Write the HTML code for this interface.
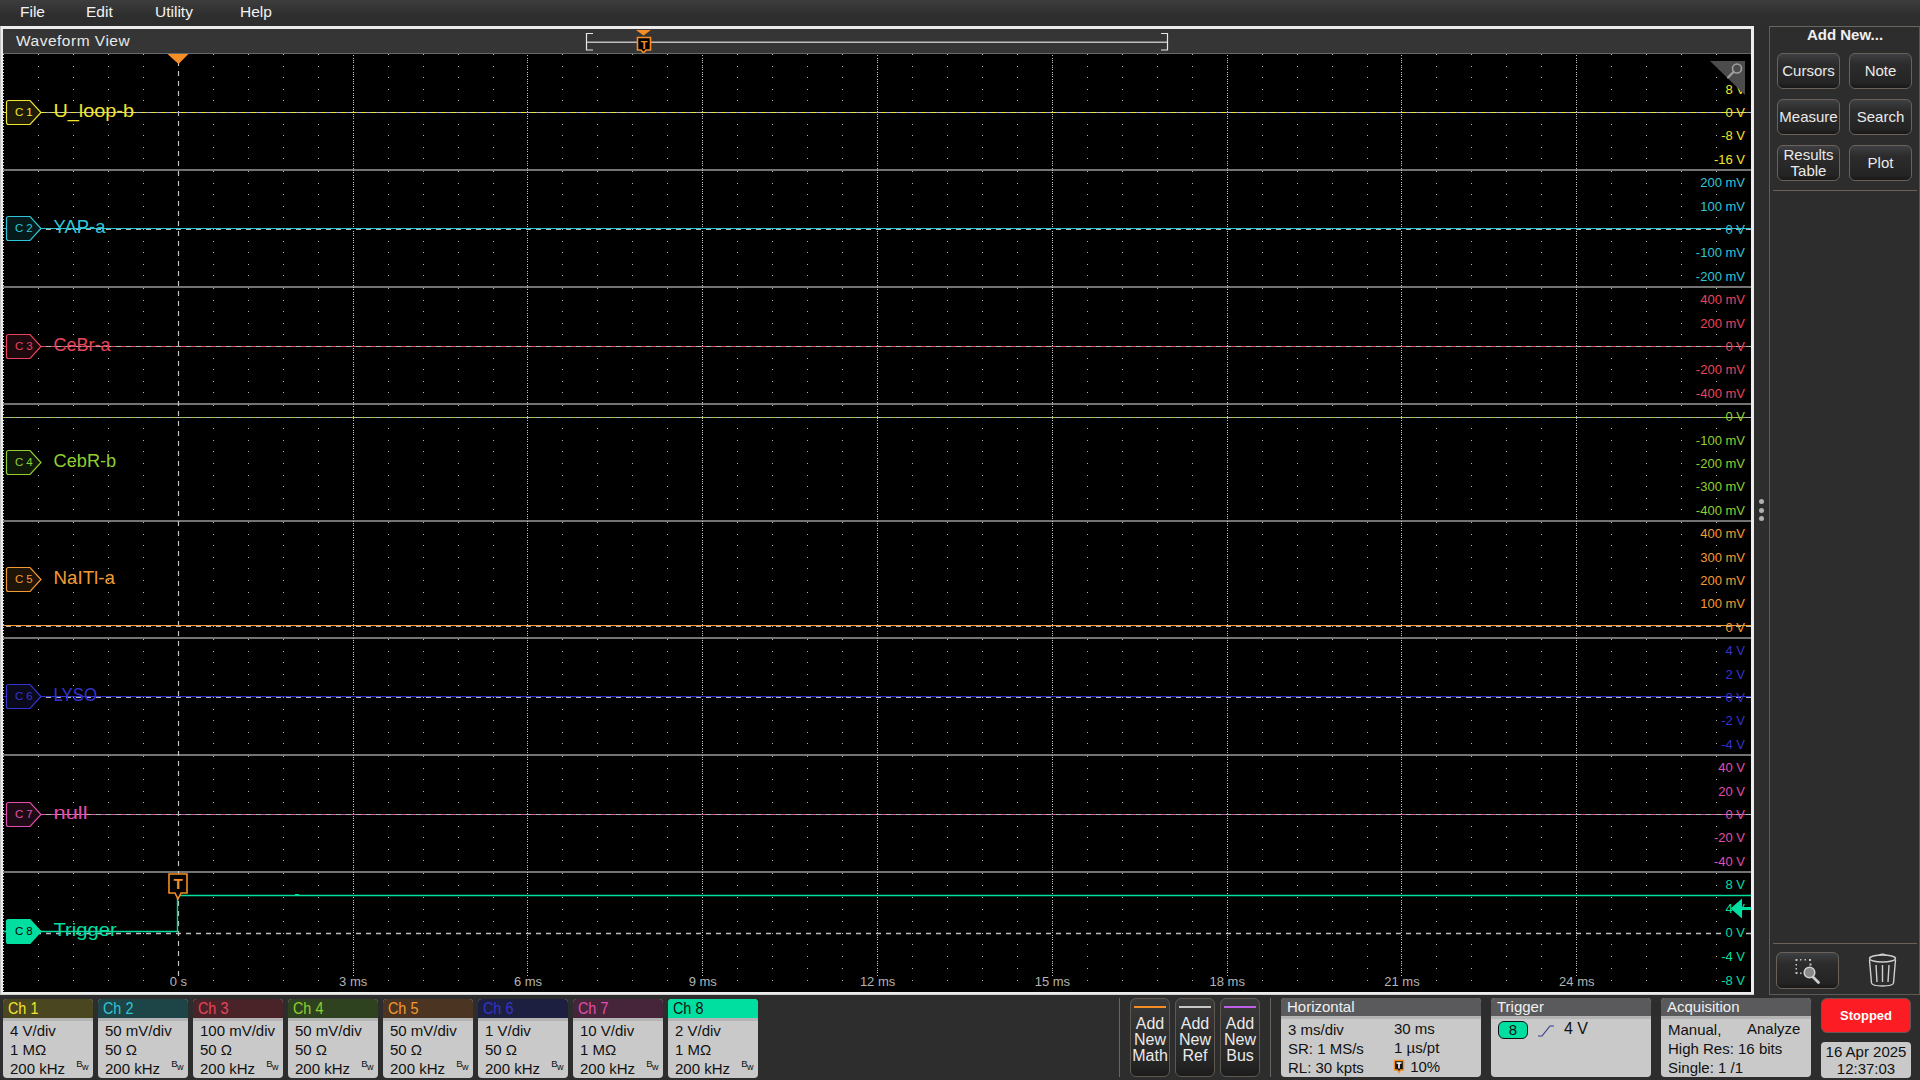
<!DOCTYPE html>
<html><head><meta charset="utf-8">
<style>
*{margin:0;padding:0;box-sizing:border-box}
html,body{width:1920px;height:1080px;overflow:hidden;background:#2d2d2d;font-family:"Liberation Sans", sans-serif;}
.abs{position:absolute}
#menubar{left:0;top:0;width:1920px;height:26px;background:linear-gradient(#3d3d3d,#2e2e2e 60%,#2d2d2d);}
.menu{position:absolute;top:3px;font-size:15.5px;color:#f2f2f2;}
#frame{left:0;top:26px;width:1754px;height:969px;background:#ececec;border-left:1.5px solid #c2c4c6;border-bottom:1px solid #d0d0d0;}
#wvhead{left:3px;top:29px;width:1748px;height:24px;background:#353535;}
#wvtitle{left:16px;top:32px;font-size:15.5px;letter-spacing:0.5px;color:#e8e8e8;}
svg text{font-family:"Liberation Sans", sans-serif;}
#rpanel{left:1769px;top:26px;width:151px;height:969px;border:1px solid #5e5a56;border-top-color:#6c6660;border-left-color:#5a5e62;border-right-color:#55585a;background:#2d2d2d;}
.btn{position:absolute;width:63px;height:36px;border:1px solid #6a625a;border-radius:6px;background:linear-gradient(#3e3f42 0%,#2c2c2c 30%,#242424 85%,#181818 100%);color:#eaeaea;font-size:15px;text-align:center;display:flex;align-items:center;justify-content:center;line-height:16px;}
.badge{position:absolute;top:999px;width:90px;height:79px;border-radius:4px;overflow:hidden;background:#c9c9c9;}
.badge .hd{height:19px;font-size:16px;line-height:19px;padding-left:5px;}
.badge .hd span{display:inline-block;transform:scaleX(0.9);transform-origin:0 0;letter-spacing:-0.3px;word-spacing:1px}
.badge .bd{border-top:3px solid #b4b4b4;font-size:15px;color:#111;padding-left:7px;padding-top:0px;line-height:19px;position:relative;}
.bw{position:absolute;right:5px;bottom:6px;font-size:9.5px;line-height:9px;color:#111;letter-spacing:-0.5px}
.addbtn{position:absolute;top:998px;width:40px;height:79px;border:1px solid #5e5850;border-radius:6px;background:linear-gradient(#3a3a3a,#262626 80%,#1c1c1c);color:#eaeaea;font-size:16px;line-height:16px;text-align:center;padding-top:17px;}
.addbtn .ln{position:absolute;left:3px;right:3px;top:7px;height:2px;}
.panel{position:absolute;top:998px;height:79px;border-radius:4px;overflow:hidden;background:#c9c9c9;}
.panel .hd{height:18px;background:#5a5a5c;color:#f0f0f0;font-size:15px;line-height:17px;padding-left:6px;}
.panel .bd{border-top:3px solid #b4b4b4;font-size:15px;color:#111;line-height:19px;padding-left:7px;padding-top:1px;position:relative;}
.vsep{position:absolute;top:998px;width:1px;height:79px;background:#6a645e;}
</style></head><body>
<div id="menubar" class="abs">
 <div class="menu" style="left:20px">File</div>
 <div class="menu" style="left:86px">Edit</div>
 <div class="menu" style="left:155px">Utility</div>
 <div class="menu" style="left:240px">Help</div>
</div>
<div id="frame" class="abs"></div>
<div id="wvhead" class="abs"></div>
<div id="wvtitle" class="abs">Waveform View</div>
<svg class="abs" style="left:0;top:0" width="1920" height="1080" viewBox="0 0 1920 1080">
 <g>
  <path d="M593 33.5H586.5V50H593" fill="none" stroke="#e6e6e6" stroke-width="1.2"/>
  <path d="M1161 33.5H1167.5V50H1161" fill="none" stroke="#e6e6e6" stroke-width="1.2"/>
  <rect x="587" y="41.5" width="580" height="1.5" fill="#bdbdbd"/>
  <path d="M636 30H651L643.5 35.5Z" fill="#f68e26"/>
  <path d="M637.5 37.5H650.5V50H646L643.5 53L641 50H637.5Z" fill="#000" stroke="#f68e26" stroke-width="1.6"/>
  <text x="644" y="48.5" text-anchor="middle" fill="#f68e26" font-size="11" font-weight="bold">T</text>
 </g>
<rect x="3" y="54" width="1748" height="938" fill="#000"/>
<line x1="3.5" y1="54" x2="3.5" y2="992" stroke="#d8d8d8" stroke-width="1" stroke-dasharray="1 2"/>
<path d="M38 54h1v1h-1zM73 54h1v1h-1zM108 54h1v1h-1zM143 54h1v1h-1zM213 54h1v1h-1zM248 54h1v1h-1zM283 54h1v1h-1zM318 54h1v1h-1zM388 54h1v1h-1zM423 54h1v1h-1zM458 54h1v1h-1zM493 54h1v1h-1zM562 54h1v1h-1zM597 54h1v1h-1zM632 54h1v1h-1zM667 54h1v1h-1zM737 54h1v1h-1zM772 54h1v1h-1zM807 54h1v1h-1zM842 54h1v1h-1zM912 54h1v1h-1zM947 54h1v1h-1zM982 54h1v1h-1zM1017 54h1v1h-1zM1087 54h1v1h-1zM1122 54h1v1h-1zM1157 54h1v1h-1zM1192 54h1v1h-1zM1262 54h1v1h-1zM1297 54h1v1h-1zM1332 54h1v1h-1zM1367 54h1v1h-1zM1436 54h1v1h-1zM1471 54h1v1h-1zM1506 54h1v1h-1zM1541 54h1v1h-1zM1611 54h1v1h-1zM1646 54h1v1h-1zM1681 54h1v1h-1zM1716 54h1v1h-1zM38 66h1v1h-1zM73 66h1v1h-1zM108 66h1v1h-1zM143 66h1v1h-1zM213 66h1v1h-1zM248 66h1v1h-1zM283 66h1v1h-1zM318 66h1v1h-1zM388 66h1v1h-1zM423 66h1v1h-1zM458 66h1v1h-1zM493 66h1v1h-1zM562 66h1v1h-1zM597 66h1v1h-1zM632 66h1v1h-1zM667 66h1v1h-1zM737 66h1v1h-1zM772 66h1v1h-1zM807 66h1v1h-1zM842 66h1v1h-1zM912 66h1v1h-1zM947 66h1v1h-1zM982 66h1v1h-1zM1017 66h1v1h-1zM1087 66h1v1h-1zM1122 66h1v1h-1zM1157 66h1v1h-1zM1192 66h1v1h-1zM1262 66h1v1h-1zM1297 66h1v1h-1zM1332 66h1v1h-1zM1367 66h1v1h-1zM1436 66h1v1h-1zM1471 66h1v1h-1zM1506 66h1v1h-1zM1541 66h1v1h-1zM1611 66h1v1h-1zM1646 66h1v1h-1zM1681 66h1v1h-1zM1716 66h1v1h-1zM38 77h1v1h-1zM73 77h1v1h-1zM108 77h1v1h-1zM143 77h1v1h-1zM213 77h1v1h-1zM248 77h1v1h-1zM283 77h1v1h-1zM318 77h1v1h-1zM388 77h1v1h-1zM423 77h1v1h-1zM458 77h1v1h-1zM493 77h1v1h-1zM562 77h1v1h-1zM597 77h1v1h-1zM632 77h1v1h-1zM667 77h1v1h-1zM737 77h1v1h-1zM772 77h1v1h-1zM807 77h1v1h-1zM842 77h1v1h-1zM912 77h1v1h-1zM947 77h1v1h-1zM982 77h1v1h-1zM1017 77h1v1h-1zM1087 77h1v1h-1zM1122 77h1v1h-1zM1157 77h1v1h-1zM1192 77h1v1h-1zM1262 77h1v1h-1zM1297 77h1v1h-1zM1332 77h1v1h-1zM1367 77h1v1h-1zM1436 77h1v1h-1zM1471 77h1v1h-1zM1506 77h1v1h-1zM1541 77h1v1h-1zM1611 77h1v1h-1zM1646 77h1v1h-1zM1681 77h1v1h-1zM1716 77h1v1h-1zM38 89h1v1h-1zM73 89h1v1h-1zM108 89h1v1h-1zM143 89h1v1h-1zM213 89h1v1h-1zM248 89h1v1h-1zM283 89h1v1h-1zM318 89h1v1h-1zM388 89h1v1h-1zM423 89h1v1h-1zM458 89h1v1h-1zM493 89h1v1h-1zM562 89h1v1h-1zM597 89h1v1h-1zM632 89h1v1h-1zM667 89h1v1h-1zM737 89h1v1h-1zM772 89h1v1h-1zM807 89h1v1h-1zM842 89h1v1h-1zM912 89h1v1h-1zM947 89h1v1h-1zM982 89h1v1h-1zM1017 89h1v1h-1zM1087 89h1v1h-1zM1122 89h1v1h-1zM1157 89h1v1h-1zM1192 89h1v1h-1zM1262 89h1v1h-1zM1297 89h1v1h-1zM1332 89h1v1h-1zM1367 89h1v1h-1zM1436 89h1v1h-1zM1471 89h1v1h-1zM1506 89h1v1h-1zM1541 89h1v1h-1zM1611 89h1v1h-1zM1646 89h1v1h-1zM1681 89h1v1h-1zM1716 89h1v1h-1zM38 100h1v1h-1zM73 100h1v1h-1zM108 100h1v1h-1zM143 100h1v1h-1zM213 100h1v1h-1zM248 100h1v1h-1zM283 100h1v1h-1zM318 100h1v1h-1zM388 100h1v1h-1zM423 100h1v1h-1zM458 100h1v1h-1zM493 100h1v1h-1zM562 100h1v1h-1zM597 100h1v1h-1zM632 100h1v1h-1zM667 100h1v1h-1zM737 100h1v1h-1zM772 100h1v1h-1zM807 100h1v1h-1zM842 100h1v1h-1zM912 100h1v1h-1zM947 100h1v1h-1zM982 100h1v1h-1zM1017 100h1v1h-1zM1087 100h1v1h-1zM1122 100h1v1h-1zM1157 100h1v1h-1zM1192 100h1v1h-1zM1262 100h1v1h-1zM1297 100h1v1h-1zM1332 100h1v1h-1zM1367 100h1v1h-1zM1436 100h1v1h-1zM1471 100h1v1h-1zM1506 100h1v1h-1zM1541 100h1v1h-1zM1611 100h1v1h-1zM1646 100h1v1h-1zM1681 100h1v1h-1zM1716 100h1v1h-1zM38 112h1v1h-1zM73 112h1v1h-1zM108 112h1v1h-1zM143 112h1v1h-1zM213 112h1v1h-1zM248 112h1v1h-1zM283 112h1v1h-1zM318 112h1v1h-1zM388 112h1v1h-1zM423 112h1v1h-1zM458 112h1v1h-1zM493 112h1v1h-1zM562 112h1v1h-1zM597 112h1v1h-1zM632 112h1v1h-1zM667 112h1v1h-1zM737 112h1v1h-1zM772 112h1v1h-1zM807 112h1v1h-1zM842 112h1v1h-1zM912 112h1v1h-1zM947 112h1v1h-1zM982 112h1v1h-1zM1017 112h1v1h-1zM1087 112h1v1h-1zM1122 112h1v1h-1zM1157 112h1v1h-1zM1192 112h1v1h-1zM1262 112h1v1h-1zM1297 112h1v1h-1zM1332 112h1v1h-1zM1367 112h1v1h-1zM1436 112h1v1h-1zM1471 112h1v1h-1zM1506 112h1v1h-1zM1541 112h1v1h-1zM1611 112h1v1h-1zM1646 112h1v1h-1zM1681 112h1v1h-1zM1716 112h1v1h-1zM38 124h1v1h-1zM73 124h1v1h-1zM108 124h1v1h-1zM143 124h1v1h-1zM213 124h1v1h-1zM248 124h1v1h-1zM283 124h1v1h-1zM318 124h1v1h-1zM388 124h1v1h-1zM423 124h1v1h-1zM458 124h1v1h-1zM493 124h1v1h-1zM562 124h1v1h-1zM597 124h1v1h-1zM632 124h1v1h-1zM667 124h1v1h-1zM737 124h1v1h-1zM772 124h1v1h-1zM807 124h1v1h-1zM842 124h1v1h-1zM912 124h1v1h-1zM947 124h1v1h-1zM982 124h1v1h-1zM1017 124h1v1h-1zM1087 124h1v1h-1zM1122 124h1v1h-1zM1157 124h1v1h-1zM1192 124h1v1h-1zM1262 124h1v1h-1zM1297 124h1v1h-1zM1332 124h1v1h-1zM1367 124h1v1h-1zM1436 124h1v1h-1zM1471 124h1v1h-1zM1506 124h1v1h-1zM1541 124h1v1h-1zM1611 124h1v1h-1zM1646 124h1v1h-1zM1681 124h1v1h-1zM1716 124h1v1h-1zM38 135h1v1h-1zM73 135h1v1h-1zM108 135h1v1h-1zM143 135h1v1h-1zM213 135h1v1h-1zM248 135h1v1h-1zM283 135h1v1h-1zM318 135h1v1h-1zM388 135h1v1h-1zM423 135h1v1h-1zM458 135h1v1h-1zM493 135h1v1h-1zM562 135h1v1h-1zM597 135h1v1h-1zM632 135h1v1h-1zM667 135h1v1h-1zM737 135h1v1h-1zM772 135h1v1h-1zM807 135h1v1h-1zM842 135h1v1h-1zM912 135h1v1h-1zM947 135h1v1h-1zM982 135h1v1h-1zM1017 135h1v1h-1zM1087 135h1v1h-1zM1122 135h1v1h-1zM1157 135h1v1h-1zM1192 135h1v1h-1zM1262 135h1v1h-1zM1297 135h1v1h-1zM1332 135h1v1h-1zM1367 135h1v1h-1zM1436 135h1v1h-1zM1471 135h1v1h-1zM1506 135h1v1h-1zM1541 135h1v1h-1zM1611 135h1v1h-1zM1646 135h1v1h-1zM1681 135h1v1h-1zM1716 135h1v1h-1zM38 147h1v1h-1zM73 147h1v1h-1zM108 147h1v1h-1zM143 147h1v1h-1zM213 147h1v1h-1zM248 147h1v1h-1zM283 147h1v1h-1zM318 147h1v1h-1zM388 147h1v1h-1zM423 147h1v1h-1zM458 147h1v1h-1zM493 147h1v1h-1zM562 147h1v1h-1zM597 147h1v1h-1zM632 147h1v1h-1zM667 147h1v1h-1zM737 147h1v1h-1zM772 147h1v1h-1zM807 147h1v1h-1zM842 147h1v1h-1zM912 147h1v1h-1zM947 147h1v1h-1zM982 147h1v1h-1zM1017 147h1v1h-1zM1087 147h1v1h-1zM1122 147h1v1h-1zM1157 147h1v1h-1zM1192 147h1v1h-1zM1262 147h1v1h-1zM1297 147h1v1h-1zM1332 147h1v1h-1zM1367 147h1v1h-1zM1436 147h1v1h-1zM1471 147h1v1h-1zM1506 147h1v1h-1zM1541 147h1v1h-1zM1611 147h1v1h-1zM1646 147h1v1h-1zM1681 147h1v1h-1zM1716 147h1v1h-1zM38 158h1v1h-1zM73 158h1v1h-1zM108 158h1v1h-1zM143 158h1v1h-1zM213 158h1v1h-1zM248 158h1v1h-1zM283 158h1v1h-1zM318 158h1v1h-1zM388 158h1v1h-1zM423 158h1v1h-1zM458 158h1v1h-1zM493 158h1v1h-1zM562 158h1v1h-1zM597 158h1v1h-1zM632 158h1v1h-1zM667 158h1v1h-1zM737 158h1v1h-1zM772 158h1v1h-1zM807 158h1v1h-1zM842 158h1v1h-1zM912 158h1v1h-1zM947 158h1v1h-1zM982 158h1v1h-1zM1017 158h1v1h-1zM1087 158h1v1h-1zM1122 158h1v1h-1zM1157 158h1v1h-1zM1192 158h1v1h-1zM1262 158h1v1h-1zM1297 158h1v1h-1zM1332 158h1v1h-1zM1367 158h1v1h-1zM1436 158h1v1h-1zM1471 158h1v1h-1zM1506 158h1v1h-1zM1541 158h1v1h-1zM1611 158h1v1h-1zM1646 158h1v1h-1zM1681 158h1v1h-1zM1716 158h1v1h-1zM38 171h1v1h-1zM73 171h1v1h-1zM108 171h1v1h-1zM143 171h1v1h-1zM213 171h1v1h-1zM248 171h1v1h-1zM283 171h1v1h-1zM318 171h1v1h-1zM388 171h1v1h-1zM423 171h1v1h-1zM458 171h1v1h-1zM493 171h1v1h-1zM562 171h1v1h-1zM597 171h1v1h-1zM632 171h1v1h-1zM667 171h1v1h-1zM737 171h1v1h-1zM772 171h1v1h-1zM807 171h1v1h-1zM842 171h1v1h-1zM912 171h1v1h-1zM947 171h1v1h-1zM982 171h1v1h-1zM1017 171h1v1h-1zM1087 171h1v1h-1zM1122 171h1v1h-1zM1157 171h1v1h-1zM1192 171h1v1h-1zM1262 171h1v1h-1zM1297 171h1v1h-1zM1332 171h1v1h-1zM1367 171h1v1h-1zM1436 171h1v1h-1zM1471 171h1v1h-1zM1506 171h1v1h-1zM1541 171h1v1h-1zM1611 171h1v1h-1zM1646 171h1v1h-1zM1681 171h1v1h-1zM1716 171h1v1h-1zM38 183h1v1h-1zM73 183h1v1h-1zM108 183h1v1h-1zM143 183h1v1h-1zM213 183h1v1h-1zM248 183h1v1h-1zM283 183h1v1h-1zM318 183h1v1h-1zM388 183h1v1h-1zM423 183h1v1h-1zM458 183h1v1h-1zM493 183h1v1h-1zM562 183h1v1h-1zM597 183h1v1h-1zM632 183h1v1h-1zM667 183h1v1h-1zM737 183h1v1h-1zM772 183h1v1h-1zM807 183h1v1h-1zM842 183h1v1h-1zM912 183h1v1h-1zM947 183h1v1h-1zM982 183h1v1h-1zM1017 183h1v1h-1zM1087 183h1v1h-1zM1122 183h1v1h-1zM1157 183h1v1h-1zM1192 183h1v1h-1zM1262 183h1v1h-1zM1297 183h1v1h-1zM1332 183h1v1h-1zM1367 183h1v1h-1zM1436 183h1v1h-1zM1471 183h1v1h-1zM1506 183h1v1h-1zM1541 183h1v1h-1zM1611 183h1v1h-1zM1646 183h1v1h-1zM1681 183h1v1h-1zM1716 183h1v1h-1zM38 194h1v1h-1zM73 194h1v1h-1zM108 194h1v1h-1zM143 194h1v1h-1zM213 194h1v1h-1zM248 194h1v1h-1zM283 194h1v1h-1zM318 194h1v1h-1zM388 194h1v1h-1zM423 194h1v1h-1zM458 194h1v1h-1zM493 194h1v1h-1zM562 194h1v1h-1zM597 194h1v1h-1zM632 194h1v1h-1zM667 194h1v1h-1zM737 194h1v1h-1zM772 194h1v1h-1zM807 194h1v1h-1zM842 194h1v1h-1zM912 194h1v1h-1zM947 194h1v1h-1zM982 194h1v1h-1zM1017 194h1v1h-1zM1087 194h1v1h-1zM1122 194h1v1h-1zM1157 194h1v1h-1zM1192 194h1v1h-1zM1262 194h1v1h-1zM1297 194h1v1h-1zM1332 194h1v1h-1zM1367 194h1v1h-1zM1436 194h1v1h-1zM1471 194h1v1h-1zM1506 194h1v1h-1zM1541 194h1v1h-1zM1611 194h1v1h-1zM1646 194h1v1h-1zM1681 194h1v1h-1zM1716 194h1v1h-1zM38 206h1v1h-1zM73 206h1v1h-1zM108 206h1v1h-1zM143 206h1v1h-1zM213 206h1v1h-1zM248 206h1v1h-1zM283 206h1v1h-1zM318 206h1v1h-1zM388 206h1v1h-1zM423 206h1v1h-1zM458 206h1v1h-1zM493 206h1v1h-1zM562 206h1v1h-1zM597 206h1v1h-1zM632 206h1v1h-1zM667 206h1v1h-1zM737 206h1v1h-1zM772 206h1v1h-1zM807 206h1v1h-1zM842 206h1v1h-1zM912 206h1v1h-1zM947 206h1v1h-1zM982 206h1v1h-1zM1017 206h1v1h-1zM1087 206h1v1h-1zM1122 206h1v1h-1zM1157 206h1v1h-1zM1192 206h1v1h-1zM1262 206h1v1h-1zM1297 206h1v1h-1zM1332 206h1v1h-1zM1367 206h1v1h-1zM1436 206h1v1h-1zM1471 206h1v1h-1zM1506 206h1v1h-1zM1541 206h1v1h-1zM1611 206h1v1h-1zM1646 206h1v1h-1zM1681 206h1v1h-1zM1716 206h1v1h-1zM38 217h1v1h-1zM73 217h1v1h-1zM108 217h1v1h-1zM143 217h1v1h-1zM213 217h1v1h-1zM248 217h1v1h-1zM283 217h1v1h-1zM318 217h1v1h-1zM388 217h1v1h-1zM423 217h1v1h-1zM458 217h1v1h-1zM493 217h1v1h-1zM562 217h1v1h-1zM597 217h1v1h-1zM632 217h1v1h-1zM667 217h1v1h-1zM737 217h1v1h-1zM772 217h1v1h-1zM807 217h1v1h-1zM842 217h1v1h-1zM912 217h1v1h-1zM947 217h1v1h-1zM982 217h1v1h-1zM1017 217h1v1h-1zM1087 217h1v1h-1zM1122 217h1v1h-1zM1157 217h1v1h-1zM1192 217h1v1h-1zM1262 217h1v1h-1zM1297 217h1v1h-1zM1332 217h1v1h-1zM1367 217h1v1h-1zM1436 217h1v1h-1zM1471 217h1v1h-1zM1506 217h1v1h-1zM1541 217h1v1h-1zM1611 217h1v1h-1zM1646 217h1v1h-1zM1681 217h1v1h-1zM1716 217h1v1h-1zM38 229h1v1h-1zM73 229h1v1h-1zM108 229h1v1h-1zM143 229h1v1h-1zM213 229h1v1h-1zM248 229h1v1h-1zM283 229h1v1h-1zM318 229h1v1h-1zM388 229h1v1h-1zM423 229h1v1h-1zM458 229h1v1h-1zM493 229h1v1h-1zM562 229h1v1h-1zM597 229h1v1h-1zM632 229h1v1h-1zM667 229h1v1h-1zM737 229h1v1h-1zM772 229h1v1h-1zM807 229h1v1h-1zM842 229h1v1h-1zM912 229h1v1h-1zM947 229h1v1h-1zM982 229h1v1h-1zM1017 229h1v1h-1zM1087 229h1v1h-1zM1122 229h1v1h-1zM1157 229h1v1h-1zM1192 229h1v1h-1zM1262 229h1v1h-1zM1297 229h1v1h-1zM1332 229h1v1h-1zM1367 229h1v1h-1zM1436 229h1v1h-1zM1471 229h1v1h-1zM1506 229h1v1h-1zM1541 229h1v1h-1zM1611 229h1v1h-1zM1646 229h1v1h-1zM1681 229h1v1h-1zM1716 229h1v1h-1zM38 241h1v1h-1zM73 241h1v1h-1zM108 241h1v1h-1zM143 241h1v1h-1zM213 241h1v1h-1zM248 241h1v1h-1zM283 241h1v1h-1zM318 241h1v1h-1zM388 241h1v1h-1zM423 241h1v1h-1zM458 241h1v1h-1zM493 241h1v1h-1zM562 241h1v1h-1zM597 241h1v1h-1zM632 241h1v1h-1zM667 241h1v1h-1zM737 241h1v1h-1zM772 241h1v1h-1zM807 241h1v1h-1zM842 241h1v1h-1zM912 241h1v1h-1zM947 241h1v1h-1zM982 241h1v1h-1zM1017 241h1v1h-1zM1087 241h1v1h-1zM1122 241h1v1h-1zM1157 241h1v1h-1zM1192 241h1v1h-1zM1262 241h1v1h-1zM1297 241h1v1h-1zM1332 241h1v1h-1zM1367 241h1v1h-1zM1436 241h1v1h-1zM1471 241h1v1h-1zM1506 241h1v1h-1zM1541 241h1v1h-1zM1611 241h1v1h-1zM1646 241h1v1h-1zM1681 241h1v1h-1zM1716 241h1v1h-1zM38 252h1v1h-1zM73 252h1v1h-1zM108 252h1v1h-1zM143 252h1v1h-1zM213 252h1v1h-1zM248 252h1v1h-1zM283 252h1v1h-1zM318 252h1v1h-1zM388 252h1v1h-1zM423 252h1v1h-1zM458 252h1v1h-1zM493 252h1v1h-1zM562 252h1v1h-1zM597 252h1v1h-1zM632 252h1v1h-1zM667 252h1v1h-1zM737 252h1v1h-1zM772 252h1v1h-1zM807 252h1v1h-1zM842 252h1v1h-1zM912 252h1v1h-1zM947 252h1v1h-1zM982 252h1v1h-1zM1017 252h1v1h-1zM1087 252h1v1h-1zM1122 252h1v1h-1zM1157 252h1v1h-1zM1192 252h1v1h-1zM1262 252h1v1h-1zM1297 252h1v1h-1zM1332 252h1v1h-1zM1367 252h1v1h-1zM1436 252h1v1h-1zM1471 252h1v1h-1zM1506 252h1v1h-1zM1541 252h1v1h-1zM1611 252h1v1h-1zM1646 252h1v1h-1zM1681 252h1v1h-1zM1716 252h1v1h-1zM38 264h1v1h-1zM73 264h1v1h-1zM108 264h1v1h-1zM143 264h1v1h-1zM213 264h1v1h-1zM248 264h1v1h-1zM283 264h1v1h-1zM318 264h1v1h-1zM388 264h1v1h-1zM423 264h1v1h-1zM458 264h1v1h-1zM493 264h1v1h-1zM562 264h1v1h-1zM597 264h1v1h-1zM632 264h1v1h-1zM667 264h1v1h-1zM737 264h1v1h-1zM772 264h1v1h-1zM807 264h1v1h-1zM842 264h1v1h-1zM912 264h1v1h-1zM947 264h1v1h-1zM982 264h1v1h-1zM1017 264h1v1h-1zM1087 264h1v1h-1zM1122 264h1v1h-1zM1157 264h1v1h-1zM1192 264h1v1h-1zM1262 264h1v1h-1zM1297 264h1v1h-1zM1332 264h1v1h-1zM1367 264h1v1h-1zM1436 264h1v1h-1zM1471 264h1v1h-1zM1506 264h1v1h-1zM1541 264h1v1h-1zM1611 264h1v1h-1zM1646 264h1v1h-1zM1681 264h1v1h-1zM1716 264h1v1h-1zM38 275h1v1h-1zM73 275h1v1h-1zM108 275h1v1h-1zM143 275h1v1h-1zM213 275h1v1h-1zM248 275h1v1h-1zM283 275h1v1h-1zM318 275h1v1h-1zM388 275h1v1h-1zM423 275h1v1h-1zM458 275h1v1h-1zM493 275h1v1h-1zM562 275h1v1h-1zM597 275h1v1h-1zM632 275h1v1h-1zM667 275h1v1h-1zM737 275h1v1h-1zM772 275h1v1h-1zM807 275h1v1h-1zM842 275h1v1h-1zM912 275h1v1h-1zM947 275h1v1h-1zM982 275h1v1h-1zM1017 275h1v1h-1zM1087 275h1v1h-1zM1122 275h1v1h-1zM1157 275h1v1h-1zM1192 275h1v1h-1zM1262 275h1v1h-1zM1297 275h1v1h-1zM1332 275h1v1h-1zM1367 275h1v1h-1zM1436 275h1v1h-1zM1471 275h1v1h-1zM1506 275h1v1h-1zM1541 275h1v1h-1zM1611 275h1v1h-1zM1646 275h1v1h-1zM1681 275h1v1h-1zM1716 275h1v1h-1zM38 288h1v1h-1zM73 288h1v1h-1zM108 288h1v1h-1zM143 288h1v1h-1zM213 288h1v1h-1zM248 288h1v1h-1zM283 288h1v1h-1zM318 288h1v1h-1zM388 288h1v1h-1zM423 288h1v1h-1zM458 288h1v1h-1zM493 288h1v1h-1zM562 288h1v1h-1zM597 288h1v1h-1zM632 288h1v1h-1zM667 288h1v1h-1zM737 288h1v1h-1zM772 288h1v1h-1zM807 288h1v1h-1zM842 288h1v1h-1zM912 288h1v1h-1zM947 288h1v1h-1zM982 288h1v1h-1zM1017 288h1v1h-1zM1087 288h1v1h-1zM1122 288h1v1h-1zM1157 288h1v1h-1zM1192 288h1v1h-1zM1262 288h1v1h-1zM1297 288h1v1h-1zM1332 288h1v1h-1zM1367 288h1v1h-1zM1436 288h1v1h-1zM1471 288h1v1h-1zM1506 288h1v1h-1zM1541 288h1v1h-1zM1611 288h1v1h-1zM1646 288h1v1h-1zM1681 288h1v1h-1zM1716 288h1v1h-1zM38 300h1v1h-1zM73 300h1v1h-1zM108 300h1v1h-1zM143 300h1v1h-1zM213 300h1v1h-1zM248 300h1v1h-1zM283 300h1v1h-1zM318 300h1v1h-1zM388 300h1v1h-1zM423 300h1v1h-1zM458 300h1v1h-1zM493 300h1v1h-1zM562 300h1v1h-1zM597 300h1v1h-1zM632 300h1v1h-1zM667 300h1v1h-1zM737 300h1v1h-1zM772 300h1v1h-1zM807 300h1v1h-1zM842 300h1v1h-1zM912 300h1v1h-1zM947 300h1v1h-1zM982 300h1v1h-1zM1017 300h1v1h-1zM1087 300h1v1h-1zM1122 300h1v1h-1zM1157 300h1v1h-1zM1192 300h1v1h-1zM1262 300h1v1h-1zM1297 300h1v1h-1zM1332 300h1v1h-1zM1367 300h1v1h-1zM1436 300h1v1h-1zM1471 300h1v1h-1zM1506 300h1v1h-1zM1541 300h1v1h-1zM1611 300h1v1h-1zM1646 300h1v1h-1zM1681 300h1v1h-1zM1716 300h1v1h-1zM38 311h1v1h-1zM73 311h1v1h-1zM108 311h1v1h-1zM143 311h1v1h-1zM213 311h1v1h-1zM248 311h1v1h-1zM283 311h1v1h-1zM318 311h1v1h-1zM388 311h1v1h-1zM423 311h1v1h-1zM458 311h1v1h-1zM493 311h1v1h-1zM562 311h1v1h-1zM597 311h1v1h-1zM632 311h1v1h-1zM667 311h1v1h-1zM737 311h1v1h-1zM772 311h1v1h-1zM807 311h1v1h-1zM842 311h1v1h-1zM912 311h1v1h-1zM947 311h1v1h-1zM982 311h1v1h-1zM1017 311h1v1h-1zM1087 311h1v1h-1zM1122 311h1v1h-1zM1157 311h1v1h-1zM1192 311h1v1h-1zM1262 311h1v1h-1zM1297 311h1v1h-1zM1332 311h1v1h-1zM1367 311h1v1h-1zM1436 311h1v1h-1zM1471 311h1v1h-1zM1506 311h1v1h-1zM1541 311h1v1h-1zM1611 311h1v1h-1zM1646 311h1v1h-1zM1681 311h1v1h-1zM1716 311h1v1h-1zM38 323h1v1h-1zM73 323h1v1h-1zM108 323h1v1h-1zM143 323h1v1h-1zM213 323h1v1h-1zM248 323h1v1h-1zM283 323h1v1h-1zM318 323h1v1h-1zM388 323h1v1h-1zM423 323h1v1h-1zM458 323h1v1h-1zM493 323h1v1h-1zM562 323h1v1h-1zM597 323h1v1h-1zM632 323h1v1h-1zM667 323h1v1h-1zM737 323h1v1h-1zM772 323h1v1h-1zM807 323h1v1h-1zM842 323h1v1h-1zM912 323h1v1h-1zM947 323h1v1h-1zM982 323h1v1h-1zM1017 323h1v1h-1zM1087 323h1v1h-1zM1122 323h1v1h-1zM1157 323h1v1h-1zM1192 323h1v1h-1zM1262 323h1v1h-1zM1297 323h1v1h-1zM1332 323h1v1h-1zM1367 323h1v1h-1zM1436 323h1v1h-1zM1471 323h1v1h-1zM1506 323h1v1h-1zM1541 323h1v1h-1zM1611 323h1v1h-1zM1646 323h1v1h-1zM1681 323h1v1h-1zM1716 323h1v1h-1zM38 334h1v1h-1zM73 334h1v1h-1zM108 334h1v1h-1zM143 334h1v1h-1zM213 334h1v1h-1zM248 334h1v1h-1zM283 334h1v1h-1zM318 334h1v1h-1zM388 334h1v1h-1zM423 334h1v1h-1zM458 334h1v1h-1zM493 334h1v1h-1zM562 334h1v1h-1zM597 334h1v1h-1zM632 334h1v1h-1zM667 334h1v1h-1zM737 334h1v1h-1zM772 334h1v1h-1zM807 334h1v1h-1zM842 334h1v1h-1zM912 334h1v1h-1zM947 334h1v1h-1zM982 334h1v1h-1zM1017 334h1v1h-1zM1087 334h1v1h-1zM1122 334h1v1h-1zM1157 334h1v1h-1zM1192 334h1v1h-1zM1262 334h1v1h-1zM1297 334h1v1h-1zM1332 334h1v1h-1zM1367 334h1v1h-1zM1436 334h1v1h-1zM1471 334h1v1h-1zM1506 334h1v1h-1zM1541 334h1v1h-1zM1611 334h1v1h-1zM1646 334h1v1h-1zM1681 334h1v1h-1zM1716 334h1v1h-1zM38 346h1v1h-1zM73 346h1v1h-1zM108 346h1v1h-1zM143 346h1v1h-1zM213 346h1v1h-1zM248 346h1v1h-1zM283 346h1v1h-1zM318 346h1v1h-1zM388 346h1v1h-1zM423 346h1v1h-1zM458 346h1v1h-1zM493 346h1v1h-1zM562 346h1v1h-1zM597 346h1v1h-1zM632 346h1v1h-1zM667 346h1v1h-1zM737 346h1v1h-1zM772 346h1v1h-1zM807 346h1v1h-1zM842 346h1v1h-1zM912 346h1v1h-1zM947 346h1v1h-1zM982 346h1v1h-1zM1017 346h1v1h-1zM1087 346h1v1h-1zM1122 346h1v1h-1zM1157 346h1v1h-1zM1192 346h1v1h-1zM1262 346h1v1h-1zM1297 346h1v1h-1zM1332 346h1v1h-1zM1367 346h1v1h-1zM1436 346h1v1h-1zM1471 346h1v1h-1zM1506 346h1v1h-1zM1541 346h1v1h-1zM1611 346h1v1h-1zM1646 346h1v1h-1zM1681 346h1v1h-1zM1716 346h1v1h-1zM38 358h1v1h-1zM73 358h1v1h-1zM108 358h1v1h-1zM143 358h1v1h-1zM213 358h1v1h-1zM248 358h1v1h-1zM283 358h1v1h-1zM318 358h1v1h-1zM388 358h1v1h-1zM423 358h1v1h-1zM458 358h1v1h-1zM493 358h1v1h-1zM562 358h1v1h-1zM597 358h1v1h-1zM632 358h1v1h-1zM667 358h1v1h-1zM737 358h1v1h-1zM772 358h1v1h-1zM807 358h1v1h-1zM842 358h1v1h-1zM912 358h1v1h-1zM947 358h1v1h-1zM982 358h1v1h-1zM1017 358h1v1h-1zM1087 358h1v1h-1zM1122 358h1v1h-1zM1157 358h1v1h-1zM1192 358h1v1h-1zM1262 358h1v1h-1zM1297 358h1v1h-1zM1332 358h1v1h-1zM1367 358h1v1h-1zM1436 358h1v1h-1zM1471 358h1v1h-1zM1506 358h1v1h-1zM1541 358h1v1h-1zM1611 358h1v1h-1zM1646 358h1v1h-1zM1681 358h1v1h-1zM1716 358h1v1h-1zM38 369h1v1h-1zM73 369h1v1h-1zM108 369h1v1h-1zM143 369h1v1h-1zM213 369h1v1h-1zM248 369h1v1h-1zM283 369h1v1h-1zM318 369h1v1h-1zM388 369h1v1h-1zM423 369h1v1h-1zM458 369h1v1h-1zM493 369h1v1h-1zM562 369h1v1h-1zM597 369h1v1h-1zM632 369h1v1h-1zM667 369h1v1h-1zM737 369h1v1h-1zM772 369h1v1h-1zM807 369h1v1h-1zM842 369h1v1h-1zM912 369h1v1h-1zM947 369h1v1h-1zM982 369h1v1h-1zM1017 369h1v1h-1zM1087 369h1v1h-1zM1122 369h1v1h-1zM1157 369h1v1h-1zM1192 369h1v1h-1zM1262 369h1v1h-1zM1297 369h1v1h-1zM1332 369h1v1h-1zM1367 369h1v1h-1zM1436 369h1v1h-1zM1471 369h1v1h-1zM1506 369h1v1h-1zM1541 369h1v1h-1zM1611 369h1v1h-1zM1646 369h1v1h-1zM1681 369h1v1h-1zM1716 369h1v1h-1zM38 381h1v1h-1zM73 381h1v1h-1zM108 381h1v1h-1zM143 381h1v1h-1zM213 381h1v1h-1zM248 381h1v1h-1zM283 381h1v1h-1zM318 381h1v1h-1zM388 381h1v1h-1zM423 381h1v1h-1zM458 381h1v1h-1zM493 381h1v1h-1zM562 381h1v1h-1zM597 381h1v1h-1zM632 381h1v1h-1zM667 381h1v1h-1zM737 381h1v1h-1zM772 381h1v1h-1zM807 381h1v1h-1zM842 381h1v1h-1zM912 381h1v1h-1zM947 381h1v1h-1zM982 381h1v1h-1zM1017 381h1v1h-1zM1087 381h1v1h-1zM1122 381h1v1h-1zM1157 381h1v1h-1zM1192 381h1v1h-1zM1262 381h1v1h-1zM1297 381h1v1h-1zM1332 381h1v1h-1zM1367 381h1v1h-1zM1436 381h1v1h-1zM1471 381h1v1h-1zM1506 381h1v1h-1zM1541 381h1v1h-1zM1611 381h1v1h-1zM1646 381h1v1h-1zM1681 381h1v1h-1zM1716 381h1v1h-1zM38 392h1v1h-1zM73 392h1v1h-1zM108 392h1v1h-1zM143 392h1v1h-1zM213 392h1v1h-1zM248 392h1v1h-1zM283 392h1v1h-1zM318 392h1v1h-1zM388 392h1v1h-1zM423 392h1v1h-1zM458 392h1v1h-1zM493 392h1v1h-1zM562 392h1v1h-1zM597 392h1v1h-1zM632 392h1v1h-1zM667 392h1v1h-1zM737 392h1v1h-1zM772 392h1v1h-1zM807 392h1v1h-1zM842 392h1v1h-1zM912 392h1v1h-1zM947 392h1v1h-1zM982 392h1v1h-1zM1017 392h1v1h-1zM1087 392h1v1h-1zM1122 392h1v1h-1zM1157 392h1v1h-1zM1192 392h1v1h-1zM1262 392h1v1h-1zM1297 392h1v1h-1zM1332 392h1v1h-1zM1367 392h1v1h-1zM1436 392h1v1h-1zM1471 392h1v1h-1zM1506 392h1v1h-1zM1541 392h1v1h-1zM1611 392h1v1h-1zM1646 392h1v1h-1zM1681 392h1v1h-1zM1716 392h1v1h-1zM38 405h1v1h-1zM73 405h1v1h-1zM108 405h1v1h-1zM143 405h1v1h-1zM213 405h1v1h-1zM248 405h1v1h-1zM283 405h1v1h-1zM318 405h1v1h-1zM388 405h1v1h-1zM423 405h1v1h-1zM458 405h1v1h-1zM493 405h1v1h-1zM562 405h1v1h-1zM597 405h1v1h-1zM632 405h1v1h-1zM667 405h1v1h-1zM737 405h1v1h-1zM772 405h1v1h-1zM807 405h1v1h-1zM842 405h1v1h-1zM912 405h1v1h-1zM947 405h1v1h-1zM982 405h1v1h-1zM1017 405h1v1h-1zM1087 405h1v1h-1zM1122 405h1v1h-1zM1157 405h1v1h-1zM1192 405h1v1h-1zM1262 405h1v1h-1zM1297 405h1v1h-1zM1332 405h1v1h-1zM1367 405h1v1h-1zM1436 405h1v1h-1zM1471 405h1v1h-1zM1506 405h1v1h-1zM1541 405h1v1h-1zM1611 405h1v1h-1zM1646 405h1v1h-1zM1681 405h1v1h-1zM1716 405h1v1h-1zM38 417h1v1h-1zM73 417h1v1h-1zM108 417h1v1h-1zM143 417h1v1h-1zM213 417h1v1h-1zM248 417h1v1h-1zM283 417h1v1h-1zM318 417h1v1h-1zM388 417h1v1h-1zM423 417h1v1h-1zM458 417h1v1h-1zM493 417h1v1h-1zM562 417h1v1h-1zM597 417h1v1h-1zM632 417h1v1h-1zM667 417h1v1h-1zM737 417h1v1h-1zM772 417h1v1h-1zM807 417h1v1h-1zM842 417h1v1h-1zM912 417h1v1h-1zM947 417h1v1h-1zM982 417h1v1h-1zM1017 417h1v1h-1zM1087 417h1v1h-1zM1122 417h1v1h-1zM1157 417h1v1h-1zM1192 417h1v1h-1zM1262 417h1v1h-1zM1297 417h1v1h-1zM1332 417h1v1h-1zM1367 417h1v1h-1zM1436 417h1v1h-1zM1471 417h1v1h-1zM1506 417h1v1h-1zM1541 417h1v1h-1zM1611 417h1v1h-1zM1646 417h1v1h-1zM1681 417h1v1h-1zM1716 417h1v1h-1zM38 428h1v1h-1zM73 428h1v1h-1zM108 428h1v1h-1zM143 428h1v1h-1zM213 428h1v1h-1zM248 428h1v1h-1zM283 428h1v1h-1zM318 428h1v1h-1zM388 428h1v1h-1zM423 428h1v1h-1zM458 428h1v1h-1zM493 428h1v1h-1zM562 428h1v1h-1zM597 428h1v1h-1zM632 428h1v1h-1zM667 428h1v1h-1zM737 428h1v1h-1zM772 428h1v1h-1zM807 428h1v1h-1zM842 428h1v1h-1zM912 428h1v1h-1zM947 428h1v1h-1zM982 428h1v1h-1zM1017 428h1v1h-1zM1087 428h1v1h-1zM1122 428h1v1h-1zM1157 428h1v1h-1zM1192 428h1v1h-1zM1262 428h1v1h-1zM1297 428h1v1h-1zM1332 428h1v1h-1zM1367 428h1v1h-1zM1436 428h1v1h-1zM1471 428h1v1h-1zM1506 428h1v1h-1zM1541 428h1v1h-1zM1611 428h1v1h-1zM1646 428h1v1h-1zM1681 428h1v1h-1zM1716 428h1v1h-1zM38 440h1v1h-1zM73 440h1v1h-1zM108 440h1v1h-1zM143 440h1v1h-1zM213 440h1v1h-1zM248 440h1v1h-1zM283 440h1v1h-1zM318 440h1v1h-1zM388 440h1v1h-1zM423 440h1v1h-1zM458 440h1v1h-1zM493 440h1v1h-1zM562 440h1v1h-1zM597 440h1v1h-1zM632 440h1v1h-1zM667 440h1v1h-1zM737 440h1v1h-1zM772 440h1v1h-1zM807 440h1v1h-1zM842 440h1v1h-1zM912 440h1v1h-1zM947 440h1v1h-1zM982 440h1v1h-1zM1017 440h1v1h-1zM1087 440h1v1h-1zM1122 440h1v1h-1zM1157 440h1v1h-1zM1192 440h1v1h-1zM1262 440h1v1h-1zM1297 440h1v1h-1zM1332 440h1v1h-1zM1367 440h1v1h-1zM1436 440h1v1h-1zM1471 440h1v1h-1zM1506 440h1v1h-1zM1541 440h1v1h-1zM1611 440h1v1h-1zM1646 440h1v1h-1zM1681 440h1v1h-1zM1716 440h1v1h-1zM38 451h1v1h-1zM73 451h1v1h-1zM108 451h1v1h-1zM143 451h1v1h-1zM213 451h1v1h-1zM248 451h1v1h-1zM283 451h1v1h-1zM318 451h1v1h-1zM388 451h1v1h-1zM423 451h1v1h-1zM458 451h1v1h-1zM493 451h1v1h-1zM562 451h1v1h-1zM597 451h1v1h-1zM632 451h1v1h-1zM667 451h1v1h-1zM737 451h1v1h-1zM772 451h1v1h-1zM807 451h1v1h-1zM842 451h1v1h-1zM912 451h1v1h-1zM947 451h1v1h-1zM982 451h1v1h-1zM1017 451h1v1h-1zM1087 451h1v1h-1zM1122 451h1v1h-1zM1157 451h1v1h-1zM1192 451h1v1h-1zM1262 451h1v1h-1zM1297 451h1v1h-1zM1332 451h1v1h-1zM1367 451h1v1h-1zM1436 451h1v1h-1zM1471 451h1v1h-1zM1506 451h1v1h-1zM1541 451h1v1h-1zM1611 451h1v1h-1zM1646 451h1v1h-1zM1681 451h1v1h-1zM1716 451h1v1h-1zM38 463h1v1h-1zM73 463h1v1h-1zM108 463h1v1h-1zM143 463h1v1h-1zM213 463h1v1h-1zM248 463h1v1h-1zM283 463h1v1h-1zM318 463h1v1h-1zM388 463h1v1h-1zM423 463h1v1h-1zM458 463h1v1h-1zM493 463h1v1h-1zM562 463h1v1h-1zM597 463h1v1h-1zM632 463h1v1h-1zM667 463h1v1h-1zM737 463h1v1h-1zM772 463h1v1h-1zM807 463h1v1h-1zM842 463h1v1h-1zM912 463h1v1h-1zM947 463h1v1h-1zM982 463h1v1h-1zM1017 463h1v1h-1zM1087 463h1v1h-1zM1122 463h1v1h-1zM1157 463h1v1h-1zM1192 463h1v1h-1zM1262 463h1v1h-1zM1297 463h1v1h-1zM1332 463h1v1h-1zM1367 463h1v1h-1zM1436 463h1v1h-1zM1471 463h1v1h-1zM1506 463h1v1h-1zM1541 463h1v1h-1zM1611 463h1v1h-1zM1646 463h1v1h-1zM1681 463h1v1h-1zM1716 463h1v1h-1zM38 475h1v1h-1zM73 475h1v1h-1zM108 475h1v1h-1zM143 475h1v1h-1zM213 475h1v1h-1zM248 475h1v1h-1zM283 475h1v1h-1zM318 475h1v1h-1zM388 475h1v1h-1zM423 475h1v1h-1zM458 475h1v1h-1zM493 475h1v1h-1zM562 475h1v1h-1zM597 475h1v1h-1zM632 475h1v1h-1zM667 475h1v1h-1zM737 475h1v1h-1zM772 475h1v1h-1zM807 475h1v1h-1zM842 475h1v1h-1zM912 475h1v1h-1zM947 475h1v1h-1zM982 475h1v1h-1zM1017 475h1v1h-1zM1087 475h1v1h-1zM1122 475h1v1h-1zM1157 475h1v1h-1zM1192 475h1v1h-1zM1262 475h1v1h-1zM1297 475h1v1h-1zM1332 475h1v1h-1zM1367 475h1v1h-1zM1436 475h1v1h-1zM1471 475h1v1h-1zM1506 475h1v1h-1zM1541 475h1v1h-1zM1611 475h1v1h-1zM1646 475h1v1h-1zM1681 475h1v1h-1zM1716 475h1v1h-1zM38 486h1v1h-1zM73 486h1v1h-1zM108 486h1v1h-1zM143 486h1v1h-1zM213 486h1v1h-1zM248 486h1v1h-1zM283 486h1v1h-1zM318 486h1v1h-1zM388 486h1v1h-1zM423 486h1v1h-1zM458 486h1v1h-1zM493 486h1v1h-1zM562 486h1v1h-1zM597 486h1v1h-1zM632 486h1v1h-1zM667 486h1v1h-1zM737 486h1v1h-1zM772 486h1v1h-1zM807 486h1v1h-1zM842 486h1v1h-1zM912 486h1v1h-1zM947 486h1v1h-1zM982 486h1v1h-1zM1017 486h1v1h-1zM1087 486h1v1h-1zM1122 486h1v1h-1zM1157 486h1v1h-1zM1192 486h1v1h-1zM1262 486h1v1h-1zM1297 486h1v1h-1zM1332 486h1v1h-1zM1367 486h1v1h-1zM1436 486h1v1h-1zM1471 486h1v1h-1zM1506 486h1v1h-1zM1541 486h1v1h-1zM1611 486h1v1h-1zM1646 486h1v1h-1zM1681 486h1v1h-1zM1716 486h1v1h-1zM38 498h1v1h-1zM73 498h1v1h-1zM108 498h1v1h-1zM143 498h1v1h-1zM213 498h1v1h-1zM248 498h1v1h-1zM283 498h1v1h-1zM318 498h1v1h-1zM388 498h1v1h-1zM423 498h1v1h-1zM458 498h1v1h-1zM493 498h1v1h-1zM562 498h1v1h-1zM597 498h1v1h-1zM632 498h1v1h-1zM667 498h1v1h-1zM737 498h1v1h-1zM772 498h1v1h-1zM807 498h1v1h-1zM842 498h1v1h-1zM912 498h1v1h-1zM947 498h1v1h-1zM982 498h1v1h-1zM1017 498h1v1h-1zM1087 498h1v1h-1zM1122 498h1v1h-1zM1157 498h1v1h-1zM1192 498h1v1h-1zM1262 498h1v1h-1zM1297 498h1v1h-1zM1332 498h1v1h-1zM1367 498h1v1h-1zM1436 498h1v1h-1zM1471 498h1v1h-1zM1506 498h1v1h-1zM1541 498h1v1h-1zM1611 498h1v1h-1zM1646 498h1v1h-1zM1681 498h1v1h-1zM1716 498h1v1h-1zM38 509h1v1h-1zM73 509h1v1h-1zM108 509h1v1h-1zM143 509h1v1h-1zM213 509h1v1h-1zM248 509h1v1h-1zM283 509h1v1h-1zM318 509h1v1h-1zM388 509h1v1h-1zM423 509h1v1h-1zM458 509h1v1h-1zM493 509h1v1h-1zM562 509h1v1h-1zM597 509h1v1h-1zM632 509h1v1h-1zM667 509h1v1h-1zM737 509h1v1h-1zM772 509h1v1h-1zM807 509h1v1h-1zM842 509h1v1h-1zM912 509h1v1h-1zM947 509h1v1h-1zM982 509h1v1h-1zM1017 509h1v1h-1zM1087 509h1v1h-1zM1122 509h1v1h-1zM1157 509h1v1h-1zM1192 509h1v1h-1zM1262 509h1v1h-1zM1297 509h1v1h-1zM1332 509h1v1h-1zM1367 509h1v1h-1zM1436 509h1v1h-1zM1471 509h1v1h-1zM1506 509h1v1h-1zM1541 509h1v1h-1zM1611 509h1v1h-1zM1646 509h1v1h-1zM1681 509h1v1h-1zM1716 509h1v1h-1zM38 522h1v1h-1zM73 522h1v1h-1zM108 522h1v1h-1zM143 522h1v1h-1zM213 522h1v1h-1zM248 522h1v1h-1zM283 522h1v1h-1zM318 522h1v1h-1zM388 522h1v1h-1zM423 522h1v1h-1zM458 522h1v1h-1zM493 522h1v1h-1zM562 522h1v1h-1zM597 522h1v1h-1zM632 522h1v1h-1zM667 522h1v1h-1zM737 522h1v1h-1zM772 522h1v1h-1zM807 522h1v1h-1zM842 522h1v1h-1zM912 522h1v1h-1zM947 522h1v1h-1zM982 522h1v1h-1zM1017 522h1v1h-1zM1087 522h1v1h-1zM1122 522h1v1h-1zM1157 522h1v1h-1zM1192 522h1v1h-1zM1262 522h1v1h-1zM1297 522h1v1h-1zM1332 522h1v1h-1zM1367 522h1v1h-1zM1436 522h1v1h-1zM1471 522h1v1h-1zM1506 522h1v1h-1zM1541 522h1v1h-1zM1611 522h1v1h-1zM1646 522h1v1h-1zM1681 522h1v1h-1zM1716 522h1v1h-1zM38 534h1v1h-1zM73 534h1v1h-1zM108 534h1v1h-1zM143 534h1v1h-1zM213 534h1v1h-1zM248 534h1v1h-1zM283 534h1v1h-1zM318 534h1v1h-1zM388 534h1v1h-1zM423 534h1v1h-1zM458 534h1v1h-1zM493 534h1v1h-1zM562 534h1v1h-1zM597 534h1v1h-1zM632 534h1v1h-1zM667 534h1v1h-1zM737 534h1v1h-1zM772 534h1v1h-1zM807 534h1v1h-1zM842 534h1v1h-1zM912 534h1v1h-1zM947 534h1v1h-1zM982 534h1v1h-1zM1017 534h1v1h-1zM1087 534h1v1h-1zM1122 534h1v1h-1zM1157 534h1v1h-1zM1192 534h1v1h-1zM1262 534h1v1h-1zM1297 534h1v1h-1zM1332 534h1v1h-1zM1367 534h1v1h-1zM1436 534h1v1h-1zM1471 534h1v1h-1zM1506 534h1v1h-1zM1541 534h1v1h-1zM1611 534h1v1h-1zM1646 534h1v1h-1zM1681 534h1v1h-1zM1716 534h1v1h-1zM38 545h1v1h-1zM73 545h1v1h-1zM108 545h1v1h-1zM143 545h1v1h-1zM213 545h1v1h-1zM248 545h1v1h-1zM283 545h1v1h-1zM318 545h1v1h-1zM388 545h1v1h-1zM423 545h1v1h-1zM458 545h1v1h-1zM493 545h1v1h-1zM562 545h1v1h-1zM597 545h1v1h-1zM632 545h1v1h-1zM667 545h1v1h-1zM737 545h1v1h-1zM772 545h1v1h-1zM807 545h1v1h-1zM842 545h1v1h-1zM912 545h1v1h-1zM947 545h1v1h-1zM982 545h1v1h-1zM1017 545h1v1h-1zM1087 545h1v1h-1zM1122 545h1v1h-1zM1157 545h1v1h-1zM1192 545h1v1h-1zM1262 545h1v1h-1zM1297 545h1v1h-1zM1332 545h1v1h-1zM1367 545h1v1h-1zM1436 545h1v1h-1zM1471 545h1v1h-1zM1506 545h1v1h-1zM1541 545h1v1h-1zM1611 545h1v1h-1zM1646 545h1v1h-1zM1681 545h1v1h-1zM1716 545h1v1h-1zM38 557h1v1h-1zM73 557h1v1h-1zM108 557h1v1h-1zM143 557h1v1h-1zM213 557h1v1h-1zM248 557h1v1h-1zM283 557h1v1h-1zM318 557h1v1h-1zM388 557h1v1h-1zM423 557h1v1h-1zM458 557h1v1h-1zM493 557h1v1h-1zM562 557h1v1h-1zM597 557h1v1h-1zM632 557h1v1h-1zM667 557h1v1h-1zM737 557h1v1h-1zM772 557h1v1h-1zM807 557h1v1h-1zM842 557h1v1h-1zM912 557h1v1h-1zM947 557h1v1h-1zM982 557h1v1h-1zM1017 557h1v1h-1zM1087 557h1v1h-1zM1122 557h1v1h-1zM1157 557h1v1h-1zM1192 557h1v1h-1zM1262 557h1v1h-1zM1297 557h1v1h-1zM1332 557h1v1h-1zM1367 557h1v1h-1zM1436 557h1v1h-1zM1471 557h1v1h-1zM1506 557h1v1h-1zM1541 557h1v1h-1zM1611 557h1v1h-1zM1646 557h1v1h-1zM1681 557h1v1h-1zM1716 557h1v1h-1zM38 568h1v1h-1zM73 568h1v1h-1zM108 568h1v1h-1zM143 568h1v1h-1zM213 568h1v1h-1zM248 568h1v1h-1zM283 568h1v1h-1zM318 568h1v1h-1zM388 568h1v1h-1zM423 568h1v1h-1zM458 568h1v1h-1zM493 568h1v1h-1zM562 568h1v1h-1zM597 568h1v1h-1zM632 568h1v1h-1zM667 568h1v1h-1zM737 568h1v1h-1zM772 568h1v1h-1zM807 568h1v1h-1zM842 568h1v1h-1zM912 568h1v1h-1zM947 568h1v1h-1zM982 568h1v1h-1zM1017 568h1v1h-1zM1087 568h1v1h-1zM1122 568h1v1h-1zM1157 568h1v1h-1zM1192 568h1v1h-1zM1262 568h1v1h-1zM1297 568h1v1h-1zM1332 568h1v1h-1zM1367 568h1v1h-1zM1436 568h1v1h-1zM1471 568h1v1h-1zM1506 568h1v1h-1zM1541 568h1v1h-1zM1611 568h1v1h-1zM1646 568h1v1h-1zM1681 568h1v1h-1zM1716 568h1v1h-1zM38 580h1v1h-1zM73 580h1v1h-1zM108 580h1v1h-1zM143 580h1v1h-1zM213 580h1v1h-1zM248 580h1v1h-1zM283 580h1v1h-1zM318 580h1v1h-1zM388 580h1v1h-1zM423 580h1v1h-1zM458 580h1v1h-1zM493 580h1v1h-1zM562 580h1v1h-1zM597 580h1v1h-1zM632 580h1v1h-1zM667 580h1v1h-1zM737 580h1v1h-1zM772 580h1v1h-1zM807 580h1v1h-1zM842 580h1v1h-1zM912 580h1v1h-1zM947 580h1v1h-1zM982 580h1v1h-1zM1017 580h1v1h-1zM1087 580h1v1h-1zM1122 580h1v1h-1zM1157 580h1v1h-1zM1192 580h1v1h-1zM1262 580h1v1h-1zM1297 580h1v1h-1zM1332 580h1v1h-1zM1367 580h1v1h-1zM1436 580h1v1h-1zM1471 580h1v1h-1zM1506 580h1v1h-1zM1541 580h1v1h-1zM1611 580h1v1h-1zM1646 580h1v1h-1zM1681 580h1v1h-1zM1716 580h1v1h-1zM38 592h1v1h-1zM73 592h1v1h-1zM108 592h1v1h-1zM143 592h1v1h-1zM213 592h1v1h-1zM248 592h1v1h-1zM283 592h1v1h-1zM318 592h1v1h-1zM388 592h1v1h-1zM423 592h1v1h-1zM458 592h1v1h-1zM493 592h1v1h-1zM562 592h1v1h-1zM597 592h1v1h-1zM632 592h1v1h-1zM667 592h1v1h-1zM737 592h1v1h-1zM772 592h1v1h-1zM807 592h1v1h-1zM842 592h1v1h-1zM912 592h1v1h-1zM947 592h1v1h-1zM982 592h1v1h-1zM1017 592h1v1h-1zM1087 592h1v1h-1zM1122 592h1v1h-1zM1157 592h1v1h-1zM1192 592h1v1h-1zM1262 592h1v1h-1zM1297 592h1v1h-1zM1332 592h1v1h-1zM1367 592h1v1h-1zM1436 592h1v1h-1zM1471 592h1v1h-1zM1506 592h1v1h-1zM1541 592h1v1h-1zM1611 592h1v1h-1zM1646 592h1v1h-1zM1681 592h1v1h-1zM1716 592h1v1h-1zM38 603h1v1h-1zM73 603h1v1h-1zM108 603h1v1h-1zM143 603h1v1h-1zM213 603h1v1h-1zM248 603h1v1h-1zM283 603h1v1h-1zM318 603h1v1h-1zM388 603h1v1h-1zM423 603h1v1h-1zM458 603h1v1h-1zM493 603h1v1h-1zM562 603h1v1h-1zM597 603h1v1h-1zM632 603h1v1h-1zM667 603h1v1h-1zM737 603h1v1h-1zM772 603h1v1h-1zM807 603h1v1h-1zM842 603h1v1h-1zM912 603h1v1h-1zM947 603h1v1h-1zM982 603h1v1h-1zM1017 603h1v1h-1zM1087 603h1v1h-1zM1122 603h1v1h-1zM1157 603h1v1h-1zM1192 603h1v1h-1zM1262 603h1v1h-1zM1297 603h1v1h-1zM1332 603h1v1h-1zM1367 603h1v1h-1zM1436 603h1v1h-1zM1471 603h1v1h-1zM1506 603h1v1h-1zM1541 603h1v1h-1zM1611 603h1v1h-1zM1646 603h1v1h-1zM1681 603h1v1h-1zM1716 603h1v1h-1zM38 615h1v1h-1zM73 615h1v1h-1zM108 615h1v1h-1zM143 615h1v1h-1zM213 615h1v1h-1zM248 615h1v1h-1zM283 615h1v1h-1zM318 615h1v1h-1zM388 615h1v1h-1zM423 615h1v1h-1zM458 615h1v1h-1zM493 615h1v1h-1zM562 615h1v1h-1zM597 615h1v1h-1zM632 615h1v1h-1zM667 615h1v1h-1zM737 615h1v1h-1zM772 615h1v1h-1zM807 615h1v1h-1zM842 615h1v1h-1zM912 615h1v1h-1zM947 615h1v1h-1zM982 615h1v1h-1zM1017 615h1v1h-1zM1087 615h1v1h-1zM1122 615h1v1h-1zM1157 615h1v1h-1zM1192 615h1v1h-1zM1262 615h1v1h-1zM1297 615h1v1h-1zM1332 615h1v1h-1zM1367 615h1v1h-1zM1436 615h1v1h-1zM1471 615h1v1h-1zM1506 615h1v1h-1zM1541 615h1v1h-1zM1611 615h1v1h-1zM1646 615h1v1h-1zM1681 615h1v1h-1zM1716 615h1v1h-1zM38 626h1v1h-1zM73 626h1v1h-1zM108 626h1v1h-1zM143 626h1v1h-1zM213 626h1v1h-1zM248 626h1v1h-1zM283 626h1v1h-1zM318 626h1v1h-1zM388 626h1v1h-1zM423 626h1v1h-1zM458 626h1v1h-1zM493 626h1v1h-1zM562 626h1v1h-1zM597 626h1v1h-1zM632 626h1v1h-1zM667 626h1v1h-1zM737 626h1v1h-1zM772 626h1v1h-1zM807 626h1v1h-1zM842 626h1v1h-1zM912 626h1v1h-1zM947 626h1v1h-1zM982 626h1v1h-1zM1017 626h1v1h-1zM1087 626h1v1h-1zM1122 626h1v1h-1zM1157 626h1v1h-1zM1192 626h1v1h-1zM1262 626h1v1h-1zM1297 626h1v1h-1zM1332 626h1v1h-1zM1367 626h1v1h-1zM1436 626h1v1h-1zM1471 626h1v1h-1zM1506 626h1v1h-1zM1541 626h1v1h-1zM1611 626h1v1h-1zM1646 626h1v1h-1zM1681 626h1v1h-1zM1716 626h1v1h-1zM38 639h1v1h-1zM73 639h1v1h-1zM108 639h1v1h-1zM143 639h1v1h-1zM213 639h1v1h-1zM248 639h1v1h-1zM283 639h1v1h-1zM318 639h1v1h-1zM388 639h1v1h-1zM423 639h1v1h-1zM458 639h1v1h-1zM493 639h1v1h-1zM562 639h1v1h-1zM597 639h1v1h-1zM632 639h1v1h-1zM667 639h1v1h-1zM737 639h1v1h-1zM772 639h1v1h-1zM807 639h1v1h-1zM842 639h1v1h-1zM912 639h1v1h-1zM947 639h1v1h-1zM982 639h1v1h-1zM1017 639h1v1h-1zM1087 639h1v1h-1zM1122 639h1v1h-1zM1157 639h1v1h-1zM1192 639h1v1h-1zM1262 639h1v1h-1zM1297 639h1v1h-1zM1332 639h1v1h-1zM1367 639h1v1h-1zM1436 639h1v1h-1zM1471 639h1v1h-1zM1506 639h1v1h-1zM1541 639h1v1h-1zM1611 639h1v1h-1zM1646 639h1v1h-1zM1681 639h1v1h-1zM1716 639h1v1h-1zM38 651h1v1h-1zM73 651h1v1h-1zM108 651h1v1h-1zM143 651h1v1h-1zM213 651h1v1h-1zM248 651h1v1h-1zM283 651h1v1h-1zM318 651h1v1h-1zM388 651h1v1h-1zM423 651h1v1h-1zM458 651h1v1h-1zM493 651h1v1h-1zM562 651h1v1h-1zM597 651h1v1h-1zM632 651h1v1h-1zM667 651h1v1h-1zM737 651h1v1h-1zM772 651h1v1h-1zM807 651h1v1h-1zM842 651h1v1h-1zM912 651h1v1h-1zM947 651h1v1h-1zM982 651h1v1h-1zM1017 651h1v1h-1zM1087 651h1v1h-1zM1122 651h1v1h-1zM1157 651h1v1h-1zM1192 651h1v1h-1zM1262 651h1v1h-1zM1297 651h1v1h-1zM1332 651h1v1h-1zM1367 651h1v1h-1zM1436 651h1v1h-1zM1471 651h1v1h-1zM1506 651h1v1h-1zM1541 651h1v1h-1zM1611 651h1v1h-1zM1646 651h1v1h-1zM1681 651h1v1h-1zM1716 651h1v1h-1zM38 662h1v1h-1zM73 662h1v1h-1zM108 662h1v1h-1zM143 662h1v1h-1zM213 662h1v1h-1zM248 662h1v1h-1zM283 662h1v1h-1zM318 662h1v1h-1zM388 662h1v1h-1zM423 662h1v1h-1zM458 662h1v1h-1zM493 662h1v1h-1zM562 662h1v1h-1zM597 662h1v1h-1zM632 662h1v1h-1zM667 662h1v1h-1zM737 662h1v1h-1zM772 662h1v1h-1zM807 662h1v1h-1zM842 662h1v1h-1zM912 662h1v1h-1zM947 662h1v1h-1zM982 662h1v1h-1zM1017 662h1v1h-1zM1087 662h1v1h-1zM1122 662h1v1h-1zM1157 662h1v1h-1zM1192 662h1v1h-1zM1262 662h1v1h-1zM1297 662h1v1h-1zM1332 662h1v1h-1zM1367 662h1v1h-1zM1436 662h1v1h-1zM1471 662h1v1h-1zM1506 662h1v1h-1zM1541 662h1v1h-1zM1611 662h1v1h-1zM1646 662h1v1h-1zM1681 662h1v1h-1zM1716 662h1v1h-1zM38 674h1v1h-1zM73 674h1v1h-1zM108 674h1v1h-1zM143 674h1v1h-1zM213 674h1v1h-1zM248 674h1v1h-1zM283 674h1v1h-1zM318 674h1v1h-1zM388 674h1v1h-1zM423 674h1v1h-1zM458 674h1v1h-1zM493 674h1v1h-1zM562 674h1v1h-1zM597 674h1v1h-1zM632 674h1v1h-1zM667 674h1v1h-1zM737 674h1v1h-1zM772 674h1v1h-1zM807 674h1v1h-1zM842 674h1v1h-1zM912 674h1v1h-1zM947 674h1v1h-1zM982 674h1v1h-1zM1017 674h1v1h-1zM1087 674h1v1h-1zM1122 674h1v1h-1zM1157 674h1v1h-1zM1192 674h1v1h-1zM1262 674h1v1h-1zM1297 674h1v1h-1zM1332 674h1v1h-1zM1367 674h1v1h-1zM1436 674h1v1h-1zM1471 674h1v1h-1zM1506 674h1v1h-1zM1541 674h1v1h-1zM1611 674h1v1h-1zM1646 674h1v1h-1zM1681 674h1v1h-1zM1716 674h1v1h-1zM38 685h1v1h-1zM73 685h1v1h-1zM108 685h1v1h-1zM143 685h1v1h-1zM213 685h1v1h-1zM248 685h1v1h-1zM283 685h1v1h-1zM318 685h1v1h-1zM388 685h1v1h-1zM423 685h1v1h-1zM458 685h1v1h-1zM493 685h1v1h-1zM562 685h1v1h-1zM597 685h1v1h-1zM632 685h1v1h-1zM667 685h1v1h-1zM737 685h1v1h-1zM772 685h1v1h-1zM807 685h1v1h-1zM842 685h1v1h-1zM912 685h1v1h-1zM947 685h1v1h-1zM982 685h1v1h-1zM1017 685h1v1h-1zM1087 685h1v1h-1zM1122 685h1v1h-1zM1157 685h1v1h-1zM1192 685h1v1h-1zM1262 685h1v1h-1zM1297 685h1v1h-1zM1332 685h1v1h-1zM1367 685h1v1h-1zM1436 685h1v1h-1zM1471 685h1v1h-1zM1506 685h1v1h-1zM1541 685h1v1h-1zM1611 685h1v1h-1zM1646 685h1v1h-1zM1681 685h1v1h-1zM1716 685h1v1h-1zM38 697h1v1h-1zM73 697h1v1h-1zM108 697h1v1h-1zM143 697h1v1h-1zM213 697h1v1h-1zM248 697h1v1h-1zM283 697h1v1h-1zM318 697h1v1h-1zM388 697h1v1h-1zM423 697h1v1h-1zM458 697h1v1h-1zM493 697h1v1h-1zM562 697h1v1h-1zM597 697h1v1h-1zM632 697h1v1h-1zM667 697h1v1h-1zM737 697h1v1h-1zM772 697h1v1h-1zM807 697h1v1h-1zM842 697h1v1h-1zM912 697h1v1h-1zM947 697h1v1h-1zM982 697h1v1h-1zM1017 697h1v1h-1zM1087 697h1v1h-1zM1122 697h1v1h-1zM1157 697h1v1h-1zM1192 697h1v1h-1zM1262 697h1v1h-1zM1297 697h1v1h-1zM1332 697h1v1h-1zM1367 697h1v1h-1zM1436 697h1v1h-1zM1471 697h1v1h-1zM1506 697h1v1h-1zM1541 697h1v1h-1zM1611 697h1v1h-1zM1646 697h1v1h-1zM1681 697h1v1h-1zM1716 697h1v1h-1zM38 709h1v1h-1zM73 709h1v1h-1zM108 709h1v1h-1zM143 709h1v1h-1zM213 709h1v1h-1zM248 709h1v1h-1zM283 709h1v1h-1zM318 709h1v1h-1zM388 709h1v1h-1zM423 709h1v1h-1zM458 709h1v1h-1zM493 709h1v1h-1zM562 709h1v1h-1zM597 709h1v1h-1zM632 709h1v1h-1zM667 709h1v1h-1zM737 709h1v1h-1zM772 709h1v1h-1zM807 709h1v1h-1zM842 709h1v1h-1zM912 709h1v1h-1zM947 709h1v1h-1zM982 709h1v1h-1zM1017 709h1v1h-1zM1087 709h1v1h-1zM1122 709h1v1h-1zM1157 709h1v1h-1zM1192 709h1v1h-1zM1262 709h1v1h-1zM1297 709h1v1h-1zM1332 709h1v1h-1zM1367 709h1v1h-1zM1436 709h1v1h-1zM1471 709h1v1h-1zM1506 709h1v1h-1zM1541 709h1v1h-1zM1611 709h1v1h-1zM1646 709h1v1h-1zM1681 709h1v1h-1zM1716 709h1v1h-1zM38 720h1v1h-1zM73 720h1v1h-1zM108 720h1v1h-1zM143 720h1v1h-1zM213 720h1v1h-1zM248 720h1v1h-1zM283 720h1v1h-1zM318 720h1v1h-1zM388 720h1v1h-1zM423 720h1v1h-1zM458 720h1v1h-1zM493 720h1v1h-1zM562 720h1v1h-1zM597 720h1v1h-1zM632 720h1v1h-1zM667 720h1v1h-1zM737 720h1v1h-1zM772 720h1v1h-1zM807 720h1v1h-1zM842 720h1v1h-1zM912 720h1v1h-1zM947 720h1v1h-1zM982 720h1v1h-1zM1017 720h1v1h-1zM1087 720h1v1h-1zM1122 720h1v1h-1zM1157 720h1v1h-1zM1192 720h1v1h-1zM1262 720h1v1h-1zM1297 720h1v1h-1zM1332 720h1v1h-1zM1367 720h1v1h-1zM1436 720h1v1h-1zM1471 720h1v1h-1zM1506 720h1v1h-1zM1541 720h1v1h-1zM1611 720h1v1h-1zM1646 720h1v1h-1zM1681 720h1v1h-1zM1716 720h1v1h-1zM38 732h1v1h-1zM73 732h1v1h-1zM108 732h1v1h-1zM143 732h1v1h-1zM213 732h1v1h-1zM248 732h1v1h-1zM283 732h1v1h-1zM318 732h1v1h-1zM388 732h1v1h-1zM423 732h1v1h-1zM458 732h1v1h-1zM493 732h1v1h-1zM562 732h1v1h-1zM597 732h1v1h-1zM632 732h1v1h-1zM667 732h1v1h-1zM737 732h1v1h-1zM772 732h1v1h-1zM807 732h1v1h-1zM842 732h1v1h-1zM912 732h1v1h-1zM947 732h1v1h-1zM982 732h1v1h-1zM1017 732h1v1h-1zM1087 732h1v1h-1zM1122 732h1v1h-1zM1157 732h1v1h-1zM1192 732h1v1h-1zM1262 732h1v1h-1zM1297 732h1v1h-1zM1332 732h1v1h-1zM1367 732h1v1h-1zM1436 732h1v1h-1zM1471 732h1v1h-1zM1506 732h1v1h-1zM1541 732h1v1h-1zM1611 732h1v1h-1zM1646 732h1v1h-1zM1681 732h1v1h-1zM1716 732h1v1h-1zM38 743h1v1h-1zM73 743h1v1h-1zM108 743h1v1h-1zM143 743h1v1h-1zM213 743h1v1h-1zM248 743h1v1h-1zM283 743h1v1h-1zM318 743h1v1h-1zM388 743h1v1h-1zM423 743h1v1h-1zM458 743h1v1h-1zM493 743h1v1h-1zM562 743h1v1h-1zM597 743h1v1h-1zM632 743h1v1h-1zM667 743h1v1h-1zM737 743h1v1h-1zM772 743h1v1h-1zM807 743h1v1h-1zM842 743h1v1h-1zM912 743h1v1h-1zM947 743h1v1h-1zM982 743h1v1h-1zM1017 743h1v1h-1zM1087 743h1v1h-1zM1122 743h1v1h-1zM1157 743h1v1h-1zM1192 743h1v1h-1zM1262 743h1v1h-1zM1297 743h1v1h-1zM1332 743h1v1h-1zM1367 743h1v1h-1zM1436 743h1v1h-1zM1471 743h1v1h-1zM1506 743h1v1h-1zM1541 743h1v1h-1zM1611 743h1v1h-1zM1646 743h1v1h-1zM1681 743h1v1h-1zM1716 743h1v1h-1zM38 756h1v1h-1zM73 756h1v1h-1zM108 756h1v1h-1zM143 756h1v1h-1zM213 756h1v1h-1zM248 756h1v1h-1zM283 756h1v1h-1zM318 756h1v1h-1zM388 756h1v1h-1zM423 756h1v1h-1zM458 756h1v1h-1zM493 756h1v1h-1zM562 756h1v1h-1zM597 756h1v1h-1zM632 756h1v1h-1zM667 756h1v1h-1zM737 756h1v1h-1zM772 756h1v1h-1zM807 756h1v1h-1zM842 756h1v1h-1zM912 756h1v1h-1zM947 756h1v1h-1zM982 756h1v1h-1zM1017 756h1v1h-1zM1087 756h1v1h-1zM1122 756h1v1h-1zM1157 756h1v1h-1zM1192 756h1v1h-1zM1262 756h1v1h-1zM1297 756h1v1h-1zM1332 756h1v1h-1zM1367 756h1v1h-1zM1436 756h1v1h-1zM1471 756h1v1h-1zM1506 756h1v1h-1zM1541 756h1v1h-1zM1611 756h1v1h-1zM1646 756h1v1h-1zM1681 756h1v1h-1zM1716 756h1v1h-1zM38 768h1v1h-1zM73 768h1v1h-1zM108 768h1v1h-1zM143 768h1v1h-1zM213 768h1v1h-1zM248 768h1v1h-1zM283 768h1v1h-1zM318 768h1v1h-1zM388 768h1v1h-1zM423 768h1v1h-1zM458 768h1v1h-1zM493 768h1v1h-1zM562 768h1v1h-1zM597 768h1v1h-1zM632 768h1v1h-1zM667 768h1v1h-1zM737 768h1v1h-1zM772 768h1v1h-1zM807 768h1v1h-1zM842 768h1v1h-1zM912 768h1v1h-1zM947 768h1v1h-1zM982 768h1v1h-1zM1017 768h1v1h-1zM1087 768h1v1h-1zM1122 768h1v1h-1zM1157 768h1v1h-1zM1192 768h1v1h-1zM1262 768h1v1h-1zM1297 768h1v1h-1zM1332 768h1v1h-1zM1367 768h1v1h-1zM1436 768h1v1h-1zM1471 768h1v1h-1zM1506 768h1v1h-1zM1541 768h1v1h-1zM1611 768h1v1h-1zM1646 768h1v1h-1zM1681 768h1v1h-1zM1716 768h1v1h-1zM38 779h1v1h-1zM73 779h1v1h-1zM108 779h1v1h-1zM143 779h1v1h-1zM213 779h1v1h-1zM248 779h1v1h-1zM283 779h1v1h-1zM318 779h1v1h-1zM388 779h1v1h-1zM423 779h1v1h-1zM458 779h1v1h-1zM493 779h1v1h-1zM562 779h1v1h-1zM597 779h1v1h-1zM632 779h1v1h-1zM667 779h1v1h-1zM737 779h1v1h-1zM772 779h1v1h-1zM807 779h1v1h-1zM842 779h1v1h-1zM912 779h1v1h-1zM947 779h1v1h-1zM982 779h1v1h-1zM1017 779h1v1h-1zM1087 779h1v1h-1zM1122 779h1v1h-1zM1157 779h1v1h-1zM1192 779h1v1h-1zM1262 779h1v1h-1zM1297 779h1v1h-1zM1332 779h1v1h-1zM1367 779h1v1h-1zM1436 779h1v1h-1zM1471 779h1v1h-1zM1506 779h1v1h-1zM1541 779h1v1h-1zM1611 779h1v1h-1zM1646 779h1v1h-1zM1681 779h1v1h-1zM1716 779h1v1h-1zM38 791h1v1h-1zM73 791h1v1h-1zM108 791h1v1h-1zM143 791h1v1h-1zM213 791h1v1h-1zM248 791h1v1h-1zM283 791h1v1h-1zM318 791h1v1h-1zM388 791h1v1h-1zM423 791h1v1h-1zM458 791h1v1h-1zM493 791h1v1h-1zM562 791h1v1h-1zM597 791h1v1h-1zM632 791h1v1h-1zM667 791h1v1h-1zM737 791h1v1h-1zM772 791h1v1h-1zM807 791h1v1h-1zM842 791h1v1h-1zM912 791h1v1h-1zM947 791h1v1h-1zM982 791h1v1h-1zM1017 791h1v1h-1zM1087 791h1v1h-1zM1122 791h1v1h-1zM1157 791h1v1h-1zM1192 791h1v1h-1zM1262 791h1v1h-1zM1297 791h1v1h-1zM1332 791h1v1h-1zM1367 791h1v1h-1zM1436 791h1v1h-1zM1471 791h1v1h-1zM1506 791h1v1h-1zM1541 791h1v1h-1zM1611 791h1v1h-1zM1646 791h1v1h-1zM1681 791h1v1h-1zM1716 791h1v1h-1zM38 802h1v1h-1zM73 802h1v1h-1zM108 802h1v1h-1zM143 802h1v1h-1zM213 802h1v1h-1zM248 802h1v1h-1zM283 802h1v1h-1zM318 802h1v1h-1zM388 802h1v1h-1zM423 802h1v1h-1zM458 802h1v1h-1zM493 802h1v1h-1zM562 802h1v1h-1zM597 802h1v1h-1zM632 802h1v1h-1zM667 802h1v1h-1zM737 802h1v1h-1zM772 802h1v1h-1zM807 802h1v1h-1zM842 802h1v1h-1zM912 802h1v1h-1zM947 802h1v1h-1zM982 802h1v1h-1zM1017 802h1v1h-1zM1087 802h1v1h-1zM1122 802h1v1h-1zM1157 802h1v1h-1zM1192 802h1v1h-1zM1262 802h1v1h-1zM1297 802h1v1h-1zM1332 802h1v1h-1zM1367 802h1v1h-1zM1436 802h1v1h-1zM1471 802h1v1h-1zM1506 802h1v1h-1zM1541 802h1v1h-1zM1611 802h1v1h-1zM1646 802h1v1h-1zM1681 802h1v1h-1zM1716 802h1v1h-1zM38 814h1v1h-1zM73 814h1v1h-1zM108 814h1v1h-1zM143 814h1v1h-1zM213 814h1v1h-1zM248 814h1v1h-1zM283 814h1v1h-1zM318 814h1v1h-1zM388 814h1v1h-1zM423 814h1v1h-1zM458 814h1v1h-1zM493 814h1v1h-1zM562 814h1v1h-1zM597 814h1v1h-1zM632 814h1v1h-1zM667 814h1v1h-1zM737 814h1v1h-1zM772 814h1v1h-1zM807 814h1v1h-1zM842 814h1v1h-1zM912 814h1v1h-1zM947 814h1v1h-1zM982 814h1v1h-1zM1017 814h1v1h-1zM1087 814h1v1h-1zM1122 814h1v1h-1zM1157 814h1v1h-1zM1192 814h1v1h-1zM1262 814h1v1h-1zM1297 814h1v1h-1zM1332 814h1v1h-1zM1367 814h1v1h-1zM1436 814h1v1h-1zM1471 814h1v1h-1zM1506 814h1v1h-1zM1541 814h1v1h-1zM1611 814h1v1h-1zM1646 814h1v1h-1zM1681 814h1v1h-1zM1716 814h1v1h-1zM38 826h1v1h-1zM73 826h1v1h-1zM108 826h1v1h-1zM143 826h1v1h-1zM213 826h1v1h-1zM248 826h1v1h-1zM283 826h1v1h-1zM318 826h1v1h-1zM388 826h1v1h-1zM423 826h1v1h-1zM458 826h1v1h-1zM493 826h1v1h-1zM562 826h1v1h-1zM597 826h1v1h-1zM632 826h1v1h-1zM667 826h1v1h-1zM737 826h1v1h-1zM772 826h1v1h-1zM807 826h1v1h-1zM842 826h1v1h-1zM912 826h1v1h-1zM947 826h1v1h-1zM982 826h1v1h-1zM1017 826h1v1h-1zM1087 826h1v1h-1zM1122 826h1v1h-1zM1157 826h1v1h-1zM1192 826h1v1h-1zM1262 826h1v1h-1zM1297 826h1v1h-1zM1332 826h1v1h-1zM1367 826h1v1h-1zM1436 826h1v1h-1zM1471 826h1v1h-1zM1506 826h1v1h-1zM1541 826h1v1h-1zM1611 826h1v1h-1zM1646 826h1v1h-1zM1681 826h1v1h-1zM1716 826h1v1h-1zM38 837h1v1h-1zM73 837h1v1h-1zM108 837h1v1h-1zM143 837h1v1h-1zM213 837h1v1h-1zM248 837h1v1h-1zM283 837h1v1h-1zM318 837h1v1h-1zM388 837h1v1h-1zM423 837h1v1h-1zM458 837h1v1h-1zM493 837h1v1h-1zM562 837h1v1h-1zM597 837h1v1h-1zM632 837h1v1h-1zM667 837h1v1h-1zM737 837h1v1h-1zM772 837h1v1h-1zM807 837h1v1h-1zM842 837h1v1h-1zM912 837h1v1h-1zM947 837h1v1h-1zM982 837h1v1h-1zM1017 837h1v1h-1zM1087 837h1v1h-1zM1122 837h1v1h-1zM1157 837h1v1h-1zM1192 837h1v1h-1zM1262 837h1v1h-1zM1297 837h1v1h-1zM1332 837h1v1h-1zM1367 837h1v1h-1zM1436 837h1v1h-1zM1471 837h1v1h-1zM1506 837h1v1h-1zM1541 837h1v1h-1zM1611 837h1v1h-1zM1646 837h1v1h-1zM1681 837h1v1h-1zM1716 837h1v1h-1zM38 849h1v1h-1zM73 849h1v1h-1zM108 849h1v1h-1zM143 849h1v1h-1zM213 849h1v1h-1zM248 849h1v1h-1zM283 849h1v1h-1zM318 849h1v1h-1zM388 849h1v1h-1zM423 849h1v1h-1zM458 849h1v1h-1zM493 849h1v1h-1zM562 849h1v1h-1zM597 849h1v1h-1zM632 849h1v1h-1zM667 849h1v1h-1zM737 849h1v1h-1zM772 849h1v1h-1zM807 849h1v1h-1zM842 849h1v1h-1zM912 849h1v1h-1zM947 849h1v1h-1zM982 849h1v1h-1zM1017 849h1v1h-1zM1087 849h1v1h-1zM1122 849h1v1h-1zM1157 849h1v1h-1zM1192 849h1v1h-1zM1262 849h1v1h-1zM1297 849h1v1h-1zM1332 849h1v1h-1zM1367 849h1v1h-1zM1436 849h1v1h-1zM1471 849h1v1h-1zM1506 849h1v1h-1zM1541 849h1v1h-1zM1611 849h1v1h-1zM1646 849h1v1h-1zM1681 849h1v1h-1zM1716 849h1v1h-1zM38 860h1v1h-1zM73 860h1v1h-1zM108 860h1v1h-1zM143 860h1v1h-1zM213 860h1v1h-1zM248 860h1v1h-1zM283 860h1v1h-1zM318 860h1v1h-1zM388 860h1v1h-1zM423 860h1v1h-1zM458 860h1v1h-1zM493 860h1v1h-1zM562 860h1v1h-1zM597 860h1v1h-1zM632 860h1v1h-1zM667 860h1v1h-1zM737 860h1v1h-1zM772 860h1v1h-1zM807 860h1v1h-1zM842 860h1v1h-1zM912 860h1v1h-1zM947 860h1v1h-1zM982 860h1v1h-1zM1017 860h1v1h-1zM1087 860h1v1h-1zM1122 860h1v1h-1zM1157 860h1v1h-1zM1192 860h1v1h-1zM1262 860h1v1h-1zM1297 860h1v1h-1zM1332 860h1v1h-1zM1367 860h1v1h-1zM1436 860h1v1h-1zM1471 860h1v1h-1zM1506 860h1v1h-1zM1541 860h1v1h-1zM1611 860h1v1h-1zM1646 860h1v1h-1zM1681 860h1v1h-1zM1716 860h1v1h-1zM38 873h1v1h-1zM73 873h1v1h-1zM108 873h1v1h-1zM143 873h1v1h-1zM213 873h1v1h-1zM248 873h1v1h-1zM283 873h1v1h-1zM318 873h1v1h-1zM388 873h1v1h-1zM423 873h1v1h-1zM458 873h1v1h-1zM493 873h1v1h-1zM562 873h1v1h-1zM597 873h1v1h-1zM632 873h1v1h-1zM667 873h1v1h-1zM737 873h1v1h-1zM772 873h1v1h-1zM807 873h1v1h-1zM842 873h1v1h-1zM912 873h1v1h-1zM947 873h1v1h-1zM982 873h1v1h-1zM1017 873h1v1h-1zM1087 873h1v1h-1zM1122 873h1v1h-1zM1157 873h1v1h-1zM1192 873h1v1h-1zM1262 873h1v1h-1zM1297 873h1v1h-1zM1332 873h1v1h-1zM1367 873h1v1h-1zM1436 873h1v1h-1zM1471 873h1v1h-1zM1506 873h1v1h-1zM1541 873h1v1h-1zM1611 873h1v1h-1zM1646 873h1v1h-1zM1681 873h1v1h-1zM1716 873h1v1h-1zM38 885h1v1h-1zM73 885h1v1h-1zM108 885h1v1h-1zM143 885h1v1h-1zM213 885h1v1h-1zM248 885h1v1h-1zM283 885h1v1h-1zM318 885h1v1h-1zM388 885h1v1h-1zM423 885h1v1h-1zM458 885h1v1h-1zM493 885h1v1h-1zM562 885h1v1h-1zM597 885h1v1h-1zM632 885h1v1h-1zM667 885h1v1h-1zM737 885h1v1h-1zM772 885h1v1h-1zM807 885h1v1h-1zM842 885h1v1h-1zM912 885h1v1h-1zM947 885h1v1h-1zM982 885h1v1h-1zM1017 885h1v1h-1zM1087 885h1v1h-1zM1122 885h1v1h-1zM1157 885h1v1h-1zM1192 885h1v1h-1zM1262 885h1v1h-1zM1297 885h1v1h-1zM1332 885h1v1h-1zM1367 885h1v1h-1zM1436 885h1v1h-1zM1471 885h1v1h-1zM1506 885h1v1h-1zM1541 885h1v1h-1zM1611 885h1v1h-1zM1646 885h1v1h-1zM1681 885h1v1h-1zM1716 885h1v1h-1zM38 897h1v1h-1zM73 897h1v1h-1zM108 897h1v1h-1zM143 897h1v1h-1zM213 897h1v1h-1zM248 897h1v1h-1zM283 897h1v1h-1zM318 897h1v1h-1zM388 897h1v1h-1zM423 897h1v1h-1zM458 897h1v1h-1zM493 897h1v1h-1zM562 897h1v1h-1zM597 897h1v1h-1zM632 897h1v1h-1zM667 897h1v1h-1zM737 897h1v1h-1zM772 897h1v1h-1zM807 897h1v1h-1zM842 897h1v1h-1zM912 897h1v1h-1zM947 897h1v1h-1zM982 897h1v1h-1zM1017 897h1v1h-1zM1087 897h1v1h-1zM1122 897h1v1h-1zM1157 897h1v1h-1zM1192 897h1v1h-1zM1262 897h1v1h-1zM1297 897h1v1h-1zM1332 897h1v1h-1zM1367 897h1v1h-1zM1436 897h1v1h-1zM1471 897h1v1h-1zM1506 897h1v1h-1zM1541 897h1v1h-1zM1611 897h1v1h-1zM1646 897h1v1h-1zM1681 897h1v1h-1zM1716 897h1v1h-1zM38 909h1v1h-1zM73 909h1v1h-1zM108 909h1v1h-1zM143 909h1v1h-1zM213 909h1v1h-1zM248 909h1v1h-1zM283 909h1v1h-1zM318 909h1v1h-1zM388 909h1v1h-1zM423 909h1v1h-1zM458 909h1v1h-1zM493 909h1v1h-1zM562 909h1v1h-1zM597 909h1v1h-1zM632 909h1v1h-1zM667 909h1v1h-1zM737 909h1v1h-1zM772 909h1v1h-1zM807 909h1v1h-1zM842 909h1v1h-1zM912 909h1v1h-1zM947 909h1v1h-1zM982 909h1v1h-1zM1017 909h1v1h-1zM1087 909h1v1h-1zM1122 909h1v1h-1zM1157 909h1v1h-1zM1192 909h1v1h-1zM1262 909h1v1h-1zM1297 909h1v1h-1zM1332 909h1v1h-1zM1367 909h1v1h-1zM1436 909h1v1h-1zM1471 909h1v1h-1zM1506 909h1v1h-1zM1541 909h1v1h-1zM1611 909h1v1h-1zM1646 909h1v1h-1zM1681 909h1v1h-1zM1716 909h1v1h-1zM38 921h1v1h-1zM73 921h1v1h-1zM108 921h1v1h-1zM143 921h1v1h-1zM213 921h1v1h-1zM248 921h1v1h-1zM283 921h1v1h-1zM318 921h1v1h-1zM388 921h1v1h-1zM423 921h1v1h-1zM458 921h1v1h-1zM493 921h1v1h-1zM562 921h1v1h-1zM597 921h1v1h-1zM632 921h1v1h-1zM667 921h1v1h-1zM737 921h1v1h-1zM772 921h1v1h-1zM807 921h1v1h-1zM842 921h1v1h-1zM912 921h1v1h-1zM947 921h1v1h-1zM982 921h1v1h-1zM1017 921h1v1h-1zM1087 921h1v1h-1zM1122 921h1v1h-1zM1157 921h1v1h-1zM1192 921h1v1h-1zM1262 921h1v1h-1zM1297 921h1v1h-1zM1332 921h1v1h-1zM1367 921h1v1h-1zM1436 921h1v1h-1zM1471 921h1v1h-1zM1506 921h1v1h-1zM1541 921h1v1h-1zM1611 921h1v1h-1zM1646 921h1v1h-1zM1681 921h1v1h-1zM1716 921h1v1h-1zM38 933h1v1h-1zM73 933h1v1h-1zM108 933h1v1h-1zM143 933h1v1h-1zM213 933h1v1h-1zM248 933h1v1h-1zM283 933h1v1h-1zM318 933h1v1h-1zM388 933h1v1h-1zM423 933h1v1h-1zM458 933h1v1h-1zM493 933h1v1h-1zM562 933h1v1h-1zM597 933h1v1h-1zM632 933h1v1h-1zM667 933h1v1h-1zM737 933h1v1h-1zM772 933h1v1h-1zM807 933h1v1h-1zM842 933h1v1h-1zM912 933h1v1h-1zM947 933h1v1h-1zM982 933h1v1h-1zM1017 933h1v1h-1zM1087 933h1v1h-1zM1122 933h1v1h-1zM1157 933h1v1h-1zM1192 933h1v1h-1zM1262 933h1v1h-1zM1297 933h1v1h-1zM1332 933h1v1h-1zM1367 933h1v1h-1zM1436 933h1v1h-1zM1471 933h1v1h-1zM1506 933h1v1h-1zM1541 933h1v1h-1zM1611 933h1v1h-1zM1646 933h1v1h-1zM1681 933h1v1h-1zM1716 933h1v1h-1zM38 944h1v1h-1zM73 944h1v1h-1zM108 944h1v1h-1zM143 944h1v1h-1zM213 944h1v1h-1zM248 944h1v1h-1zM283 944h1v1h-1zM318 944h1v1h-1zM388 944h1v1h-1zM423 944h1v1h-1zM458 944h1v1h-1zM493 944h1v1h-1zM562 944h1v1h-1zM597 944h1v1h-1zM632 944h1v1h-1zM667 944h1v1h-1zM737 944h1v1h-1zM772 944h1v1h-1zM807 944h1v1h-1zM842 944h1v1h-1zM912 944h1v1h-1zM947 944h1v1h-1zM982 944h1v1h-1zM1017 944h1v1h-1zM1087 944h1v1h-1zM1122 944h1v1h-1zM1157 944h1v1h-1zM1192 944h1v1h-1zM1262 944h1v1h-1zM1297 944h1v1h-1zM1332 944h1v1h-1zM1367 944h1v1h-1zM1436 944h1v1h-1zM1471 944h1v1h-1zM1506 944h1v1h-1zM1541 944h1v1h-1zM1611 944h1v1h-1zM1646 944h1v1h-1zM1681 944h1v1h-1zM1716 944h1v1h-1zM38 956h1v1h-1zM73 956h1v1h-1zM108 956h1v1h-1zM143 956h1v1h-1zM213 956h1v1h-1zM248 956h1v1h-1zM283 956h1v1h-1zM318 956h1v1h-1zM388 956h1v1h-1zM423 956h1v1h-1zM458 956h1v1h-1zM493 956h1v1h-1zM562 956h1v1h-1zM597 956h1v1h-1zM632 956h1v1h-1zM667 956h1v1h-1zM737 956h1v1h-1zM772 956h1v1h-1zM807 956h1v1h-1zM842 956h1v1h-1zM912 956h1v1h-1zM947 956h1v1h-1zM982 956h1v1h-1zM1017 956h1v1h-1zM1087 956h1v1h-1zM1122 956h1v1h-1zM1157 956h1v1h-1zM1192 956h1v1h-1zM1262 956h1v1h-1zM1297 956h1v1h-1zM1332 956h1v1h-1zM1367 956h1v1h-1zM1436 956h1v1h-1zM1471 956h1v1h-1zM1506 956h1v1h-1zM1541 956h1v1h-1zM1611 956h1v1h-1zM1646 956h1v1h-1zM1681 956h1v1h-1zM1716 956h1v1h-1zM38 968h1v1h-1zM73 968h1v1h-1zM108 968h1v1h-1zM143 968h1v1h-1zM213 968h1v1h-1zM248 968h1v1h-1zM283 968h1v1h-1zM318 968h1v1h-1zM388 968h1v1h-1zM423 968h1v1h-1zM458 968h1v1h-1zM493 968h1v1h-1zM562 968h1v1h-1zM597 968h1v1h-1zM632 968h1v1h-1zM667 968h1v1h-1zM737 968h1v1h-1zM772 968h1v1h-1zM807 968h1v1h-1zM842 968h1v1h-1zM912 968h1v1h-1zM947 968h1v1h-1zM982 968h1v1h-1zM1017 968h1v1h-1zM1087 968h1v1h-1zM1122 968h1v1h-1zM1157 968h1v1h-1zM1192 968h1v1h-1zM1262 968h1v1h-1zM1297 968h1v1h-1zM1332 968h1v1h-1zM1367 968h1v1h-1zM1436 968h1v1h-1zM1471 968h1v1h-1zM1506 968h1v1h-1zM1541 968h1v1h-1zM1611 968h1v1h-1zM1646 968h1v1h-1zM1681 968h1v1h-1zM1716 968h1v1h-1zM38 980h1v1h-1zM73 980h1v1h-1zM108 980h1v1h-1zM143 980h1v1h-1zM213 980h1v1h-1zM248 980h1v1h-1zM283 980h1v1h-1zM318 980h1v1h-1zM388 980h1v1h-1zM423 980h1v1h-1zM458 980h1v1h-1zM493 980h1v1h-1zM562 980h1v1h-1zM597 980h1v1h-1zM632 980h1v1h-1zM667 980h1v1h-1zM737 980h1v1h-1zM772 980h1v1h-1zM807 980h1v1h-1zM842 980h1v1h-1zM912 980h1v1h-1zM947 980h1v1h-1zM982 980h1v1h-1zM1017 980h1v1h-1zM1087 980h1v1h-1zM1122 980h1v1h-1zM1157 980h1v1h-1zM1192 980h1v1h-1zM1262 980h1v1h-1zM1297 980h1v1h-1zM1332 980h1v1h-1zM1367 980h1v1h-1zM1436 980h1v1h-1zM1471 980h1v1h-1zM1506 980h1v1h-1zM1541 980h1v1h-1zM1611 980h1v1h-1zM1646 980h1v1h-1zM1681 980h1v1h-1zM1716 980h1v1h-1z" fill="#b4b4b4"/>
<rect x="3" y="169" width="1748" height="2" fill="#737373"/>
<rect x="3" y="286" width="1748" height="2" fill="#737373"/>
<rect x="3" y="403" width="1748" height="2" fill="#737373"/>
<rect x="3" y="520" width="1748" height="2" fill="#737373"/>
<rect x="3" y="637" width="1748" height="2" fill="#737373"/>
<rect x="3" y="754" width="1748" height="2" fill="#737373"/>
<rect x="3" y="871" width="1748" height="2" fill="#737373"/>
<rect x="3" y="53" width="1748" height="1" fill="#66686a"/>
<path d="M353 55h1v1h-1zM353 58h1v1h-1zM353 60h1v1h-1zM353 62h1v1h-1zM353 65h1v1h-1zM353 67h1v1h-1zM353 69h1v1h-1zM353 72h1v1h-1zM353 74h1v1h-1zM353 76h1v1h-1zM353 79h1v1h-1zM353 81h1v1h-1zM353 83h1v1h-1zM353 86h1v1h-1zM353 88h1v1h-1zM353 90h1v1h-1zM353 93h1v1h-1zM353 95h1v1h-1zM353 97h1v1h-1zM353 100h1v1h-1zM353 102h1v1h-1zM353 104h1v1h-1zM353 107h1v1h-1zM353 109h1v1h-1zM353 111h1v1h-1zM353 114h1v1h-1zM353 116h1v1h-1zM353 118h1v1h-1zM353 121h1v1h-1zM353 123h1v1h-1zM353 126h1v1h-1zM353 128h1v1h-1zM353 130h1v1h-1zM353 133h1v1h-1zM353 135h1v1h-1zM353 137h1v1h-1zM353 140h1v1h-1zM353 142h1v1h-1zM353 144h1v1h-1zM353 147h1v1h-1zM353 149h1v1h-1zM353 151h1v1h-1zM353 154h1v1h-1zM353 156h1v1h-1zM353 158h1v1h-1zM353 161h1v1h-1zM353 163h1v1h-1zM353 165h1v1h-1zM353 168h1v1h-1zM353 170h1v1h-1zM353 172h1v1h-1zM353 175h1v1h-1zM353 177h1v1h-1zM353 179h1v1h-1zM353 182h1v1h-1zM353 184h1v1h-1zM353 186h1v1h-1zM353 189h1v1h-1zM353 191h1v1h-1zM353 193h1v1h-1zM353 196h1v1h-1zM353 198h1v1h-1zM353 200h1v1h-1zM353 203h1v1h-1zM353 205h1v1h-1zM353 207h1v1h-1zM353 210h1v1h-1zM353 212h1v1h-1zM353 214h1v1h-1zM353 217h1v1h-1zM353 219h1v1h-1zM353 221h1v1h-1zM353 224h1v1h-1zM353 226h1v1h-1zM353 228h1v1h-1zM353 231h1v1h-1zM353 233h1v1h-1zM353 235h1v1h-1zM353 238h1v1h-1zM353 240h1v1h-1zM353 242h1v1h-1zM353 245h1v1h-1zM353 247h1v1h-1zM353 249h1v1h-1zM353 252h1v1h-1zM353 254h1v1h-1zM353 257h1v1h-1zM353 259h1v1h-1zM353 261h1v1h-1zM353 264h1v1h-1zM353 266h1v1h-1zM353 268h1v1h-1zM353 271h1v1h-1zM353 273h1v1h-1zM353 275h1v1h-1zM353 278h1v1h-1zM353 280h1v1h-1zM353 282h1v1h-1zM353 285h1v1h-1zM353 287h1v1h-1zM353 289h1v1h-1zM353 292h1v1h-1zM353 294h1v1h-1zM353 296h1v1h-1zM353 299h1v1h-1zM353 301h1v1h-1zM353 303h1v1h-1zM353 306h1v1h-1zM353 308h1v1h-1zM353 310h1v1h-1zM353 313h1v1h-1zM353 315h1v1h-1zM353 317h1v1h-1zM353 320h1v1h-1zM353 322h1v1h-1zM353 324h1v1h-1zM353 327h1v1h-1zM353 329h1v1h-1zM353 331h1v1h-1zM353 334h1v1h-1zM353 336h1v1h-1zM353 338h1v1h-1zM353 341h1v1h-1zM353 343h1v1h-1zM353 345h1v1h-1zM353 348h1v1h-1zM353 350h1v1h-1zM353 352h1v1h-1zM353 355h1v1h-1zM353 357h1v1h-1zM353 359h1v1h-1zM353 362h1v1h-1zM353 364h1v1h-1zM353 366h1v1h-1zM353 369h1v1h-1zM353 371h1v1h-1zM353 373h1v1h-1zM353 376h1v1h-1zM353 378h1v1h-1zM353 380h1v1h-1zM353 383h1v1h-1zM353 385h1v1h-1zM353 387h1v1h-1zM353 390h1v1h-1zM353 392h1v1h-1zM353 395h1v1h-1zM353 397h1v1h-1zM353 399h1v1h-1zM353 402h1v1h-1zM353 404h1v1h-1zM353 406h1v1h-1zM353 409h1v1h-1zM353 411h1v1h-1zM353 413h1v1h-1zM353 416h1v1h-1zM353 418h1v1h-1zM353 420h1v1h-1zM353 423h1v1h-1zM353 425h1v1h-1zM353 427h1v1h-1zM353 430h1v1h-1zM353 432h1v1h-1zM353 434h1v1h-1zM353 437h1v1h-1zM353 439h1v1h-1zM353 441h1v1h-1zM353 444h1v1h-1zM353 446h1v1h-1zM353 448h1v1h-1zM353 451h1v1h-1zM353 453h1v1h-1zM353 455h1v1h-1zM353 458h1v1h-1zM353 460h1v1h-1zM353 462h1v1h-1zM353 465h1v1h-1zM353 467h1v1h-1zM353 469h1v1h-1zM353 472h1v1h-1zM353 474h1v1h-1zM353 476h1v1h-1zM353 479h1v1h-1zM353 481h1v1h-1zM353 483h1v1h-1zM353 486h1v1h-1zM353 488h1v1h-1zM353 490h1v1h-1zM353 493h1v1h-1zM353 495h1v1h-1zM353 497h1v1h-1zM353 500h1v1h-1zM353 502h1v1h-1zM353 504h1v1h-1zM353 507h1v1h-1zM353 509h1v1h-1zM353 511h1v1h-1zM353 514h1v1h-1zM353 516h1v1h-1zM353 518h1v1h-1zM353 521h1v1h-1zM353 523h1v1h-1zM353 525h1v1h-1zM353 528h1v1h-1zM353 530h1v1h-1zM353 533h1v1h-1zM353 535h1v1h-1zM353 537h1v1h-1zM353 540h1v1h-1zM353 542h1v1h-1zM353 544h1v1h-1zM353 547h1v1h-1zM353 549h1v1h-1zM353 551h1v1h-1zM353 554h1v1h-1zM353 556h1v1h-1zM353 558h1v1h-1zM353 561h1v1h-1zM353 563h1v1h-1zM353 565h1v1h-1zM353 568h1v1h-1zM353 570h1v1h-1zM353 572h1v1h-1zM353 575h1v1h-1zM353 577h1v1h-1zM353 579h1v1h-1zM353 582h1v1h-1zM353 584h1v1h-1zM353 586h1v1h-1zM353 589h1v1h-1zM353 591h1v1h-1zM353 593h1v1h-1zM353 596h1v1h-1zM353 598h1v1h-1zM353 600h1v1h-1zM353 603h1v1h-1zM353 605h1v1h-1zM353 607h1v1h-1zM353 610h1v1h-1zM353 612h1v1h-1zM353 614h1v1h-1zM353 617h1v1h-1zM353 619h1v1h-1zM353 621h1v1h-1zM353 624h1v1h-1zM353 626h1v1h-1zM353 628h1v1h-1zM353 631h1v1h-1zM353 633h1v1h-1zM353 635h1v1h-1zM353 638h1v1h-1zM353 640h1v1h-1zM353 642h1v1h-1zM353 645h1v1h-1zM353 647h1v1h-1zM353 649h1v1h-1zM353 652h1v1h-1zM353 654h1v1h-1zM353 656h1v1h-1zM353 659h1v1h-1zM353 661h1v1h-1zM353 663h1v1h-1zM353 666h1v1h-1zM353 668h1v1h-1zM353 671h1v1h-1zM353 673h1v1h-1zM353 675h1v1h-1zM353 678h1v1h-1zM353 680h1v1h-1zM353 682h1v1h-1zM353 685h1v1h-1zM353 687h1v1h-1zM353 689h1v1h-1zM353 692h1v1h-1zM353 694h1v1h-1zM353 696h1v1h-1zM353 699h1v1h-1zM353 701h1v1h-1zM353 703h1v1h-1zM353 706h1v1h-1zM353 708h1v1h-1zM353 710h1v1h-1zM353 713h1v1h-1zM353 715h1v1h-1zM353 717h1v1h-1zM353 720h1v1h-1zM353 722h1v1h-1zM353 724h1v1h-1zM353 727h1v1h-1zM353 729h1v1h-1zM353 731h1v1h-1zM353 734h1v1h-1zM353 736h1v1h-1zM353 738h1v1h-1zM353 741h1v1h-1zM353 743h1v1h-1zM353 745h1v1h-1zM353 748h1v1h-1zM353 750h1v1h-1zM353 752h1v1h-1zM353 755h1v1h-1zM353 757h1v1h-1zM353 759h1v1h-1zM353 762h1v1h-1zM353 764h1v1h-1zM353 766h1v1h-1zM353 769h1v1h-1zM353 771h1v1h-1zM353 773h1v1h-1zM353 776h1v1h-1zM353 778h1v1h-1zM353 780h1v1h-1zM353 783h1v1h-1zM353 785h1v1h-1zM353 787h1v1h-1zM353 790h1v1h-1zM353 792h1v1h-1zM353 794h1v1h-1zM353 797h1v1h-1zM353 799h1v1h-1zM353 801h1v1h-1zM353 804h1v1h-1zM353 806h1v1h-1zM353 809h1v1h-1zM353 811h1v1h-1zM353 813h1v1h-1zM353 816h1v1h-1zM353 818h1v1h-1zM353 820h1v1h-1zM353 823h1v1h-1zM353 825h1v1h-1zM353 827h1v1h-1zM353 830h1v1h-1zM353 832h1v1h-1zM353 834h1v1h-1zM353 837h1v1h-1zM353 839h1v1h-1zM353 841h1v1h-1zM353 844h1v1h-1zM353 846h1v1h-1zM353 848h1v1h-1zM353 851h1v1h-1zM353 853h1v1h-1zM353 855h1v1h-1zM353 858h1v1h-1zM353 860h1v1h-1zM353 862h1v1h-1zM353 865h1v1h-1zM353 867h1v1h-1zM353 869h1v1h-1zM353 872h1v1h-1zM353 874h1v1h-1zM353 876h1v1h-1zM353 879h1v1h-1zM353 881h1v1h-1zM353 883h1v1h-1zM353 886h1v1h-1zM353 888h1v1h-1zM353 890h1v1h-1zM353 893h1v1h-1zM353 895h1v1h-1zM353 897h1v1h-1zM353 900h1v1h-1zM353 902h1v1h-1zM353 904h1v1h-1zM353 907h1v1h-1zM353 909h1v1h-1zM353 911h1v1h-1zM353 914h1v1h-1zM353 916h1v1h-1zM353 918h1v1h-1zM353 921h1v1h-1zM353 923h1v1h-1zM353 925h1v1h-1zM353 928h1v1h-1zM353 930h1v1h-1zM353 932h1v1h-1zM353 935h1v1h-1zM353 937h1v1h-1zM353 939h1v1h-1zM353 942h1v1h-1zM353 944h1v1h-1zM353 947h1v1h-1zM353 949h1v1h-1zM353 951h1v1h-1zM353 954h1v1h-1zM353 956h1v1h-1zM353 958h1v1h-1zM353 961h1v1h-1zM353 963h1v1h-1zM353 965h1v1h-1zM353 968h1v1h-1zM353 970h1v1h-1zM353 972h1v1h-1zM353 975h1v1h-1z" fill="#c4c4c4"/>
<path d="M527 55h1v1h-1zM527 58h1v1h-1zM527 60h1v1h-1zM527 62h1v1h-1zM527 65h1v1h-1zM527 67h1v1h-1zM527 69h1v1h-1zM527 72h1v1h-1zM527 74h1v1h-1zM527 76h1v1h-1zM527 79h1v1h-1zM527 81h1v1h-1zM527 83h1v1h-1zM527 86h1v1h-1zM527 88h1v1h-1zM527 90h1v1h-1zM527 93h1v1h-1zM527 95h1v1h-1zM527 97h1v1h-1zM527 100h1v1h-1zM527 102h1v1h-1zM527 104h1v1h-1zM527 107h1v1h-1zM527 109h1v1h-1zM527 111h1v1h-1zM527 114h1v1h-1zM527 116h1v1h-1zM527 118h1v1h-1zM527 121h1v1h-1zM527 123h1v1h-1zM527 126h1v1h-1zM527 128h1v1h-1zM527 130h1v1h-1zM527 133h1v1h-1zM527 135h1v1h-1zM527 137h1v1h-1zM527 140h1v1h-1zM527 142h1v1h-1zM527 144h1v1h-1zM527 147h1v1h-1zM527 149h1v1h-1zM527 151h1v1h-1zM527 154h1v1h-1zM527 156h1v1h-1zM527 158h1v1h-1zM527 161h1v1h-1zM527 163h1v1h-1zM527 165h1v1h-1zM527 168h1v1h-1zM527 170h1v1h-1zM527 172h1v1h-1zM527 175h1v1h-1zM527 177h1v1h-1zM527 179h1v1h-1zM527 182h1v1h-1zM527 184h1v1h-1zM527 186h1v1h-1zM527 189h1v1h-1zM527 191h1v1h-1zM527 193h1v1h-1zM527 196h1v1h-1zM527 198h1v1h-1zM527 200h1v1h-1zM527 203h1v1h-1zM527 205h1v1h-1zM527 207h1v1h-1zM527 210h1v1h-1zM527 212h1v1h-1zM527 214h1v1h-1zM527 217h1v1h-1zM527 219h1v1h-1zM527 221h1v1h-1zM527 224h1v1h-1zM527 226h1v1h-1zM527 228h1v1h-1zM527 231h1v1h-1zM527 233h1v1h-1zM527 235h1v1h-1zM527 238h1v1h-1zM527 240h1v1h-1zM527 242h1v1h-1zM527 245h1v1h-1zM527 247h1v1h-1zM527 249h1v1h-1zM527 252h1v1h-1zM527 254h1v1h-1zM527 257h1v1h-1zM527 259h1v1h-1zM527 261h1v1h-1zM527 264h1v1h-1zM527 266h1v1h-1zM527 268h1v1h-1zM527 271h1v1h-1zM527 273h1v1h-1zM527 275h1v1h-1zM527 278h1v1h-1zM527 280h1v1h-1zM527 282h1v1h-1zM527 285h1v1h-1zM527 287h1v1h-1zM527 289h1v1h-1zM527 292h1v1h-1zM527 294h1v1h-1zM527 296h1v1h-1zM527 299h1v1h-1zM527 301h1v1h-1zM527 303h1v1h-1zM527 306h1v1h-1zM527 308h1v1h-1zM527 310h1v1h-1zM527 313h1v1h-1zM527 315h1v1h-1zM527 317h1v1h-1zM527 320h1v1h-1zM527 322h1v1h-1zM527 324h1v1h-1zM527 327h1v1h-1zM527 329h1v1h-1zM527 331h1v1h-1zM527 334h1v1h-1zM527 336h1v1h-1zM527 338h1v1h-1zM527 341h1v1h-1zM527 343h1v1h-1zM527 345h1v1h-1zM527 348h1v1h-1zM527 350h1v1h-1zM527 352h1v1h-1zM527 355h1v1h-1zM527 357h1v1h-1zM527 359h1v1h-1zM527 362h1v1h-1zM527 364h1v1h-1zM527 366h1v1h-1zM527 369h1v1h-1zM527 371h1v1h-1zM527 373h1v1h-1zM527 376h1v1h-1zM527 378h1v1h-1zM527 380h1v1h-1zM527 383h1v1h-1zM527 385h1v1h-1zM527 387h1v1h-1zM527 390h1v1h-1zM527 392h1v1h-1zM527 395h1v1h-1zM527 397h1v1h-1zM527 399h1v1h-1zM527 402h1v1h-1zM527 404h1v1h-1zM527 406h1v1h-1zM527 409h1v1h-1zM527 411h1v1h-1zM527 413h1v1h-1zM527 416h1v1h-1zM527 418h1v1h-1zM527 420h1v1h-1zM527 423h1v1h-1zM527 425h1v1h-1zM527 427h1v1h-1zM527 430h1v1h-1zM527 432h1v1h-1zM527 434h1v1h-1zM527 437h1v1h-1zM527 439h1v1h-1zM527 441h1v1h-1zM527 444h1v1h-1zM527 446h1v1h-1zM527 448h1v1h-1zM527 451h1v1h-1zM527 453h1v1h-1zM527 455h1v1h-1zM527 458h1v1h-1zM527 460h1v1h-1zM527 462h1v1h-1zM527 465h1v1h-1zM527 467h1v1h-1zM527 469h1v1h-1zM527 472h1v1h-1zM527 474h1v1h-1zM527 476h1v1h-1zM527 479h1v1h-1zM527 481h1v1h-1zM527 483h1v1h-1zM527 486h1v1h-1zM527 488h1v1h-1zM527 490h1v1h-1zM527 493h1v1h-1zM527 495h1v1h-1zM527 497h1v1h-1zM527 500h1v1h-1zM527 502h1v1h-1zM527 504h1v1h-1zM527 507h1v1h-1zM527 509h1v1h-1zM527 511h1v1h-1zM527 514h1v1h-1zM527 516h1v1h-1zM527 518h1v1h-1zM527 521h1v1h-1zM527 523h1v1h-1zM527 525h1v1h-1zM527 528h1v1h-1zM527 530h1v1h-1zM527 533h1v1h-1zM527 535h1v1h-1zM527 537h1v1h-1zM527 540h1v1h-1zM527 542h1v1h-1zM527 544h1v1h-1zM527 547h1v1h-1zM527 549h1v1h-1zM527 551h1v1h-1zM527 554h1v1h-1zM527 556h1v1h-1zM527 558h1v1h-1zM527 561h1v1h-1zM527 563h1v1h-1zM527 565h1v1h-1zM527 568h1v1h-1zM527 570h1v1h-1zM527 572h1v1h-1zM527 575h1v1h-1zM527 577h1v1h-1zM527 579h1v1h-1zM527 582h1v1h-1zM527 584h1v1h-1zM527 586h1v1h-1zM527 589h1v1h-1zM527 591h1v1h-1zM527 593h1v1h-1zM527 596h1v1h-1zM527 598h1v1h-1zM527 600h1v1h-1zM527 603h1v1h-1zM527 605h1v1h-1zM527 607h1v1h-1zM527 610h1v1h-1zM527 612h1v1h-1zM527 614h1v1h-1zM527 617h1v1h-1zM527 619h1v1h-1zM527 621h1v1h-1zM527 624h1v1h-1zM527 626h1v1h-1zM527 628h1v1h-1zM527 631h1v1h-1zM527 633h1v1h-1zM527 635h1v1h-1zM527 638h1v1h-1zM527 640h1v1h-1zM527 642h1v1h-1zM527 645h1v1h-1zM527 647h1v1h-1zM527 649h1v1h-1zM527 652h1v1h-1zM527 654h1v1h-1zM527 656h1v1h-1zM527 659h1v1h-1zM527 661h1v1h-1zM527 663h1v1h-1zM527 666h1v1h-1zM527 668h1v1h-1zM527 671h1v1h-1zM527 673h1v1h-1zM527 675h1v1h-1zM527 678h1v1h-1zM527 680h1v1h-1zM527 682h1v1h-1zM527 685h1v1h-1zM527 687h1v1h-1zM527 689h1v1h-1zM527 692h1v1h-1zM527 694h1v1h-1zM527 696h1v1h-1zM527 699h1v1h-1zM527 701h1v1h-1zM527 703h1v1h-1zM527 706h1v1h-1zM527 708h1v1h-1zM527 710h1v1h-1zM527 713h1v1h-1zM527 715h1v1h-1zM527 717h1v1h-1zM527 720h1v1h-1zM527 722h1v1h-1zM527 724h1v1h-1zM527 727h1v1h-1zM527 729h1v1h-1zM527 731h1v1h-1zM527 734h1v1h-1zM527 736h1v1h-1zM527 738h1v1h-1zM527 741h1v1h-1zM527 743h1v1h-1zM527 745h1v1h-1zM527 748h1v1h-1zM527 750h1v1h-1zM527 752h1v1h-1zM527 755h1v1h-1zM527 757h1v1h-1zM527 759h1v1h-1zM527 762h1v1h-1zM527 764h1v1h-1zM527 766h1v1h-1zM527 769h1v1h-1zM527 771h1v1h-1zM527 773h1v1h-1zM527 776h1v1h-1zM527 778h1v1h-1zM527 780h1v1h-1zM527 783h1v1h-1zM527 785h1v1h-1zM527 787h1v1h-1zM527 790h1v1h-1zM527 792h1v1h-1zM527 794h1v1h-1zM527 797h1v1h-1zM527 799h1v1h-1zM527 801h1v1h-1zM527 804h1v1h-1zM527 806h1v1h-1zM527 809h1v1h-1zM527 811h1v1h-1zM527 813h1v1h-1zM527 816h1v1h-1zM527 818h1v1h-1zM527 820h1v1h-1zM527 823h1v1h-1zM527 825h1v1h-1zM527 827h1v1h-1zM527 830h1v1h-1zM527 832h1v1h-1zM527 834h1v1h-1zM527 837h1v1h-1zM527 839h1v1h-1zM527 841h1v1h-1zM527 844h1v1h-1zM527 846h1v1h-1zM527 848h1v1h-1zM527 851h1v1h-1zM527 853h1v1h-1zM527 855h1v1h-1zM527 858h1v1h-1zM527 860h1v1h-1zM527 862h1v1h-1zM527 865h1v1h-1zM527 867h1v1h-1zM527 869h1v1h-1zM527 872h1v1h-1zM527 874h1v1h-1zM527 876h1v1h-1zM527 879h1v1h-1zM527 881h1v1h-1zM527 883h1v1h-1zM527 886h1v1h-1zM527 888h1v1h-1zM527 890h1v1h-1zM527 893h1v1h-1zM527 895h1v1h-1zM527 897h1v1h-1zM527 900h1v1h-1zM527 902h1v1h-1zM527 904h1v1h-1zM527 907h1v1h-1zM527 909h1v1h-1zM527 911h1v1h-1zM527 914h1v1h-1zM527 916h1v1h-1zM527 918h1v1h-1zM527 921h1v1h-1zM527 923h1v1h-1zM527 925h1v1h-1zM527 928h1v1h-1zM527 930h1v1h-1zM527 932h1v1h-1zM527 935h1v1h-1zM527 937h1v1h-1zM527 939h1v1h-1zM527 942h1v1h-1zM527 944h1v1h-1zM527 947h1v1h-1zM527 949h1v1h-1zM527 951h1v1h-1zM527 954h1v1h-1zM527 956h1v1h-1zM527 958h1v1h-1zM527 961h1v1h-1zM527 963h1v1h-1zM527 965h1v1h-1zM527 968h1v1h-1zM527 970h1v1h-1zM527 972h1v1h-1zM527 975h1v1h-1z" fill="#c4c4c4"/>
<path d="M702 55h1v1h-1zM702 58h1v1h-1zM702 60h1v1h-1zM702 62h1v1h-1zM702 65h1v1h-1zM702 67h1v1h-1zM702 69h1v1h-1zM702 72h1v1h-1zM702 74h1v1h-1zM702 76h1v1h-1zM702 79h1v1h-1zM702 81h1v1h-1zM702 83h1v1h-1zM702 86h1v1h-1zM702 88h1v1h-1zM702 90h1v1h-1zM702 93h1v1h-1zM702 95h1v1h-1zM702 97h1v1h-1zM702 100h1v1h-1zM702 102h1v1h-1zM702 104h1v1h-1zM702 107h1v1h-1zM702 109h1v1h-1zM702 111h1v1h-1zM702 114h1v1h-1zM702 116h1v1h-1zM702 118h1v1h-1zM702 121h1v1h-1zM702 123h1v1h-1zM702 126h1v1h-1zM702 128h1v1h-1zM702 130h1v1h-1zM702 133h1v1h-1zM702 135h1v1h-1zM702 137h1v1h-1zM702 140h1v1h-1zM702 142h1v1h-1zM702 144h1v1h-1zM702 147h1v1h-1zM702 149h1v1h-1zM702 151h1v1h-1zM702 154h1v1h-1zM702 156h1v1h-1zM702 158h1v1h-1zM702 161h1v1h-1zM702 163h1v1h-1zM702 165h1v1h-1zM702 168h1v1h-1zM702 170h1v1h-1zM702 172h1v1h-1zM702 175h1v1h-1zM702 177h1v1h-1zM702 179h1v1h-1zM702 182h1v1h-1zM702 184h1v1h-1zM702 186h1v1h-1zM702 189h1v1h-1zM702 191h1v1h-1zM702 193h1v1h-1zM702 196h1v1h-1zM702 198h1v1h-1zM702 200h1v1h-1zM702 203h1v1h-1zM702 205h1v1h-1zM702 207h1v1h-1zM702 210h1v1h-1zM702 212h1v1h-1zM702 214h1v1h-1zM702 217h1v1h-1zM702 219h1v1h-1zM702 221h1v1h-1zM702 224h1v1h-1zM702 226h1v1h-1zM702 228h1v1h-1zM702 231h1v1h-1zM702 233h1v1h-1zM702 235h1v1h-1zM702 238h1v1h-1zM702 240h1v1h-1zM702 242h1v1h-1zM702 245h1v1h-1zM702 247h1v1h-1zM702 249h1v1h-1zM702 252h1v1h-1zM702 254h1v1h-1zM702 257h1v1h-1zM702 259h1v1h-1zM702 261h1v1h-1zM702 264h1v1h-1zM702 266h1v1h-1zM702 268h1v1h-1zM702 271h1v1h-1zM702 273h1v1h-1zM702 275h1v1h-1zM702 278h1v1h-1zM702 280h1v1h-1zM702 282h1v1h-1zM702 285h1v1h-1zM702 287h1v1h-1zM702 289h1v1h-1zM702 292h1v1h-1zM702 294h1v1h-1zM702 296h1v1h-1zM702 299h1v1h-1zM702 301h1v1h-1zM702 303h1v1h-1zM702 306h1v1h-1zM702 308h1v1h-1zM702 310h1v1h-1zM702 313h1v1h-1zM702 315h1v1h-1zM702 317h1v1h-1zM702 320h1v1h-1zM702 322h1v1h-1zM702 324h1v1h-1zM702 327h1v1h-1zM702 329h1v1h-1zM702 331h1v1h-1zM702 334h1v1h-1zM702 336h1v1h-1zM702 338h1v1h-1zM702 341h1v1h-1zM702 343h1v1h-1zM702 345h1v1h-1zM702 348h1v1h-1zM702 350h1v1h-1zM702 352h1v1h-1zM702 355h1v1h-1zM702 357h1v1h-1zM702 359h1v1h-1zM702 362h1v1h-1zM702 364h1v1h-1zM702 366h1v1h-1zM702 369h1v1h-1zM702 371h1v1h-1zM702 373h1v1h-1zM702 376h1v1h-1zM702 378h1v1h-1zM702 380h1v1h-1zM702 383h1v1h-1zM702 385h1v1h-1zM702 387h1v1h-1zM702 390h1v1h-1zM702 392h1v1h-1zM702 395h1v1h-1zM702 397h1v1h-1zM702 399h1v1h-1zM702 402h1v1h-1zM702 404h1v1h-1zM702 406h1v1h-1zM702 409h1v1h-1zM702 411h1v1h-1zM702 413h1v1h-1zM702 416h1v1h-1zM702 418h1v1h-1zM702 420h1v1h-1zM702 423h1v1h-1zM702 425h1v1h-1zM702 427h1v1h-1zM702 430h1v1h-1zM702 432h1v1h-1zM702 434h1v1h-1zM702 437h1v1h-1zM702 439h1v1h-1zM702 441h1v1h-1zM702 444h1v1h-1zM702 446h1v1h-1zM702 448h1v1h-1zM702 451h1v1h-1zM702 453h1v1h-1zM702 455h1v1h-1zM702 458h1v1h-1zM702 460h1v1h-1zM702 462h1v1h-1zM702 465h1v1h-1zM702 467h1v1h-1zM702 469h1v1h-1zM702 472h1v1h-1zM702 474h1v1h-1zM702 476h1v1h-1zM702 479h1v1h-1zM702 481h1v1h-1zM702 483h1v1h-1zM702 486h1v1h-1zM702 488h1v1h-1zM702 490h1v1h-1zM702 493h1v1h-1zM702 495h1v1h-1zM702 497h1v1h-1zM702 500h1v1h-1zM702 502h1v1h-1zM702 504h1v1h-1zM702 507h1v1h-1zM702 509h1v1h-1zM702 511h1v1h-1zM702 514h1v1h-1zM702 516h1v1h-1zM702 518h1v1h-1zM702 521h1v1h-1zM702 523h1v1h-1zM702 525h1v1h-1zM702 528h1v1h-1zM702 530h1v1h-1zM702 533h1v1h-1zM702 535h1v1h-1zM702 537h1v1h-1zM702 540h1v1h-1zM702 542h1v1h-1zM702 544h1v1h-1zM702 547h1v1h-1zM702 549h1v1h-1zM702 551h1v1h-1zM702 554h1v1h-1zM702 556h1v1h-1zM702 558h1v1h-1zM702 561h1v1h-1zM702 563h1v1h-1zM702 565h1v1h-1zM702 568h1v1h-1zM702 570h1v1h-1zM702 572h1v1h-1zM702 575h1v1h-1zM702 577h1v1h-1zM702 579h1v1h-1zM702 582h1v1h-1zM702 584h1v1h-1zM702 586h1v1h-1zM702 589h1v1h-1zM702 591h1v1h-1zM702 593h1v1h-1zM702 596h1v1h-1zM702 598h1v1h-1zM702 600h1v1h-1zM702 603h1v1h-1zM702 605h1v1h-1zM702 607h1v1h-1zM702 610h1v1h-1zM702 612h1v1h-1zM702 614h1v1h-1zM702 617h1v1h-1zM702 619h1v1h-1zM702 621h1v1h-1zM702 624h1v1h-1zM702 626h1v1h-1zM702 628h1v1h-1zM702 631h1v1h-1zM702 633h1v1h-1zM702 635h1v1h-1zM702 638h1v1h-1zM702 640h1v1h-1zM702 642h1v1h-1zM702 645h1v1h-1zM702 647h1v1h-1zM702 649h1v1h-1zM702 652h1v1h-1zM702 654h1v1h-1zM702 656h1v1h-1zM702 659h1v1h-1zM702 661h1v1h-1zM702 663h1v1h-1zM702 666h1v1h-1zM702 668h1v1h-1zM702 671h1v1h-1zM702 673h1v1h-1zM702 675h1v1h-1zM702 678h1v1h-1zM702 680h1v1h-1zM702 682h1v1h-1zM702 685h1v1h-1zM702 687h1v1h-1zM702 689h1v1h-1zM702 692h1v1h-1zM702 694h1v1h-1zM702 696h1v1h-1zM702 699h1v1h-1zM702 701h1v1h-1zM702 703h1v1h-1zM702 706h1v1h-1zM702 708h1v1h-1zM702 710h1v1h-1zM702 713h1v1h-1zM702 715h1v1h-1zM702 717h1v1h-1zM702 720h1v1h-1zM702 722h1v1h-1zM702 724h1v1h-1zM702 727h1v1h-1zM702 729h1v1h-1zM702 731h1v1h-1zM702 734h1v1h-1zM702 736h1v1h-1zM702 738h1v1h-1zM702 741h1v1h-1zM702 743h1v1h-1zM702 745h1v1h-1zM702 748h1v1h-1zM702 750h1v1h-1zM702 752h1v1h-1zM702 755h1v1h-1zM702 757h1v1h-1zM702 759h1v1h-1zM702 762h1v1h-1zM702 764h1v1h-1zM702 766h1v1h-1zM702 769h1v1h-1zM702 771h1v1h-1zM702 773h1v1h-1zM702 776h1v1h-1zM702 778h1v1h-1zM702 780h1v1h-1zM702 783h1v1h-1zM702 785h1v1h-1zM702 787h1v1h-1zM702 790h1v1h-1zM702 792h1v1h-1zM702 794h1v1h-1zM702 797h1v1h-1zM702 799h1v1h-1zM702 801h1v1h-1zM702 804h1v1h-1zM702 806h1v1h-1zM702 809h1v1h-1zM702 811h1v1h-1zM702 813h1v1h-1zM702 816h1v1h-1zM702 818h1v1h-1zM702 820h1v1h-1zM702 823h1v1h-1zM702 825h1v1h-1zM702 827h1v1h-1zM702 830h1v1h-1zM702 832h1v1h-1zM702 834h1v1h-1zM702 837h1v1h-1zM702 839h1v1h-1zM702 841h1v1h-1zM702 844h1v1h-1zM702 846h1v1h-1zM702 848h1v1h-1zM702 851h1v1h-1zM702 853h1v1h-1zM702 855h1v1h-1zM702 858h1v1h-1zM702 860h1v1h-1zM702 862h1v1h-1zM702 865h1v1h-1zM702 867h1v1h-1zM702 869h1v1h-1zM702 872h1v1h-1zM702 874h1v1h-1zM702 876h1v1h-1zM702 879h1v1h-1zM702 881h1v1h-1zM702 883h1v1h-1zM702 886h1v1h-1zM702 888h1v1h-1zM702 890h1v1h-1zM702 893h1v1h-1zM702 895h1v1h-1zM702 897h1v1h-1zM702 900h1v1h-1zM702 902h1v1h-1zM702 904h1v1h-1zM702 907h1v1h-1zM702 909h1v1h-1zM702 911h1v1h-1zM702 914h1v1h-1zM702 916h1v1h-1zM702 918h1v1h-1zM702 921h1v1h-1zM702 923h1v1h-1zM702 925h1v1h-1zM702 928h1v1h-1zM702 930h1v1h-1zM702 932h1v1h-1zM702 935h1v1h-1zM702 937h1v1h-1zM702 939h1v1h-1zM702 942h1v1h-1zM702 944h1v1h-1zM702 947h1v1h-1zM702 949h1v1h-1zM702 951h1v1h-1zM702 954h1v1h-1zM702 956h1v1h-1zM702 958h1v1h-1zM702 961h1v1h-1zM702 963h1v1h-1zM702 965h1v1h-1zM702 968h1v1h-1zM702 970h1v1h-1zM702 972h1v1h-1zM702 975h1v1h-1z" fill="#c4c4c4"/>
<path d="M877 55h1v1h-1zM877 58h1v1h-1zM877 60h1v1h-1zM877 62h1v1h-1zM877 65h1v1h-1zM877 67h1v1h-1zM877 69h1v1h-1zM877 72h1v1h-1zM877 74h1v1h-1zM877 76h1v1h-1zM877 79h1v1h-1zM877 81h1v1h-1zM877 83h1v1h-1zM877 86h1v1h-1zM877 88h1v1h-1zM877 90h1v1h-1zM877 93h1v1h-1zM877 95h1v1h-1zM877 97h1v1h-1zM877 100h1v1h-1zM877 102h1v1h-1zM877 104h1v1h-1zM877 107h1v1h-1zM877 109h1v1h-1zM877 111h1v1h-1zM877 114h1v1h-1zM877 116h1v1h-1zM877 118h1v1h-1zM877 121h1v1h-1zM877 123h1v1h-1zM877 126h1v1h-1zM877 128h1v1h-1zM877 130h1v1h-1zM877 133h1v1h-1zM877 135h1v1h-1zM877 137h1v1h-1zM877 140h1v1h-1zM877 142h1v1h-1zM877 144h1v1h-1zM877 147h1v1h-1zM877 149h1v1h-1zM877 151h1v1h-1zM877 154h1v1h-1zM877 156h1v1h-1zM877 158h1v1h-1zM877 161h1v1h-1zM877 163h1v1h-1zM877 165h1v1h-1zM877 168h1v1h-1zM877 170h1v1h-1zM877 172h1v1h-1zM877 175h1v1h-1zM877 177h1v1h-1zM877 179h1v1h-1zM877 182h1v1h-1zM877 184h1v1h-1zM877 186h1v1h-1zM877 189h1v1h-1zM877 191h1v1h-1zM877 193h1v1h-1zM877 196h1v1h-1zM877 198h1v1h-1zM877 200h1v1h-1zM877 203h1v1h-1zM877 205h1v1h-1zM877 207h1v1h-1zM877 210h1v1h-1zM877 212h1v1h-1zM877 214h1v1h-1zM877 217h1v1h-1zM877 219h1v1h-1zM877 221h1v1h-1zM877 224h1v1h-1zM877 226h1v1h-1zM877 228h1v1h-1zM877 231h1v1h-1zM877 233h1v1h-1zM877 235h1v1h-1zM877 238h1v1h-1zM877 240h1v1h-1zM877 242h1v1h-1zM877 245h1v1h-1zM877 247h1v1h-1zM877 249h1v1h-1zM877 252h1v1h-1zM877 254h1v1h-1zM877 257h1v1h-1zM877 259h1v1h-1zM877 261h1v1h-1zM877 264h1v1h-1zM877 266h1v1h-1zM877 268h1v1h-1zM877 271h1v1h-1zM877 273h1v1h-1zM877 275h1v1h-1zM877 278h1v1h-1zM877 280h1v1h-1zM877 282h1v1h-1zM877 285h1v1h-1zM877 287h1v1h-1zM877 289h1v1h-1zM877 292h1v1h-1zM877 294h1v1h-1zM877 296h1v1h-1zM877 299h1v1h-1zM877 301h1v1h-1zM877 303h1v1h-1zM877 306h1v1h-1zM877 308h1v1h-1zM877 310h1v1h-1zM877 313h1v1h-1zM877 315h1v1h-1zM877 317h1v1h-1zM877 320h1v1h-1zM877 322h1v1h-1zM877 324h1v1h-1zM877 327h1v1h-1zM877 329h1v1h-1zM877 331h1v1h-1zM877 334h1v1h-1zM877 336h1v1h-1zM877 338h1v1h-1zM877 341h1v1h-1zM877 343h1v1h-1zM877 345h1v1h-1zM877 348h1v1h-1zM877 350h1v1h-1zM877 352h1v1h-1zM877 355h1v1h-1zM877 357h1v1h-1zM877 359h1v1h-1zM877 362h1v1h-1zM877 364h1v1h-1zM877 366h1v1h-1zM877 369h1v1h-1zM877 371h1v1h-1zM877 373h1v1h-1zM877 376h1v1h-1zM877 378h1v1h-1zM877 380h1v1h-1zM877 383h1v1h-1zM877 385h1v1h-1zM877 387h1v1h-1zM877 390h1v1h-1zM877 392h1v1h-1zM877 395h1v1h-1zM877 397h1v1h-1zM877 399h1v1h-1zM877 402h1v1h-1zM877 404h1v1h-1zM877 406h1v1h-1zM877 409h1v1h-1zM877 411h1v1h-1zM877 413h1v1h-1zM877 416h1v1h-1zM877 418h1v1h-1zM877 420h1v1h-1zM877 423h1v1h-1zM877 425h1v1h-1zM877 427h1v1h-1zM877 430h1v1h-1zM877 432h1v1h-1zM877 434h1v1h-1zM877 437h1v1h-1zM877 439h1v1h-1zM877 441h1v1h-1zM877 444h1v1h-1zM877 446h1v1h-1zM877 448h1v1h-1zM877 451h1v1h-1zM877 453h1v1h-1zM877 455h1v1h-1zM877 458h1v1h-1zM877 460h1v1h-1zM877 462h1v1h-1zM877 465h1v1h-1zM877 467h1v1h-1zM877 469h1v1h-1zM877 472h1v1h-1zM877 474h1v1h-1zM877 476h1v1h-1zM877 479h1v1h-1zM877 481h1v1h-1zM877 483h1v1h-1zM877 486h1v1h-1zM877 488h1v1h-1zM877 490h1v1h-1zM877 493h1v1h-1zM877 495h1v1h-1zM877 497h1v1h-1zM877 500h1v1h-1zM877 502h1v1h-1zM877 504h1v1h-1zM877 507h1v1h-1zM877 509h1v1h-1zM877 511h1v1h-1zM877 514h1v1h-1zM877 516h1v1h-1zM877 518h1v1h-1zM877 521h1v1h-1zM877 523h1v1h-1zM877 525h1v1h-1zM877 528h1v1h-1zM877 530h1v1h-1zM877 533h1v1h-1zM877 535h1v1h-1zM877 537h1v1h-1zM877 540h1v1h-1zM877 542h1v1h-1zM877 544h1v1h-1zM877 547h1v1h-1zM877 549h1v1h-1zM877 551h1v1h-1zM877 554h1v1h-1zM877 556h1v1h-1zM877 558h1v1h-1zM877 561h1v1h-1zM877 563h1v1h-1zM877 565h1v1h-1zM877 568h1v1h-1zM877 570h1v1h-1zM877 572h1v1h-1zM877 575h1v1h-1zM877 577h1v1h-1zM877 579h1v1h-1zM877 582h1v1h-1zM877 584h1v1h-1zM877 586h1v1h-1zM877 589h1v1h-1zM877 591h1v1h-1zM877 593h1v1h-1zM877 596h1v1h-1zM877 598h1v1h-1zM877 600h1v1h-1zM877 603h1v1h-1zM877 605h1v1h-1zM877 607h1v1h-1zM877 610h1v1h-1zM877 612h1v1h-1zM877 614h1v1h-1zM877 617h1v1h-1zM877 619h1v1h-1zM877 621h1v1h-1zM877 624h1v1h-1zM877 626h1v1h-1zM877 628h1v1h-1zM877 631h1v1h-1zM877 633h1v1h-1zM877 635h1v1h-1zM877 638h1v1h-1zM877 640h1v1h-1zM877 642h1v1h-1zM877 645h1v1h-1zM877 647h1v1h-1zM877 649h1v1h-1zM877 652h1v1h-1zM877 654h1v1h-1zM877 656h1v1h-1zM877 659h1v1h-1zM877 661h1v1h-1zM877 663h1v1h-1zM877 666h1v1h-1zM877 668h1v1h-1zM877 671h1v1h-1zM877 673h1v1h-1zM877 675h1v1h-1zM877 678h1v1h-1zM877 680h1v1h-1zM877 682h1v1h-1zM877 685h1v1h-1zM877 687h1v1h-1zM877 689h1v1h-1zM877 692h1v1h-1zM877 694h1v1h-1zM877 696h1v1h-1zM877 699h1v1h-1zM877 701h1v1h-1zM877 703h1v1h-1zM877 706h1v1h-1zM877 708h1v1h-1zM877 710h1v1h-1zM877 713h1v1h-1zM877 715h1v1h-1zM877 717h1v1h-1zM877 720h1v1h-1zM877 722h1v1h-1zM877 724h1v1h-1zM877 727h1v1h-1zM877 729h1v1h-1zM877 731h1v1h-1zM877 734h1v1h-1zM877 736h1v1h-1zM877 738h1v1h-1zM877 741h1v1h-1zM877 743h1v1h-1zM877 745h1v1h-1zM877 748h1v1h-1zM877 750h1v1h-1zM877 752h1v1h-1zM877 755h1v1h-1zM877 757h1v1h-1zM877 759h1v1h-1zM877 762h1v1h-1zM877 764h1v1h-1zM877 766h1v1h-1zM877 769h1v1h-1zM877 771h1v1h-1zM877 773h1v1h-1zM877 776h1v1h-1zM877 778h1v1h-1zM877 780h1v1h-1zM877 783h1v1h-1zM877 785h1v1h-1zM877 787h1v1h-1zM877 790h1v1h-1zM877 792h1v1h-1zM877 794h1v1h-1zM877 797h1v1h-1zM877 799h1v1h-1zM877 801h1v1h-1zM877 804h1v1h-1zM877 806h1v1h-1zM877 809h1v1h-1zM877 811h1v1h-1zM877 813h1v1h-1zM877 816h1v1h-1zM877 818h1v1h-1zM877 820h1v1h-1zM877 823h1v1h-1zM877 825h1v1h-1zM877 827h1v1h-1zM877 830h1v1h-1zM877 832h1v1h-1zM877 834h1v1h-1zM877 837h1v1h-1zM877 839h1v1h-1zM877 841h1v1h-1zM877 844h1v1h-1zM877 846h1v1h-1zM877 848h1v1h-1zM877 851h1v1h-1zM877 853h1v1h-1zM877 855h1v1h-1zM877 858h1v1h-1zM877 860h1v1h-1zM877 862h1v1h-1zM877 865h1v1h-1zM877 867h1v1h-1zM877 869h1v1h-1zM877 872h1v1h-1zM877 874h1v1h-1zM877 876h1v1h-1zM877 879h1v1h-1zM877 881h1v1h-1zM877 883h1v1h-1zM877 886h1v1h-1zM877 888h1v1h-1zM877 890h1v1h-1zM877 893h1v1h-1zM877 895h1v1h-1zM877 897h1v1h-1zM877 900h1v1h-1zM877 902h1v1h-1zM877 904h1v1h-1zM877 907h1v1h-1zM877 909h1v1h-1zM877 911h1v1h-1zM877 914h1v1h-1zM877 916h1v1h-1zM877 918h1v1h-1zM877 921h1v1h-1zM877 923h1v1h-1zM877 925h1v1h-1zM877 928h1v1h-1zM877 930h1v1h-1zM877 932h1v1h-1zM877 935h1v1h-1zM877 937h1v1h-1zM877 939h1v1h-1zM877 942h1v1h-1zM877 944h1v1h-1zM877 947h1v1h-1zM877 949h1v1h-1zM877 951h1v1h-1zM877 954h1v1h-1zM877 956h1v1h-1zM877 958h1v1h-1zM877 961h1v1h-1zM877 963h1v1h-1zM877 965h1v1h-1zM877 968h1v1h-1zM877 970h1v1h-1zM877 972h1v1h-1zM877 975h1v1h-1z" fill="#c4c4c4"/>
<path d="M1052 55h1v1h-1zM1052 58h1v1h-1zM1052 60h1v1h-1zM1052 62h1v1h-1zM1052 65h1v1h-1zM1052 67h1v1h-1zM1052 69h1v1h-1zM1052 72h1v1h-1zM1052 74h1v1h-1zM1052 76h1v1h-1zM1052 79h1v1h-1zM1052 81h1v1h-1zM1052 83h1v1h-1zM1052 86h1v1h-1zM1052 88h1v1h-1zM1052 90h1v1h-1zM1052 93h1v1h-1zM1052 95h1v1h-1zM1052 97h1v1h-1zM1052 100h1v1h-1zM1052 102h1v1h-1zM1052 104h1v1h-1zM1052 107h1v1h-1zM1052 109h1v1h-1zM1052 111h1v1h-1zM1052 114h1v1h-1zM1052 116h1v1h-1zM1052 118h1v1h-1zM1052 121h1v1h-1zM1052 123h1v1h-1zM1052 126h1v1h-1zM1052 128h1v1h-1zM1052 130h1v1h-1zM1052 133h1v1h-1zM1052 135h1v1h-1zM1052 137h1v1h-1zM1052 140h1v1h-1zM1052 142h1v1h-1zM1052 144h1v1h-1zM1052 147h1v1h-1zM1052 149h1v1h-1zM1052 151h1v1h-1zM1052 154h1v1h-1zM1052 156h1v1h-1zM1052 158h1v1h-1zM1052 161h1v1h-1zM1052 163h1v1h-1zM1052 165h1v1h-1zM1052 168h1v1h-1zM1052 170h1v1h-1zM1052 172h1v1h-1zM1052 175h1v1h-1zM1052 177h1v1h-1zM1052 179h1v1h-1zM1052 182h1v1h-1zM1052 184h1v1h-1zM1052 186h1v1h-1zM1052 189h1v1h-1zM1052 191h1v1h-1zM1052 193h1v1h-1zM1052 196h1v1h-1zM1052 198h1v1h-1zM1052 200h1v1h-1zM1052 203h1v1h-1zM1052 205h1v1h-1zM1052 207h1v1h-1zM1052 210h1v1h-1zM1052 212h1v1h-1zM1052 214h1v1h-1zM1052 217h1v1h-1zM1052 219h1v1h-1zM1052 221h1v1h-1zM1052 224h1v1h-1zM1052 226h1v1h-1zM1052 228h1v1h-1zM1052 231h1v1h-1zM1052 233h1v1h-1zM1052 235h1v1h-1zM1052 238h1v1h-1zM1052 240h1v1h-1zM1052 242h1v1h-1zM1052 245h1v1h-1zM1052 247h1v1h-1zM1052 249h1v1h-1zM1052 252h1v1h-1zM1052 254h1v1h-1zM1052 257h1v1h-1zM1052 259h1v1h-1zM1052 261h1v1h-1zM1052 264h1v1h-1zM1052 266h1v1h-1zM1052 268h1v1h-1zM1052 271h1v1h-1zM1052 273h1v1h-1zM1052 275h1v1h-1zM1052 278h1v1h-1zM1052 280h1v1h-1zM1052 282h1v1h-1zM1052 285h1v1h-1zM1052 287h1v1h-1zM1052 289h1v1h-1zM1052 292h1v1h-1zM1052 294h1v1h-1zM1052 296h1v1h-1zM1052 299h1v1h-1zM1052 301h1v1h-1zM1052 303h1v1h-1zM1052 306h1v1h-1zM1052 308h1v1h-1zM1052 310h1v1h-1zM1052 313h1v1h-1zM1052 315h1v1h-1zM1052 317h1v1h-1zM1052 320h1v1h-1zM1052 322h1v1h-1zM1052 324h1v1h-1zM1052 327h1v1h-1zM1052 329h1v1h-1zM1052 331h1v1h-1zM1052 334h1v1h-1zM1052 336h1v1h-1zM1052 338h1v1h-1zM1052 341h1v1h-1zM1052 343h1v1h-1zM1052 345h1v1h-1zM1052 348h1v1h-1zM1052 350h1v1h-1zM1052 352h1v1h-1zM1052 355h1v1h-1zM1052 357h1v1h-1zM1052 359h1v1h-1zM1052 362h1v1h-1zM1052 364h1v1h-1zM1052 366h1v1h-1zM1052 369h1v1h-1zM1052 371h1v1h-1zM1052 373h1v1h-1zM1052 376h1v1h-1zM1052 378h1v1h-1zM1052 380h1v1h-1zM1052 383h1v1h-1zM1052 385h1v1h-1zM1052 387h1v1h-1zM1052 390h1v1h-1zM1052 392h1v1h-1zM1052 395h1v1h-1zM1052 397h1v1h-1zM1052 399h1v1h-1zM1052 402h1v1h-1zM1052 404h1v1h-1zM1052 406h1v1h-1zM1052 409h1v1h-1zM1052 411h1v1h-1zM1052 413h1v1h-1zM1052 416h1v1h-1zM1052 418h1v1h-1zM1052 420h1v1h-1zM1052 423h1v1h-1zM1052 425h1v1h-1zM1052 427h1v1h-1zM1052 430h1v1h-1zM1052 432h1v1h-1zM1052 434h1v1h-1zM1052 437h1v1h-1zM1052 439h1v1h-1zM1052 441h1v1h-1zM1052 444h1v1h-1zM1052 446h1v1h-1zM1052 448h1v1h-1zM1052 451h1v1h-1zM1052 453h1v1h-1zM1052 455h1v1h-1zM1052 458h1v1h-1zM1052 460h1v1h-1zM1052 462h1v1h-1zM1052 465h1v1h-1zM1052 467h1v1h-1zM1052 469h1v1h-1zM1052 472h1v1h-1zM1052 474h1v1h-1zM1052 476h1v1h-1zM1052 479h1v1h-1zM1052 481h1v1h-1zM1052 483h1v1h-1zM1052 486h1v1h-1zM1052 488h1v1h-1zM1052 490h1v1h-1zM1052 493h1v1h-1zM1052 495h1v1h-1zM1052 497h1v1h-1zM1052 500h1v1h-1zM1052 502h1v1h-1zM1052 504h1v1h-1zM1052 507h1v1h-1zM1052 509h1v1h-1zM1052 511h1v1h-1zM1052 514h1v1h-1zM1052 516h1v1h-1zM1052 518h1v1h-1zM1052 521h1v1h-1zM1052 523h1v1h-1zM1052 525h1v1h-1zM1052 528h1v1h-1zM1052 530h1v1h-1zM1052 533h1v1h-1zM1052 535h1v1h-1zM1052 537h1v1h-1zM1052 540h1v1h-1zM1052 542h1v1h-1zM1052 544h1v1h-1zM1052 547h1v1h-1zM1052 549h1v1h-1zM1052 551h1v1h-1zM1052 554h1v1h-1zM1052 556h1v1h-1zM1052 558h1v1h-1zM1052 561h1v1h-1zM1052 563h1v1h-1zM1052 565h1v1h-1zM1052 568h1v1h-1zM1052 570h1v1h-1zM1052 572h1v1h-1zM1052 575h1v1h-1zM1052 577h1v1h-1zM1052 579h1v1h-1zM1052 582h1v1h-1zM1052 584h1v1h-1zM1052 586h1v1h-1zM1052 589h1v1h-1zM1052 591h1v1h-1zM1052 593h1v1h-1zM1052 596h1v1h-1zM1052 598h1v1h-1zM1052 600h1v1h-1zM1052 603h1v1h-1zM1052 605h1v1h-1zM1052 607h1v1h-1zM1052 610h1v1h-1zM1052 612h1v1h-1zM1052 614h1v1h-1zM1052 617h1v1h-1zM1052 619h1v1h-1zM1052 621h1v1h-1zM1052 624h1v1h-1zM1052 626h1v1h-1zM1052 628h1v1h-1zM1052 631h1v1h-1zM1052 633h1v1h-1zM1052 635h1v1h-1zM1052 638h1v1h-1zM1052 640h1v1h-1zM1052 642h1v1h-1zM1052 645h1v1h-1zM1052 647h1v1h-1zM1052 649h1v1h-1zM1052 652h1v1h-1zM1052 654h1v1h-1zM1052 656h1v1h-1zM1052 659h1v1h-1zM1052 661h1v1h-1zM1052 663h1v1h-1zM1052 666h1v1h-1zM1052 668h1v1h-1zM1052 671h1v1h-1zM1052 673h1v1h-1zM1052 675h1v1h-1zM1052 678h1v1h-1zM1052 680h1v1h-1zM1052 682h1v1h-1zM1052 685h1v1h-1zM1052 687h1v1h-1zM1052 689h1v1h-1zM1052 692h1v1h-1zM1052 694h1v1h-1zM1052 696h1v1h-1zM1052 699h1v1h-1zM1052 701h1v1h-1zM1052 703h1v1h-1zM1052 706h1v1h-1zM1052 708h1v1h-1zM1052 710h1v1h-1zM1052 713h1v1h-1zM1052 715h1v1h-1zM1052 717h1v1h-1zM1052 720h1v1h-1zM1052 722h1v1h-1zM1052 724h1v1h-1zM1052 727h1v1h-1zM1052 729h1v1h-1zM1052 731h1v1h-1zM1052 734h1v1h-1zM1052 736h1v1h-1zM1052 738h1v1h-1zM1052 741h1v1h-1zM1052 743h1v1h-1zM1052 745h1v1h-1zM1052 748h1v1h-1zM1052 750h1v1h-1zM1052 752h1v1h-1zM1052 755h1v1h-1zM1052 757h1v1h-1zM1052 759h1v1h-1zM1052 762h1v1h-1zM1052 764h1v1h-1zM1052 766h1v1h-1zM1052 769h1v1h-1zM1052 771h1v1h-1zM1052 773h1v1h-1zM1052 776h1v1h-1zM1052 778h1v1h-1zM1052 780h1v1h-1zM1052 783h1v1h-1zM1052 785h1v1h-1zM1052 787h1v1h-1zM1052 790h1v1h-1zM1052 792h1v1h-1zM1052 794h1v1h-1zM1052 797h1v1h-1zM1052 799h1v1h-1zM1052 801h1v1h-1zM1052 804h1v1h-1zM1052 806h1v1h-1zM1052 809h1v1h-1zM1052 811h1v1h-1zM1052 813h1v1h-1zM1052 816h1v1h-1zM1052 818h1v1h-1zM1052 820h1v1h-1zM1052 823h1v1h-1zM1052 825h1v1h-1zM1052 827h1v1h-1zM1052 830h1v1h-1zM1052 832h1v1h-1zM1052 834h1v1h-1zM1052 837h1v1h-1zM1052 839h1v1h-1zM1052 841h1v1h-1zM1052 844h1v1h-1zM1052 846h1v1h-1zM1052 848h1v1h-1zM1052 851h1v1h-1zM1052 853h1v1h-1zM1052 855h1v1h-1zM1052 858h1v1h-1zM1052 860h1v1h-1zM1052 862h1v1h-1zM1052 865h1v1h-1zM1052 867h1v1h-1zM1052 869h1v1h-1zM1052 872h1v1h-1zM1052 874h1v1h-1zM1052 876h1v1h-1zM1052 879h1v1h-1zM1052 881h1v1h-1zM1052 883h1v1h-1zM1052 886h1v1h-1zM1052 888h1v1h-1zM1052 890h1v1h-1zM1052 893h1v1h-1zM1052 895h1v1h-1zM1052 897h1v1h-1zM1052 900h1v1h-1zM1052 902h1v1h-1zM1052 904h1v1h-1zM1052 907h1v1h-1zM1052 909h1v1h-1zM1052 911h1v1h-1zM1052 914h1v1h-1zM1052 916h1v1h-1zM1052 918h1v1h-1zM1052 921h1v1h-1zM1052 923h1v1h-1zM1052 925h1v1h-1zM1052 928h1v1h-1zM1052 930h1v1h-1zM1052 932h1v1h-1zM1052 935h1v1h-1zM1052 937h1v1h-1zM1052 939h1v1h-1zM1052 942h1v1h-1zM1052 944h1v1h-1zM1052 947h1v1h-1zM1052 949h1v1h-1zM1052 951h1v1h-1zM1052 954h1v1h-1zM1052 956h1v1h-1zM1052 958h1v1h-1zM1052 961h1v1h-1zM1052 963h1v1h-1zM1052 965h1v1h-1zM1052 968h1v1h-1zM1052 970h1v1h-1zM1052 972h1v1h-1zM1052 975h1v1h-1z" fill="#c4c4c4"/>
<path d="M1227 55h1v1h-1zM1227 58h1v1h-1zM1227 60h1v1h-1zM1227 62h1v1h-1zM1227 65h1v1h-1zM1227 67h1v1h-1zM1227 69h1v1h-1zM1227 72h1v1h-1zM1227 74h1v1h-1zM1227 76h1v1h-1zM1227 79h1v1h-1zM1227 81h1v1h-1zM1227 83h1v1h-1zM1227 86h1v1h-1zM1227 88h1v1h-1zM1227 90h1v1h-1zM1227 93h1v1h-1zM1227 95h1v1h-1zM1227 97h1v1h-1zM1227 100h1v1h-1zM1227 102h1v1h-1zM1227 104h1v1h-1zM1227 107h1v1h-1zM1227 109h1v1h-1zM1227 111h1v1h-1zM1227 114h1v1h-1zM1227 116h1v1h-1zM1227 118h1v1h-1zM1227 121h1v1h-1zM1227 123h1v1h-1zM1227 126h1v1h-1zM1227 128h1v1h-1zM1227 130h1v1h-1zM1227 133h1v1h-1zM1227 135h1v1h-1zM1227 137h1v1h-1zM1227 140h1v1h-1zM1227 142h1v1h-1zM1227 144h1v1h-1zM1227 147h1v1h-1zM1227 149h1v1h-1zM1227 151h1v1h-1zM1227 154h1v1h-1zM1227 156h1v1h-1zM1227 158h1v1h-1zM1227 161h1v1h-1zM1227 163h1v1h-1zM1227 165h1v1h-1zM1227 168h1v1h-1zM1227 170h1v1h-1zM1227 172h1v1h-1zM1227 175h1v1h-1zM1227 177h1v1h-1zM1227 179h1v1h-1zM1227 182h1v1h-1zM1227 184h1v1h-1zM1227 186h1v1h-1zM1227 189h1v1h-1zM1227 191h1v1h-1zM1227 193h1v1h-1zM1227 196h1v1h-1zM1227 198h1v1h-1zM1227 200h1v1h-1zM1227 203h1v1h-1zM1227 205h1v1h-1zM1227 207h1v1h-1zM1227 210h1v1h-1zM1227 212h1v1h-1zM1227 214h1v1h-1zM1227 217h1v1h-1zM1227 219h1v1h-1zM1227 221h1v1h-1zM1227 224h1v1h-1zM1227 226h1v1h-1zM1227 228h1v1h-1zM1227 231h1v1h-1zM1227 233h1v1h-1zM1227 235h1v1h-1zM1227 238h1v1h-1zM1227 240h1v1h-1zM1227 242h1v1h-1zM1227 245h1v1h-1zM1227 247h1v1h-1zM1227 249h1v1h-1zM1227 252h1v1h-1zM1227 254h1v1h-1zM1227 257h1v1h-1zM1227 259h1v1h-1zM1227 261h1v1h-1zM1227 264h1v1h-1zM1227 266h1v1h-1zM1227 268h1v1h-1zM1227 271h1v1h-1zM1227 273h1v1h-1zM1227 275h1v1h-1zM1227 278h1v1h-1zM1227 280h1v1h-1zM1227 282h1v1h-1zM1227 285h1v1h-1zM1227 287h1v1h-1zM1227 289h1v1h-1zM1227 292h1v1h-1zM1227 294h1v1h-1zM1227 296h1v1h-1zM1227 299h1v1h-1zM1227 301h1v1h-1zM1227 303h1v1h-1zM1227 306h1v1h-1zM1227 308h1v1h-1zM1227 310h1v1h-1zM1227 313h1v1h-1zM1227 315h1v1h-1zM1227 317h1v1h-1zM1227 320h1v1h-1zM1227 322h1v1h-1zM1227 324h1v1h-1zM1227 327h1v1h-1zM1227 329h1v1h-1zM1227 331h1v1h-1zM1227 334h1v1h-1zM1227 336h1v1h-1zM1227 338h1v1h-1zM1227 341h1v1h-1zM1227 343h1v1h-1zM1227 345h1v1h-1zM1227 348h1v1h-1zM1227 350h1v1h-1zM1227 352h1v1h-1zM1227 355h1v1h-1zM1227 357h1v1h-1zM1227 359h1v1h-1zM1227 362h1v1h-1zM1227 364h1v1h-1zM1227 366h1v1h-1zM1227 369h1v1h-1zM1227 371h1v1h-1zM1227 373h1v1h-1zM1227 376h1v1h-1zM1227 378h1v1h-1zM1227 380h1v1h-1zM1227 383h1v1h-1zM1227 385h1v1h-1zM1227 387h1v1h-1zM1227 390h1v1h-1zM1227 392h1v1h-1zM1227 395h1v1h-1zM1227 397h1v1h-1zM1227 399h1v1h-1zM1227 402h1v1h-1zM1227 404h1v1h-1zM1227 406h1v1h-1zM1227 409h1v1h-1zM1227 411h1v1h-1zM1227 413h1v1h-1zM1227 416h1v1h-1zM1227 418h1v1h-1zM1227 420h1v1h-1zM1227 423h1v1h-1zM1227 425h1v1h-1zM1227 427h1v1h-1zM1227 430h1v1h-1zM1227 432h1v1h-1zM1227 434h1v1h-1zM1227 437h1v1h-1zM1227 439h1v1h-1zM1227 441h1v1h-1zM1227 444h1v1h-1zM1227 446h1v1h-1zM1227 448h1v1h-1zM1227 451h1v1h-1zM1227 453h1v1h-1zM1227 455h1v1h-1zM1227 458h1v1h-1zM1227 460h1v1h-1zM1227 462h1v1h-1zM1227 465h1v1h-1zM1227 467h1v1h-1zM1227 469h1v1h-1zM1227 472h1v1h-1zM1227 474h1v1h-1zM1227 476h1v1h-1zM1227 479h1v1h-1zM1227 481h1v1h-1zM1227 483h1v1h-1zM1227 486h1v1h-1zM1227 488h1v1h-1zM1227 490h1v1h-1zM1227 493h1v1h-1zM1227 495h1v1h-1zM1227 497h1v1h-1zM1227 500h1v1h-1zM1227 502h1v1h-1zM1227 504h1v1h-1zM1227 507h1v1h-1zM1227 509h1v1h-1zM1227 511h1v1h-1zM1227 514h1v1h-1zM1227 516h1v1h-1zM1227 518h1v1h-1zM1227 521h1v1h-1zM1227 523h1v1h-1zM1227 525h1v1h-1zM1227 528h1v1h-1zM1227 530h1v1h-1zM1227 533h1v1h-1zM1227 535h1v1h-1zM1227 537h1v1h-1zM1227 540h1v1h-1zM1227 542h1v1h-1zM1227 544h1v1h-1zM1227 547h1v1h-1zM1227 549h1v1h-1zM1227 551h1v1h-1zM1227 554h1v1h-1zM1227 556h1v1h-1zM1227 558h1v1h-1zM1227 561h1v1h-1zM1227 563h1v1h-1zM1227 565h1v1h-1zM1227 568h1v1h-1zM1227 570h1v1h-1zM1227 572h1v1h-1zM1227 575h1v1h-1zM1227 577h1v1h-1zM1227 579h1v1h-1zM1227 582h1v1h-1zM1227 584h1v1h-1zM1227 586h1v1h-1zM1227 589h1v1h-1zM1227 591h1v1h-1zM1227 593h1v1h-1zM1227 596h1v1h-1zM1227 598h1v1h-1zM1227 600h1v1h-1zM1227 603h1v1h-1zM1227 605h1v1h-1zM1227 607h1v1h-1zM1227 610h1v1h-1zM1227 612h1v1h-1zM1227 614h1v1h-1zM1227 617h1v1h-1zM1227 619h1v1h-1zM1227 621h1v1h-1zM1227 624h1v1h-1zM1227 626h1v1h-1zM1227 628h1v1h-1zM1227 631h1v1h-1zM1227 633h1v1h-1zM1227 635h1v1h-1zM1227 638h1v1h-1zM1227 640h1v1h-1zM1227 642h1v1h-1zM1227 645h1v1h-1zM1227 647h1v1h-1zM1227 649h1v1h-1zM1227 652h1v1h-1zM1227 654h1v1h-1zM1227 656h1v1h-1zM1227 659h1v1h-1zM1227 661h1v1h-1zM1227 663h1v1h-1zM1227 666h1v1h-1zM1227 668h1v1h-1zM1227 671h1v1h-1zM1227 673h1v1h-1zM1227 675h1v1h-1zM1227 678h1v1h-1zM1227 680h1v1h-1zM1227 682h1v1h-1zM1227 685h1v1h-1zM1227 687h1v1h-1zM1227 689h1v1h-1zM1227 692h1v1h-1zM1227 694h1v1h-1zM1227 696h1v1h-1zM1227 699h1v1h-1zM1227 701h1v1h-1zM1227 703h1v1h-1zM1227 706h1v1h-1zM1227 708h1v1h-1zM1227 710h1v1h-1zM1227 713h1v1h-1zM1227 715h1v1h-1zM1227 717h1v1h-1zM1227 720h1v1h-1zM1227 722h1v1h-1zM1227 724h1v1h-1zM1227 727h1v1h-1zM1227 729h1v1h-1zM1227 731h1v1h-1zM1227 734h1v1h-1zM1227 736h1v1h-1zM1227 738h1v1h-1zM1227 741h1v1h-1zM1227 743h1v1h-1zM1227 745h1v1h-1zM1227 748h1v1h-1zM1227 750h1v1h-1zM1227 752h1v1h-1zM1227 755h1v1h-1zM1227 757h1v1h-1zM1227 759h1v1h-1zM1227 762h1v1h-1zM1227 764h1v1h-1zM1227 766h1v1h-1zM1227 769h1v1h-1zM1227 771h1v1h-1zM1227 773h1v1h-1zM1227 776h1v1h-1zM1227 778h1v1h-1zM1227 780h1v1h-1zM1227 783h1v1h-1zM1227 785h1v1h-1zM1227 787h1v1h-1zM1227 790h1v1h-1zM1227 792h1v1h-1zM1227 794h1v1h-1zM1227 797h1v1h-1zM1227 799h1v1h-1zM1227 801h1v1h-1zM1227 804h1v1h-1zM1227 806h1v1h-1zM1227 809h1v1h-1zM1227 811h1v1h-1zM1227 813h1v1h-1zM1227 816h1v1h-1zM1227 818h1v1h-1zM1227 820h1v1h-1zM1227 823h1v1h-1zM1227 825h1v1h-1zM1227 827h1v1h-1zM1227 830h1v1h-1zM1227 832h1v1h-1zM1227 834h1v1h-1zM1227 837h1v1h-1zM1227 839h1v1h-1zM1227 841h1v1h-1zM1227 844h1v1h-1zM1227 846h1v1h-1zM1227 848h1v1h-1zM1227 851h1v1h-1zM1227 853h1v1h-1zM1227 855h1v1h-1zM1227 858h1v1h-1zM1227 860h1v1h-1zM1227 862h1v1h-1zM1227 865h1v1h-1zM1227 867h1v1h-1zM1227 869h1v1h-1zM1227 872h1v1h-1zM1227 874h1v1h-1zM1227 876h1v1h-1zM1227 879h1v1h-1zM1227 881h1v1h-1zM1227 883h1v1h-1zM1227 886h1v1h-1zM1227 888h1v1h-1zM1227 890h1v1h-1zM1227 893h1v1h-1zM1227 895h1v1h-1zM1227 897h1v1h-1zM1227 900h1v1h-1zM1227 902h1v1h-1zM1227 904h1v1h-1zM1227 907h1v1h-1zM1227 909h1v1h-1zM1227 911h1v1h-1zM1227 914h1v1h-1zM1227 916h1v1h-1zM1227 918h1v1h-1zM1227 921h1v1h-1zM1227 923h1v1h-1zM1227 925h1v1h-1zM1227 928h1v1h-1zM1227 930h1v1h-1zM1227 932h1v1h-1zM1227 935h1v1h-1zM1227 937h1v1h-1zM1227 939h1v1h-1zM1227 942h1v1h-1zM1227 944h1v1h-1zM1227 947h1v1h-1zM1227 949h1v1h-1zM1227 951h1v1h-1zM1227 954h1v1h-1zM1227 956h1v1h-1zM1227 958h1v1h-1zM1227 961h1v1h-1zM1227 963h1v1h-1zM1227 965h1v1h-1zM1227 968h1v1h-1zM1227 970h1v1h-1zM1227 972h1v1h-1zM1227 975h1v1h-1z" fill="#c4c4c4"/>
<path d="M1401 55h1v1h-1zM1401 58h1v1h-1zM1401 60h1v1h-1zM1401 62h1v1h-1zM1401 65h1v1h-1zM1401 67h1v1h-1zM1401 69h1v1h-1zM1401 72h1v1h-1zM1401 74h1v1h-1zM1401 76h1v1h-1zM1401 79h1v1h-1zM1401 81h1v1h-1zM1401 83h1v1h-1zM1401 86h1v1h-1zM1401 88h1v1h-1zM1401 90h1v1h-1zM1401 93h1v1h-1zM1401 95h1v1h-1zM1401 97h1v1h-1zM1401 100h1v1h-1zM1401 102h1v1h-1zM1401 104h1v1h-1zM1401 107h1v1h-1zM1401 109h1v1h-1zM1401 111h1v1h-1zM1401 114h1v1h-1zM1401 116h1v1h-1zM1401 118h1v1h-1zM1401 121h1v1h-1zM1401 123h1v1h-1zM1401 126h1v1h-1zM1401 128h1v1h-1zM1401 130h1v1h-1zM1401 133h1v1h-1zM1401 135h1v1h-1zM1401 137h1v1h-1zM1401 140h1v1h-1zM1401 142h1v1h-1zM1401 144h1v1h-1zM1401 147h1v1h-1zM1401 149h1v1h-1zM1401 151h1v1h-1zM1401 154h1v1h-1zM1401 156h1v1h-1zM1401 158h1v1h-1zM1401 161h1v1h-1zM1401 163h1v1h-1zM1401 165h1v1h-1zM1401 168h1v1h-1zM1401 170h1v1h-1zM1401 172h1v1h-1zM1401 175h1v1h-1zM1401 177h1v1h-1zM1401 179h1v1h-1zM1401 182h1v1h-1zM1401 184h1v1h-1zM1401 186h1v1h-1zM1401 189h1v1h-1zM1401 191h1v1h-1zM1401 193h1v1h-1zM1401 196h1v1h-1zM1401 198h1v1h-1zM1401 200h1v1h-1zM1401 203h1v1h-1zM1401 205h1v1h-1zM1401 207h1v1h-1zM1401 210h1v1h-1zM1401 212h1v1h-1zM1401 214h1v1h-1zM1401 217h1v1h-1zM1401 219h1v1h-1zM1401 221h1v1h-1zM1401 224h1v1h-1zM1401 226h1v1h-1zM1401 228h1v1h-1zM1401 231h1v1h-1zM1401 233h1v1h-1zM1401 235h1v1h-1zM1401 238h1v1h-1zM1401 240h1v1h-1zM1401 242h1v1h-1zM1401 245h1v1h-1zM1401 247h1v1h-1zM1401 249h1v1h-1zM1401 252h1v1h-1zM1401 254h1v1h-1zM1401 257h1v1h-1zM1401 259h1v1h-1zM1401 261h1v1h-1zM1401 264h1v1h-1zM1401 266h1v1h-1zM1401 268h1v1h-1zM1401 271h1v1h-1zM1401 273h1v1h-1zM1401 275h1v1h-1zM1401 278h1v1h-1zM1401 280h1v1h-1zM1401 282h1v1h-1zM1401 285h1v1h-1zM1401 287h1v1h-1zM1401 289h1v1h-1zM1401 292h1v1h-1zM1401 294h1v1h-1zM1401 296h1v1h-1zM1401 299h1v1h-1zM1401 301h1v1h-1zM1401 303h1v1h-1zM1401 306h1v1h-1zM1401 308h1v1h-1zM1401 310h1v1h-1zM1401 313h1v1h-1zM1401 315h1v1h-1zM1401 317h1v1h-1zM1401 320h1v1h-1zM1401 322h1v1h-1zM1401 324h1v1h-1zM1401 327h1v1h-1zM1401 329h1v1h-1zM1401 331h1v1h-1zM1401 334h1v1h-1zM1401 336h1v1h-1zM1401 338h1v1h-1zM1401 341h1v1h-1zM1401 343h1v1h-1zM1401 345h1v1h-1zM1401 348h1v1h-1zM1401 350h1v1h-1zM1401 352h1v1h-1zM1401 355h1v1h-1zM1401 357h1v1h-1zM1401 359h1v1h-1zM1401 362h1v1h-1zM1401 364h1v1h-1zM1401 366h1v1h-1zM1401 369h1v1h-1zM1401 371h1v1h-1zM1401 373h1v1h-1zM1401 376h1v1h-1zM1401 378h1v1h-1zM1401 380h1v1h-1zM1401 383h1v1h-1zM1401 385h1v1h-1zM1401 387h1v1h-1zM1401 390h1v1h-1zM1401 392h1v1h-1zM1401 395h1v1h-1zM1401 397h1v1h-1zM1401 399h1v1h-1zM1401 402h1v1h-1zM1401 404h1v1h-1zM1401 406h1v1h-1zM1401 409h1v1h-1zM1401 411h1v1h-1zM1401 413h1v1h-1zM1401 416h1v1h-1zM1401 418h1v1h-1zM1401 420h1v1h-1zM1401 423h1v1h-1zM1401 425h1v1h-1zM1401 427h1v1h-1zM1401 430h1v1h-1zM1401 432h1v1h-1zM1401 434h1v1h-1zM1401 437h1v1h-1zM1401 439h1v1h-1zM1401 441h1v1h-1zM1401 444h1v1h-1zM1401 446h1v1h-1zM1401 448h1v1h-1zM1401 451h1v1h-1zM1401 453h1v1h-1zM1401 455h1v1h-1zM1401 458h1v1h-1zM1401 460h1v1h-1zM1401 462h1v1h-1zM1401 465h1v1h-1zM1401 467h1v1h-1zM1401 469h1v1h-1zM1401 472h1v1h-1zM1401 474h1v1h-1zM1401 476h1v1h-1zM1401 479h1v1h-1zM1401 481h1v1h-1zM1401 483h1v1h-1zM1401 486h1v1h-1zM1401 488h1v1h-1zM1401 490h1v1h-1zM1401 493h1v1h-1zM1401 495h1v1h-1zM1401 497h1v1h-1zM1401 500h1v1h-1zM1401 502h1v1h-1zM1401 504h1v1h-1zM1401 507h1v1h-1zM1401 509h1v1h-1zM1401 511h1v1h-1zM1401 514h1v1h-1zM1401 516h1v1h-1zM1401 518h1v1h-1zM1401 521h1v1h-1zM1401 523h1v1h-1zM1401 525h1v1h-1zM1401 528h1v1h-1zM1401 530h1v1h-1zM1401 533h1v1h-1zM1401 535h1v1h-1zM1401 537h1v1h-1zM1401 540h1v1h-1zM1401 542h1v1h-1zM1401 544h1v1h-1zM1401 547h1v1h-1zM1401 549h1v1h-1zM1401 551h1v1h-1zM1401 554h1v1h-1zM1401 556h1v1h-1zM1401 558h1v1h-1zM1401 561h1v1h-1zM1401 563h1v1h-1zM1401 565h1v1h-1zM1401 568h1v1h-1zM1401 570h1v1h-1zM1401 572h1v1h-1zM1401 575h1v1h-1zM1401 577h1v1h-1zM1401 579h1v1h-1zM1401 582h1v1h-1zM1401 584h1v1h-1zM1401 586h1v1h-1zM1401 589h1v1h-1zM1401 591h1v1h-1zM1401 593h1v1h-1zM1401 596h1v1h-1zM1401 598h1v1h-1zM1401 600h1v1h-1zM1401 603h1v1h-1zM1401 605h1v1h-1zM1401 607h1v1h-1zM1401 610h1v1h-1zM1401 612h1v1h-1zM1401 614h1v1h-1zM1401 617h1v1h-1zM1401 619h1v1h-1zM1401 621h1v1h-1zM1401 624h1v1h-1zM1401 626h1v1h-1zM1401 628h1v1h-1zM1401 631h1v1h-1zM1401 633h1v1h-1zM1401 635h1v1h-1zM1401 638h1v1h-1zM1401 640h1v1h-1zM1401 642h1v1h-1zM1401 645h1v1h-1zM1401 647h1v1h-1zM1401 649h1v1h-1zM1401 652h1v1h-1zM1401 654h1v1h-1zM1401 656h1v1h-1zM1401 659h1v1h-1zM1401 661h1v1h-1zM1401 663h1v1h-1zM1401 666h1v1h-1zM1401 668h1v1h-1zM1401 671h1v1h-1zM1401 673h1v1h-1zM1401 675h1v1h-1zM1401 678h1v1h-1zM1401 680h1v1h-1zM1401 682h1v1h-1zM1401 685h1v1h-1zM1401 687h1v1h-1zM1401 689h1v1h-1zM1401 692h1v1h-1zM1401 694h1v1h-1zM1401 696h1v1h-1zM1401 699h1v1h-1zM1401 701h1v1h-1zM1401 703h1v1h-1zM1401 706h1v1h-1zM1401 708h1v1h-1zM1401 710h1v1h-1zM1401 713h1v1h-1zM1401 715h1v1h-1zM1401 717h1v1h-1zM1401 720h1v1h-1zM1401 722h1v1h-1zM1401 724h1v1h-1zM1401 727h1v1h-1zM1401 729h1v1h-1zM1401 731h1v1h-1zM1401 734h1v1h-1zM1401 736h1v1h-1zM1401 738h1v1h-1zM1401 741h1v1h-1zM1401 743h1v1h-1zM1401 745h1v1h-1zM1401 748h1v1h-1zM1401 750h1v1h-1zM1401 752h1v1h-1zM1401 755h1v1h-1zM1401 757h1v1h-1zM1401 759h1v1h-1zM1401 762h1v1h-1zM1401 764h1v1h-1zM1401 766h1v1h-1zM1401 769h1v1h-1zM1401 771h1v1h-1zM1401 773h1v1h-1zM1401 776h1v1h-1zM1401 778h1v1h-1zM1401 780h1v1h-1zM1401 783h1v1h-1zM1401 785h1v1h-1zM1401 787h1v1h-1zM1401 790h1v1h-1zM1401 792h1v1h-1zM1401 794h1v1h-1zM1401 797h1v1h-1zM1401 799h1v1h-1zM1401 801h1v1h-1zM1401 804h1v1h-1zM1401 806h1v1h-1zM1401 809h1v1h-1zM1401 811h1v1h-1zM1401 813h1v1h-1zM1401 816h1v1h-1zM1401 818h1v1h-1zM1401 820h1v1h-1zM1401 823h1v1h-1zM1401 825h1v1h-1zM1401 827h1v1h-1zM1401 830h1v1h-1zM1401 832h1v1h-1zM1401 834h1v1h-1zM1401 837h1v1h-1zM1401 839h1v1h-1zM1401 841h1v1h-1zM1401 844h1v1h-1zM1401 846h1v1h-1zM1401 848h1v1h-1zM1401 851h1v1h-1zM1401 853h1v1h-1zM1401 855h1v1h-1zM1401 858h1v1h-1zM1401 860h1v1h-1zM1401 862h1v1h-1zM1401 865h1v1h-1zM1401 867h1v1h-1zM1401 869h1v1h-1zM1401 872h1v1h-1zM1401 874h1v1h-1zM1401 876h1v1h-1zM1401 879h1v1h-1zM1401 881h1v1h-1zM1401 883h1v1h-1zM1401 886h1v1h-1zM1401 888h1v1h-1zM1401 890h1v1h-1zM1401 893h1v1h-1zM1401 895h1v1h-1zM1401 897h1v1h-1zM1401 900h1v1h-1zM1401 902h1v1h-1zM1401 904h1v1h-1zM1401 907h1v1h-1zM1401 909h1v1h-1zM1401 911h1v1h-1zM1401 914h1v1h-1zM1401 916h1v1h-1zM1401 918h1v1h-1zM1401 921h1v1h-1zM1401 923h1v1h-1zM1401 925h1v1h-1zM1401 928h1v1h-1zM1401 930h1v1h-1zM1401 932h1v1h-1zM1401 935h1v1h-1zM1401 937h1v1h-1zM1401 939h1v1h-1zM1401 942h1v1h-1zM1401 944h1v1h-1zM1401 947h1v1h-1zM1401 949h1v1h-1zM1401 951h1v1h-1zM1401 954h1v1h-1zM1401 956h1v1h-1zM1401 958h1v1h-1zM1401 961h1v1h-1zM1401 963h1v1h-1zM1401 965h1v1h-1zM1401 968h1v1h-1zM1401 970h1v1h-1zM1401 972h1v1h-1zM1401 975h1v1h-1z" fill="#c4c4c4"/>
<path d="M1576 55h1v1h-1zM1576 58h1v1h-1zM1576 60h1v1h-1zM1576 62h1v1h-1zM1576 65h1v1h-1zM1576 67h1v1h-1zM1576 69h1v1h-1zM1576 72h1v1h-1zM1576 74h1v1h-1zM1576 76h1v1h-1zM1576 79h1v1h-1zM1576 81h1v1h-1zM1576 83h1v1h-1zM1576 86h1v1h-1zM1576 88h1v1h-1zM1576 90h1v1h-1zM1576 93h1v1h-1zM1576 95h1v1h-1zM1576 97h1v1h-1zM1576 100h1v1h-1zM1576 102h1v1h-1zM1576 104h1v1h-1zM1576 107h1v1h-1zM1576 109h1v1h-1zM1576 111h1v1h-1zM1576 114h1v1h-1zM1576 116h1v1h-1zM1576 118h1v1h-1zM1576 121h1v1h-1zM1576 123h1v1h-1zM1576 126h1v1h-1zM1576 128h1v1h-1zM1576 130h1v1h-1zM1576 133h1v1h-1zM1576 135h1v1h-1zM1576 137h1v1h-1zM1576 140h1v1h-1zM1576 142h1v1h-1zM1576 144h1v1h-1zM1576 147h1v1h-1zM1576 149h1v1h-1zM1576 151h1v1h-1zM1576 154h1v1h-1zM1576 156h1v1h-1zM1576 158h1v1h-1zM1576 161h1v1h-1zM1576 163h1v1h-1zM1576 165h1v1h-1zM1576 168h1v1h-1zM1576 170h1v1h-1zM1576 172h1v1h-1zM1576 175h1v1h-1zM1576 177h1v1h-1zM1576 179h1v1h-1zM1576 182h1v1h-1zM1576 184h1v1h-1zM1576 186h1v1h-1zM1576 189h1v1h-1zM1576 191h1v1h-1zM1576 193h1v1h-1zM1576 196h1v1h-1zM1576 198h1v1h-1zM1576 200h1v1h-1zM1576 203h1v1h-1zM1576 205h1v1h-1zM1576 207h1v1h-1zM1576 210h1v1h-1zM1576 212h1v1h-1zM1576 214h1v1h-1zM1576 217h1v1h-1zM1576 219h1v1h-1zM1576 221h1v1h-1zM1576 224h1v1h-1zM1576 226h1v1h-1zM1576 228h1v1h-1zM1576 231h1v1h-1zM1576 233h1v1h-1zM1576 235h1v1h-1zM1576 238h1v1h-1zM1576 240h1v1h-1zM1576 242h1v1h-1zM1576 245h1v1h-1zM1576 247h1v1h-1zM1576 249h1v1h-1zM1576 252h1v1h-1zM1576 254h1v1h-1zM1576 257h1v1h-1zM1576 259h1v1h-1zM1576 261h1v1h-1zM1576 264h1v1h-1zM1576 266h1v1h-1zM1576 268h1v1h-1zM1576 271h1v1h-1zM1576 273h1v1h-1zM1576 275h1v1h-1zM1576 278h1v1h-1zM1576 280h1v1h-1zM1576 282h1v1h-1zM1576 285h1v1h-1zM1576 287h1v1h-1zM1576 289h1v1h-1zM1576 292h1v1h-1zM1576 294h1v1h-1zM1576 296h1v1h-1zM1576 299h1v1h-1zM1576 301h1v1h-1zM1576 303h1v1h-1zM1576 306h1v1h-1zM1576 308h1v1h-1zM1576 310h1v1h-1zM1576 313h1v1h-1zM1576 315h1v1h-1zM1576 317h1v1h-1zM1576 320h1v1h-1zM1576 322h1v1h-1zM1576 324h1v1h-1zM1576 327h1v1h-1zM1576 329h1v1h-1zM1576 331h1v1h-1zM1576 334h1v1h-1zM1576 336h1v1h-1zM1576 338h1v1h-1zM1576 341h1v1h-1zM1576 343h1v1h-1zM1576 345h1v1h-1zM1576 348h1v1h-1zM1576 350h1v1h-1zM1576 352h1v1h-1zM1576 355h1v1h-1zM1576 357h1v1h-1zM1576 359h1v1h-1zM1576 362h1v1h-1zM1576 364h1v1h-1zM1576 366h1v1h-1zM1576 369h1v1h-1zM1576 371h1v1h-1zM1576 373h1v1h-1zM1576 376h1v1h-1zM1576 378h1v1h-1zM1576 380h1v1h-1zM1576 383h1v1h-1zM1576 385h1v1h-1zM1576 387h1v1h-1zM1576 390h1v1h-1zM1576 392h1v1h-1zM1576 395h1v1h-1zM1576 397h1v1h-1zM1576 399h1v1h-1zM1576 402h1v1h-1zM1576 404h1v1h-1zM1576 406h1v1h-1zM1576 409h1v1h-1zM1576 411h1v1h-1zM1576 413h1v1h-1zM1576 416h1v1h-1zM1576 418h1v1h-1zM1576 420h1v1h-1zM1576 423h1v1h-1zM1576 425h1v1h-1zM1576 427h1v1h-1zM1576 430h1v1h-1zM1576 432h1v1h-1zM1576 434h1v1h-1zM1576 437h1v1h-1zM1576 439h1v1h-1zM1576 441h1v1h-1zM1576 444h1v1h-1zM1576 446h1v1h-1zM1576 448h1v1h-1zM1576 451h1v1h-1zM1576 453h1v1h-1zM1576 455h1v1h-1zM1576 458h1v1h-1zM1576 460h1v1h-1zM1576 462h1v1h-1zM1576 465h1v1h-1zM1576 467h1v1h-1zM1576 469h1v1h-1zM1576 472h1v1h-1zM1576 474h1v1h-1zM1576 476h1v1h-1zM1576 479h1v1h-1zM1576 481h1v1h-1zM1576 483h1v1h-1zM1576 486h1v1h-1zM1576 488h1v1h-1zM1576 490h1v1h-1zM1576 493h1v1h-1zM1576 495h1v1h-1zM1576 497h1v1h-1zM1576 500h1v1h-1zM1576 502h1v1h-1zM1576 504h1v1h-1zM1576 507h1v1h-1zM1576 509h1v1h-1zM1576 511h1v1h-1zM1576 514h1v1h-1zM1576 516h1v1h-1zM1576 518h1v1h-1zM1576 521h1v1h-1zM1576 523h1v1h-1zM1576 525h1v1h-1zM1576 528h1v1h-1zM1576 530h1v1h-1zM1576 533h1v1h-1zM1576 535h1v1h-1zM1576 537h1v1h-1zM1576 540h1v1h-1zM1576 542h1v1h-1zM1576 544h1v1h-1zM1576 547h1v1h-1zM1576 549h1v1h-1zM1576 551h1v1h-1zM1576 554h1v1h-1zM1576 556h1v1h-1zM1576 558h1v1h-1zM1576 561h1v1h-1zM1576 563h1v1h-1zM1576 565h1v1h-1zM1576 568h1v1h-1zM1576 570h1v1h-1zM1576 572h1v1h-1zM1576 575h1v1h-1zM1576 577h1v1h-1zM1576 579h1v1h-1zM1576 582h1v1h-1zM1576 584h1v1h-1zM1576 586h1v1h-1zM1576 589h1v1h-1zM1576 591h1v1h-1zM1576 593h1v1h-1zM1576 596h1v1h-1zM1576 598h1v1h-1zM1576 600h1v1h-1zM1576 603h1v1h-1zM1576 605h1v1h-1zM1576 607h1v1h-1zM1576 610h1v1h-1zM1576 612h1v1h-1zM1576 614h1v1h-1zM1576 617h1v1h-1zM1576 619h1v1h-1zM1576 621h1v1h-1zM1576 624h1v1h-1zM1576 626h1v1h-1zM1576 628h1v1h-1zM1576 631h1v1h-1zM1576 633h1v1h-1zM1576 635h1v1h-1zM1576 638h1v1h-1zM1576 640h1v1h-1zM1576 642h1v1h-1zM1576 645h1v1h-1zM1576 647h1v1h-1zM1576 649h1v1h-1zM1576 652h1v1h-1zM1576 654h1v1h-1zM1576 656h1v1h-1zM1576 659h1v1h-1zM1576 661h1v1h-1zM1576 663h1v1h-1zM1576 666h1v1h-1zM1576 668h1v1h-1zM1576 671h1v1h-1zM1576 673h1v1h-1zM1576 675h1v1h-1zM1576 678h1v1h-1zM1576 680h1v1h-1zM1576 682h1v1h-1zM1576 685h1v1h-1zM1576 687h1v1h-1zM1576 689h1v1h-1zM1576 692h1v1h-1zM1576 694h1v1h-1zM1576 696h1v1h-1zM1576 699h1v1h-1zM1576 701h1v1h-1zM1576 703h1v1h-1zM1576 706h1v1h-1zM1576 708h1v1h-1zM1576 710h1v1h-1zM1576 713h1v1h-1zM1576 715h1v1h-1zM1576 717h1v1h-1zM1576 720h1v1h-1zM1576 722h1v1h-1zM1576 724h1v1h-1zM1576 727h1v1h-1zM1576 729h1v1h-1zM1576 731h1v1h-1zM1576 734h1v1h-1zM1576 736h1v1h-1zM1576 738h1v1h-1zM1576 741h1v1h-1zM1576 743h1v1h-1zM1576 745h1v1h-1zM1576 748h1v1h-1zM1576 750h1v1h-1zM1576 752h1v1h-1zM1576 755h1v1h-1zM1576 757h1v1h-1zM1576 759h1v1h-1zM1576 762h1v1h-1zM1576 764h1v1h-1zM1576 766h1v1h-1zM1576 769h1v1h-1zM1576 771h1v1h-1zM1576 773h1v1h-1zM1576 776h1v1h-1zM1576 778h1v1h-1zM1576 780h1v1h-1zM1576 783h1v1h-1zM1576 785h1v1h-1zM1576 787h1v1h-1zM1576 790h1v1h-1zM1576 792h1v1h-1zM1576 794h1v1h-1zM1576 797h1v1h-1zM1576 799h1v1h-1zM1576 801h1v1h-1zM1576 804h1v1h-1zM1576 806h1v1h-1zM1576 809h1v1h-1zM1576 811h1v1h-1zM1576 813h1v1h-1zM1576 816h1v1h-1zM1576 818h1v1h-1zM1576 820h1v1h-1zM1576 823h1v1h-1zM1576 825h1v1h-1zM1576 827h1v1h-1zM1576 830h1v1h-1zM1576 832h1v1h-1zM1576 834h1v1h-1zM1576 837h1v1h-1zM1576 839h1v1h-1zM1576 841h1v1h-1zM1576 844h1v1h-1zM1576 846h1v1h-1zM1576 848h1v1h-1zM1576 851h1v1h-1zM1576 853h1v1h-1zM1576 855h1v1h-1zM1576 858h1v1h-1zM1576 860h1v1h-1zM1576 862h1v1h-1zM1576 865h1v1h-1zM1576 867h1v1h-1zM1576 869h1v1h-1zM1576 872h1v1h-1zM1576 874h1v1h-1zM1576 876h1v1h-1zM1576 879h1v1h-1zM1576 881h1v1h-1zM1576 883h1v1h-1zM1576 886h1v1h-1zM1576 888h1v1h-1zM1576 890h1v1h-1zM1576 893h1v1h-1zM1576 895h1v1h-1zM1576 897h1v1h-1zM1576 900h1v1h-1zM1576 902h1v1h-1zM1576 904h1v1h-1zM1576 907h1v1h-1zM1576 909h1v1h-1zM1576 911h1v1h-1zM1576 914h1v1h-1zM1576 916h1v1h-1zM1576 918h1v1h-1zM1576 921h1v1h-1zM1576 923h1v1h-1zM1576 925h1v1h-1zM1576 928h1v1h-1zM1576 930h1v1h-1zM1576 932h1v1h-1zM1576 935h1v1h-1zM1576 937h1v1h-1zM1576 939h1v1h-1zM1576 942h1v1h-1zM1576 944h1v1h-1zM1576 947h1v1h-1zM1576 949h1v1h-1zM1576 951h1v1h-1zM1576 954h1v1h-1zM1576 956h1v1h-1zM1576 958h1v1h-1zM1576 961h1v1h-1zM1576 963h1v1h-1zM1576 965h1v1h-1zM1576 968h1v1h-1zM1576 970h1v1h-1zM1576 972h1v1h-1zM1576 975h1v1h-1z" fill="#c4c4c4"/>
<line x1="178.5" y1="61" x2="178.5" y2="976" stroke="#c4c4c4" stroke-width="1.2" stroke-dasharray="5 5"/>
<rect x="3" y="112" width="1748" height="1" fill="#f2e52e"/>
<line x1="6" y1="112.5" x2="1751" y2="112.5" stroke="#b4b4b4" stroke-width="1" stroke-dasharray="5 5"/>
<rect x="3" y="228" width="1748" height="1" fill="#2ec6d6"/>
<line x1="6" y1="229.5" x2="1751" y2="229.5" stroke="#b4b4b4" stroke-width="1" stroke-dasharray="5 5"/>
<rect x="3" y="346" width="1748" height="1" fill="#e8455c"/>
<line x1="6" y1="346.5" x2="1751" y2="346.5" stroke="#b4b4b4" stroke-width="1" stroke-dasharray="5 5"/>
<rect x="3" y="417" width="1748" height="1" fill="#8fcf2e"/>
<line x1="6" y1="417.5" x2="1751" y2="417.5" stroke="#b4b4b4" stroke-width="1" stroke-dasharray="5 5"/>
<rect x="3" y="625" width="1748" height="1" fill="#f49a32"/>
<line x1="6" y1="626.5" x2="1751" y2="626.5" stroke="#b4b4b4" stroke-width="1" stroke-dasharray="5 5"/>
<rect x="3" y="696" width="1748" height="1" fill="#3434cc"/>
<line x1="6" y1="697.5" x2="1751" y2="697.5" stroke="#b4b4b4" stroke-width="1" stroke-dasharray="5 5"/>
<rect x="3" y="814" width="1748" height="1" fill="#e04eae"/>
<line x1="6" y1="814.5" x2="1751" y2="814.5" stroke="#b4b4b4" stroke-width="1" stroke-dasharray="5 5"/>
<path d="M3 931.5H177.5V895.5H1751" fill="none" stroke="#00dfa0" stroke-width="1.4"/>
<rect x="295" y="894" width="4" height="1" fill="#00dfa0"/>
<line x1="6" y1="933.5" x2="1751" y2="933.5" stroke="#c0c0c0" stroke-width="1.6" stroke-dasharray="5 5"/>
<rect x="1714.3" y="59.2" width="31.7" height="12" fill="#000"/>
<rect x="1721.5" y="82.6" width="24.5" height="12" fill="#000"/>
<rect x="1717.2" y="129.4" width="28.8" height="12" fill="#000"/>
<rect x="1709.9" y="152.8" width="36.1" height="12" fill="#000"/>
<rect x="1696.2" y="176.2" width="49.8" height="12" fill="#000"/>
<rect x="1696.2" y="199.6" width="49.8" height="12" fill="#000"/>
<rect x="1691.9" y="246.4" width="54.1" height="12" fill="#000"/>
<rect x="1691.9" y="269.8" width="54.1" height="12" fill="#000"/>
<rect x="1696.2" y="293.2" width="49.8" height="12" fill="#000"/>
<rect x="1696.2" y="316.6" width="49.8" height="12" fill="#000"/>
<rect x="1691.9" y="363.4" width="54.1" height="12" fill="#000"/>
<rect x="1691.9" y="386.8" width="54.1" height="12" fill="#000"/>
<rect x="1691.9" y="433.6" width="54.1" height="12" fill="#000"/>
<rect x="1691.9" y="457.0" width="54.1" height="12" fill="#000"/>
<rect x="1691.9" y="480.4" width="54.1" height="12" fill="#000"/>
<rect x="1691.9" y="503.8" width="54.1" height="12" fill="#000"/>
<rect x="1696.2" y="527.2" width="49.8" height="12" fill="#000"/>
<rect x="1696.2" y="550.6" width="49.8" height="12" fill="#000"/>
<rect x="1696.2" y="574.0" width="49.8" height="12" fill="#000"/>
<rect x="1696.2" y="597.4" width="49.8" height="12" fill="#000"/>
<rect x="1721.5" y="644.2" width="24.5" height="12" fill="#000"/>
<rect x="1721.5" y="667.6" width="24.5" height="12" fill="#000"/>
<rect x="1717.2" y="714.4" width="28.8" height="12" fill="#000"/>
<rect x="1717.2" y="737.8" width="28.8" height="12" fill="#000"/>
<rect x="1714.3" y="761.2" width="31.7" height="12" fill="#000"/>
<rect x="1714.3" y="784.6" width="31.7" height="12" fill="#000"/>
<rect x="1709.9" y="831.4" width="36.1" height="12" fill="#000"/>
<rect x="1709.9" y="854.8" width="36.1" height="12" fill="#000"/>
<rect x="1721.5" y="877.7" width="24.5" height="12" fill="#000"/>
<rect x="1721.5" y="901.7" width="24.5" height="12" fill="#000"/>
<rect x="1721.5" y="925.7" width="24.5" height="12" fill="#000"/>
<rect x="1717.2" y="949.7" width="28.8" height="12" fill="#000"/>
<rect x="1717.2" y="973.7" width="28.8" height="12" fill="#000"/>
<text x="178.4" y="986" text-anchor="middle" fill="#b4b4b4" font-size="13">0 s</text>
<text x="353.2" y="986" text-anchor="middle" fill="#b4b4b4" font-size="13">3 ms</text>
<text x="528.0" y="986" text-anchor="middle" fill="#b4b4b4" font-size="13">6 ms</text>
<text x="702.8" y="986" text-anchor="middle" fill="#b4b4b4" font-size="13">9 ms</text>
<text x="877.6" y="986" text-anchor="middle" fill="#b4b4b4" font-size="13">12 ms</text>
<text x="1052.4" y="986" text-anchor="middle" fill="#b4b4b4" font-size="13">15 ms</text>
<text x="1227.2" y="986" text-anchor="middle" fill="#b4b4b4" font-size="13">18 ms</text>
<text x="1402.0" y="986" text-anchor="middle" fill="#b4b4b4" font-size="13">21 ms</text>
<text x="1576.8" y="986" text-anchor="middle" fill="#b4b4b4" font-size="13">24 ms</text>
<path d="M8.5 100.5H30L41 112.5L30 124.5H8.5Q6.5 124.5 6.5 122.5V102.5Q6.5 100.5 8.5 100.5Z" fill="#1e1c08" stroke="#f2e52e" stroke-width="1.2"/>
<text x="15" y="115.5" fill="#f2e52e" font-size="11.5" letter-spacing="3">C1</text>
<text x="53.5" y="116.8" fill="#f2e52e" font-size="18.5" textLength="80.5" lengthAdjust="spacingAndGlyphs">U_loop-b</text>
<path d="M8.5 216.5H30L41 228.5L30 240.5H8.5Q6.5 240.5 6.5 238.5V218.5Q6.5 216.5 8.5 216.5Z" fill="#061a1c" stroke="#2ec6d6" stroke-width="1.2"/>
<text x="15" y="231.5" fill="#2ec6d6" font-size="11.5" letter-spacing="3">C2</text>
<text x="53.5" y="232.8" fill="#2ec6d6" font-size="18.5" textLength="52" lengthAdjust="spacingAndGlyphs">YAP-a</text>
<path d="M8.5 334.5H30L41 346.5L30 358.5H8.5Q6.5 358.5 6.5 356.5V336.5Q6.5 334.5 8.5 334.5Z" fill="#1e0a0e" stroke="#e8455c" stroke-width="1.2"/>
<text x="15" y="349.5" fill="#e8455c" font-size="11.5" letter-spacing="3">C3</text>
<text x="53.5" y="350.8" fill="#e8455c" font-size="18.5" textLength="57" lengthAdjust="spacingAndGlyphs">CeBr-a</text>
<path d="M8.5 450.5H30L41 462.5L30 474.5H8.5Q6.5 474.5 6.5 472.5V452.5Q6.5 450.5 8.5 450.5Z" fill="#10180a" stroke="#8fcf2e" stroke-width="1.2"/>
<text x="15" y="465.5" fill="#8fcf2e" font-size="11.5" letter-spacing="3">C4</text>
<text x="53.5" y="466.8" fill="#8fcf2e" font-size="18.5" textLength="62.7" lengthAdjust="spacingAndGlyphs">CebR-b</text>
<path d="M8.5 567.5H30L41 579.5L30 591.5H8.5Q6.5 591.5 6.5 589.5V569.5Q6.5 567.5 8.5 567.5Z" fill="#1e1408" stroke="#f49a32" stroke-width="1.2"/>
<text x="15" y="582.5" fill="#f49a32" font-size="11.5" letter-spacing="3">C5</text>
<text x="53.5" y="583.8" fill="#f49a32" font-size="18.5" textLength="61.4" lengthAdjust="spacingAndGlyphs">NaITl-a</text>
<path d="M8.5 684.5H30L41 696.5L30 708.5H8.5Q6.5 708.5 6.5 706.5V686.5Q6.5 684.5 8.5 684.5Z" fill="#0a0a1c" stroke="#3434cc" stroke-width="1.2"/>
<text x="15" y="699.5" fill="#3434cc" font-size="11.5" letter-spacing="3">C6</text>
<text x="53.5" y="700.8" fill="#3434cc" font-size="18.5" textLength="43.6" lengthAdjust="spacingAndGlyphs">LYSO</text>
<path d="M8.5 802.5H30L41 814.5L30 826.5H8.5Q6.5 826.5 6.5 824.5V804.5Q6.5 802.5 8.5 802.5Z" fill="#1c0a14" stroke="#e04eae" stroke-width="1.2"/>
<text x="15" y="817.5" fill="#e04eae" font-size="11.5" letter-spacing="3">C7</text>
<text x="53.5" y="818.8" fill="#e04eae" font-size="18.5" textLength="34" lengthAdjust="spacingAndGlyphs">null</text>
<path d="M8.5 919.5H30L41 931.5L30 943.5H8.5Q6.5 943.5 6.5 941.5V921.5Q6.5 919.5 8.5 919.5Z" fill="#00dfa0" stroke="#00dfa0" stroke-width="1.2"/>
<text x="15" y="934.5" fill="#000" font-size="11.5" letter-spacing="3">C8</text>
<text x="53.5" y="935.8" fill="#00dfa0" font-size="18.5" textLength="63.3" lengthAdjust="spacingAndGlyphs">Trigger</text>
<path d="M167.5 54H188.5L178.5 64Z" fill="#f68e26"/>
<path d="M169 874H187V893H181L178 899L175 893H169Z" fill="#000" stroke="#f68e26" stroke-width="1.6"/>
<text x="178" y="889" text-anchor="middle" fill="#f68e26" font-size="15" font-weight="bold">T</text>
<text x="1745" y="70.2" text-anchor="end" fill="#f2e52e" font-size="13">16 V</text>
<text x="1745" y="93.6" text-anchor="end" fill="#f2e52e" font-size="13">8 V</text>
<text x="1745" y="117.0" text-anchor="end" fill="#f2e52e" font-size="13">0 V</text>
<text x="1745" y="140.4" text-anchor="end" fill="#f2e52e" font-size="13">-8 V</text>
<text x="1745" y="163.8" text-anchor="end" fill="#f2e52e" font-size="13">-16 V</text>
<text x="1745" y="187.2" text-anchor="end" fill="#2ec6d6" font-size="13">200 mV</text>
<text x="1745" y="210.6" text-anchor="end" fill="#2ec6d6" font-size="13">100 mV</text>
<text x="1745" y="234.0" text-anchor="end" fill="#2ec6d6" font-size="13">0 V</text>
<text x="1745" y="257.4" text-anchor="end" fill="#2ec6d6" font-size="13">-100 mV</text>
<text x="1745" y="280.8" text-anchor="end" fill="#2ec6d6" font-size="13">-200 mV</text>
<text x="1745" y="304.2" text-anchor="end" fill="#e8455c" font-size="13">400 mV</text>
<text x="1745" y="327.6" text-anchor="end" fill="#e8455c" font-size="13">200 mV</text>
<text x="1745" y="351.0" text-anchor="end" fill="#e8455c" font-size="13">0 V</text>
<text x="1745" y="374.4" text-anchor="end" fill="#e8455c" font-size="13">-200 mV</text>
<text x="1745" y="397.8" text-anchor="end" fill="#e8455c" font-size="13">-400 mV</text>
<text x="1745" y="421.2" text-anchor="end" fill="#8fcf2e" font-size="13">0 V</text>
<text x="1745" y="444.6" text-anchor="end" fill="#8fcf2e" font-size="13">-100 mV</text>
<text x="1745" y="468.0" text-anchor="end" fill="#8fcf2e" font-size="13">-200 mV</text>
<text x="1745" y="491.4" text-anchor="end" fill="#8fcf2e" font-size="13">-300 mV</text>
<text x="1745" y="514.8" text-anchor="end" fill="#8fcf2e" font-size="13">-400 mV</text>
<text x="1745" y="538.2" text-anchor="end" fill="#f49a32" font-size="13">400 mV</text>
<text x="1745" y="561.6" text-anchor="end" fill="#f49a32" font-size="13">300 mV</text>
<text x="1745" y="585.0" text-anchor="end" fill="#f49a32" font-size="13">200 mV</text>
<text x="1745" y="608.4" text-anchor="end" fill="#f49a32" font-size="13">100 mV</text>
<text x="1745" y="631.8" text-anchor="end" fill="#f49a32" font-size="13">0 V</text>
<text x="1745" y="655.2" text-anchor="end" fill="#3434cc" font-size="13">4 V</text>
<text x="1745" y="678.6" text-anchor="end" fill="#3434cc" font-size="13">2 V</text>
<text x="1745" y="702.0" text-anchor="end" fill="#3434cc" font-size="13">0 V</text>
<text x="1745" y="725.4" text-anchor="end" fill="#3434cc" font-size="13">-2 V</text>
<text x="1745" y="748.8" text-anchor="end" fill="#3434cc" font-size="13">-4 V</text>
<text x="1745" y="772.2" text-anchor="end" fill="#e04eae" font-size="13">40 V</text>
<text x="1745" y="795.6" text-anchor="end" fill="#e04eae" font-size="13">20 V</text>
<text x="1745" y="819.0" text-anchor="end" fill="#e04eae" font-size="13">0 V</text>
<text x="1745" y="842.4" text-anchor="end" fill="#e04eae" font-size="13">-20 V</text>
<text x="1745" y="865.8" text-anchor="end" fill="#e04eae" font-size="13">-40 V</text>
<text x="1745" y="888.7" text-anchor="end" fill="#00dfa0" font-size="13">8 V</text>
<text x="1745" y="912.7" text-anchor="end" fill="#00dfa0" font-size="13">4 V</text>
<text x="1745" y="936.7" text-anchor="end" fill="#00dfa0" font-size="13">0 V</text>
<text x="1745" y="960.7" text-anchor="end" fill="#00dfa0" font-size="13">-4 V</text>
<text x="1745" y="984.7" text-anchor="end" fill="#00dfa0" font-size="13">-8 V</text>
<path d="M1730.5 908.5L1742 898.5V918.5Z" fill="#00dfa0"/><rect x="1741" y="907" width="10" height="3" fill="#00dfa0"/>
<path d="M1710 61H1745V95Z" fill="#4c4c4c"/>
<circle cx="1737" cy="68.5" r="4.5" fill="none" stroke="#a0a0a0" stroke-width="1.6"/><line x1="1733.5" y1="72" x2="1728" y2="77.5" stroke="#a0a0a0" stroke-width="2.2" stroke-linecap="round"/>
</svg>
<div class="abs" style="left:1757px;top:499px;width:10px;height:24px">
 <div class="abs" style="left:2px;top:0;width:5px;height:5px;border-radius:50%;background:#b0b0b0"></div>
 <div class="abs" style="left:2px;top:9px;width:5px;height:5px;border-radius:50%;background:#b0b0b0"></div>
 <div class="abs" style="left:2px;top:17px;width:5px;height:5px;border-radius:50%;background:#b0b0b0"></div>
</div>
<div id="rpanel" class="abs"></div>
<div class="abs" style="left:1770px;top:26px;width:150px;text-align:center;font-size:15px;font-weight:bold;color:#f0f0f0;">Add New...</div>
<div class="btn" style="left:1777px;top:53px">Cursors</div>
<div class="btn" style="left:1849px;top:53px">Note</div>
<div class="btn" style="left:1777px;top:99px">Measure</div>
<div class="btn" style="left:1849px;top:99px">Search</div>
<div class="btn" style="left:1777px;top:145px">Results<br>Table</div>
<div class="btn" style="left:1849px;top:145px">Plot</div>
<div class="abs" style="left:1773px;top:190px;width:144px;height:1px;background:#6a625a"></div>
<div class="abs" style="left:1773px;top:943px;width:144px;height:1px;background:#6a625a"></div>
<div class="btn" style="left:1776px;top:952px;height:37px">
 <svg class="abs" style="left:0;top:0" width="62" height="36" viewBox="0 0 62 36">
  <g fill="#c4c4c4"><rect x="18.5" y="6" width="2" height="2"/><rect x="23" y="6" width="1.5" height="1.5"/><rect x="27.5" y="6" width="1.5" height="1.5"/><rect x="32" y="6" width="2" height="2"/>
  <rect x="18.5" y="11" width="1.5" height="1.5"/><rect x="32.5" y="10.5" width="2" height="2"/><rect x="18.5" y="15" width="1.5" height="1.5"/><rect x="18.5" y="19" width="2" height="2"/><rect x="23" y="19.5" width="1.5" height="1.5"/></g>
  <line x1="35.5" y1="23.5" x2="41.5" y2="29.5" stroke="#cfcfcf" stroke-width="2.8" stroke-linecap="round"/>
  <circle cx="32.5" cy="19.5" r="5.3" fill="#8a8a8a" stroke="#d0d0d0" stroke-width="1.5"/>
 </svg>
</div>
<svg class="abs" style="left:1866px;top:952px" width="34" height="38" viewBox="0 0 34 38">
 <g fill="none" stroke="#d0d0d0" stroke-width="1.4">
  <ellipse cx="16.5" cy="6.5" rx="13" ry="3.5"/><path d="M13 3.5Q16.5 1 20 3.5"/>
  <path d="M3.5 8L5.5 31Q6 34 16.5 34Q27 34 27.5 31L29.5 8"/>
  <path d="M10 13L11 30M16.5 13V30M23 13L22 30"/>
 </g>
</svg>
<div class="badge" style="left:3px"><div class="hd" style="background:#4a4620;color:#f2e52e"><span>Ch 1</span></div><div class="bd">4 V/div<br>1 MΩ<br>200 kHz<span class="bw">B<sub style="font-size:9px;vertical-align:-3px">w</sub></span></div></div>
<div class="badge" style="left:98px"><div class="hd" style="background:#1d4446;color:#2ec6d6"><span>Ch 2</span></div><div class="bd">50 mV/div<br>50 Ω<br>200 kHz<span class="bw">B<sub style="font-size:9px;vertical-align:-3px">w</sub></span></div></div>
<div class="badge" style="left:193px"><div class="hd" style="background:#4a2329;color:#e8455c"><span>Ch 3</span></div><div class="bd">100 mV/div<br>50 Ω<br>200 kHz<span class="bw">B<sub style="font-size:9px;vertical-align:-3px">w</sub></span></div></div>
<div class="badge" style="left:288px"><div class="hd" style="background:#2f4220;color:#8fcf2e"><span>Ch 4</span></div><div class="bd">50 mV/div<br>50 Ω<br>200 kHz<span class="bw">B<sub style="font-size:9px;vertical-align:-3px">w</sub></span></div></div>
<div class="badge" style="left:383px"><div class="hd" style="background:#4b3421;color:#f49a32"><span>Ch 5</span></div><div class="bd">50 mV/div<br>50 Ω<br>200 kHz<span class="bw">B<sub style="font-size:9px;vertical-align:-3px">w</sub></span></div></div>
<div class="badge" style="left:478px"><div class="hd" style="background:#1d1f40;color:#3434cc"><span>Ch 6</span></div><div class="bd">1 V/div<br>50 Ω<br>200 kHz<span class="bw">B<sub style="font-size:9px;vertical-align:-3px">w</sub></span></div></div>
<div class="badge" style="left:573px"><div class="hd" style="background:#46253a;color:#e04eae"><span>Ch 7</span></div><div class="bd">10 V/div<br>1 MΩ<br>200 kHz<span class="bw">B<sub style="font-size:9px;vertical-align:-3px">w</sub></span></div></div>
<div class="badge" style="left:668px"><div class="hd" style="background:#00dfa0;color:#111"><span>Ch 8</span></div><div class="bd">2 V/div<br>1 MΩ<br>200 kHz<span class="bw">B<sub style="font-size:9px;vertical-align:-3px">w</sub></span></div></div>
<div class="vsep" style="left:1119px"></div>
<div class="vsep" style="left:1270px"></div>
<div class="addbtn" style="left:1130px"><div class="ln" style="background:#f68e26"></div>Add<br>New<br>Math</div>
<div class="addbtn" style="left:1175px"><div class="ln" style="background:#c8c8c8"></div>Add<br>New<br>Ref</div>
<div class="addbtn" style="left:1220px"><div class="ln" style="background:#c060e8"></div>Add<br>New<br>Bus</div>
<div class="panel" style="left:1281px;width:200px"><div class="hd">Horizontal</div><div class="bd">3 ms/div<br>SR: 1 MS/s<br>RL: 30 kpts
 <div class="abs" style="left:113px;top:0">30 ms<br>1 µs/pt<br><span style="display:inline-block;width:12px"></span> 10%</div></div></div>
<svg class="abs" style="left:1393px;top:1059px" width="12" height="16" viewBox="0 0 12 16"><path d="M1.5 1.5H10.5V11H7.5L6 13.5L4.5 11H1.5Z" fill="#111" stroke="#f68e26" stroke-width="1.4"/><path d="M3.5 4H8.5M6 4V9.5" stroke="#fff" stroke-width="1.6"/></svg>
<div class="panel" style="left:1491px;width:160px"><div class="hd">Trigger</div><div class="bd"></div></div>
<div class="abs" style="left:1498px;top:1021px;width:30px;height:18px;border:1px solid #111;border-radius:6px;background:#00dfa0;font-size:15px;line-height:16px;text-align:center;color:#111">8</div>
<svg class="abs" style="left:1536px;top:1022px" width="20" height="16" viewBox="0 0 20 16"><path d="M2 14H6L14 4H18" fill="none" stroke="#3a3a90" stroke-width="1.2"/></svg>
<div class="abs" style="left:1564px;top:1020px;font-size:16px;color:#111">4 V</div>
<div class="panel" style="left:1661px;width:150px"><div class="hd">Acquisition</div><div class="bd">Manual,<span class="abs" style="left:86px;top:0">Analyze</span><br>High Res: 16 bits<br>Single: 1 /1</div></div>
<div class="abs" style="left:1821px;top:998px;width:90px;height:35px;border:1px solid #6a5555;border-radius:6px;background:#fc1c24;color:#fff;font-weight:bold;font-size:13px;line-height:33px;text-align:center">Stopped</div>
<div class="abs" style="left:1821px;top:1042px;width:90px;height:36px;border-radius:4px;background:#c9c9c9;color:#111;font-size:15px;line-height:17px;text-align:center;padding-top:1px">16 Apr 2025<br>12:37:03</div>
</body></html>
